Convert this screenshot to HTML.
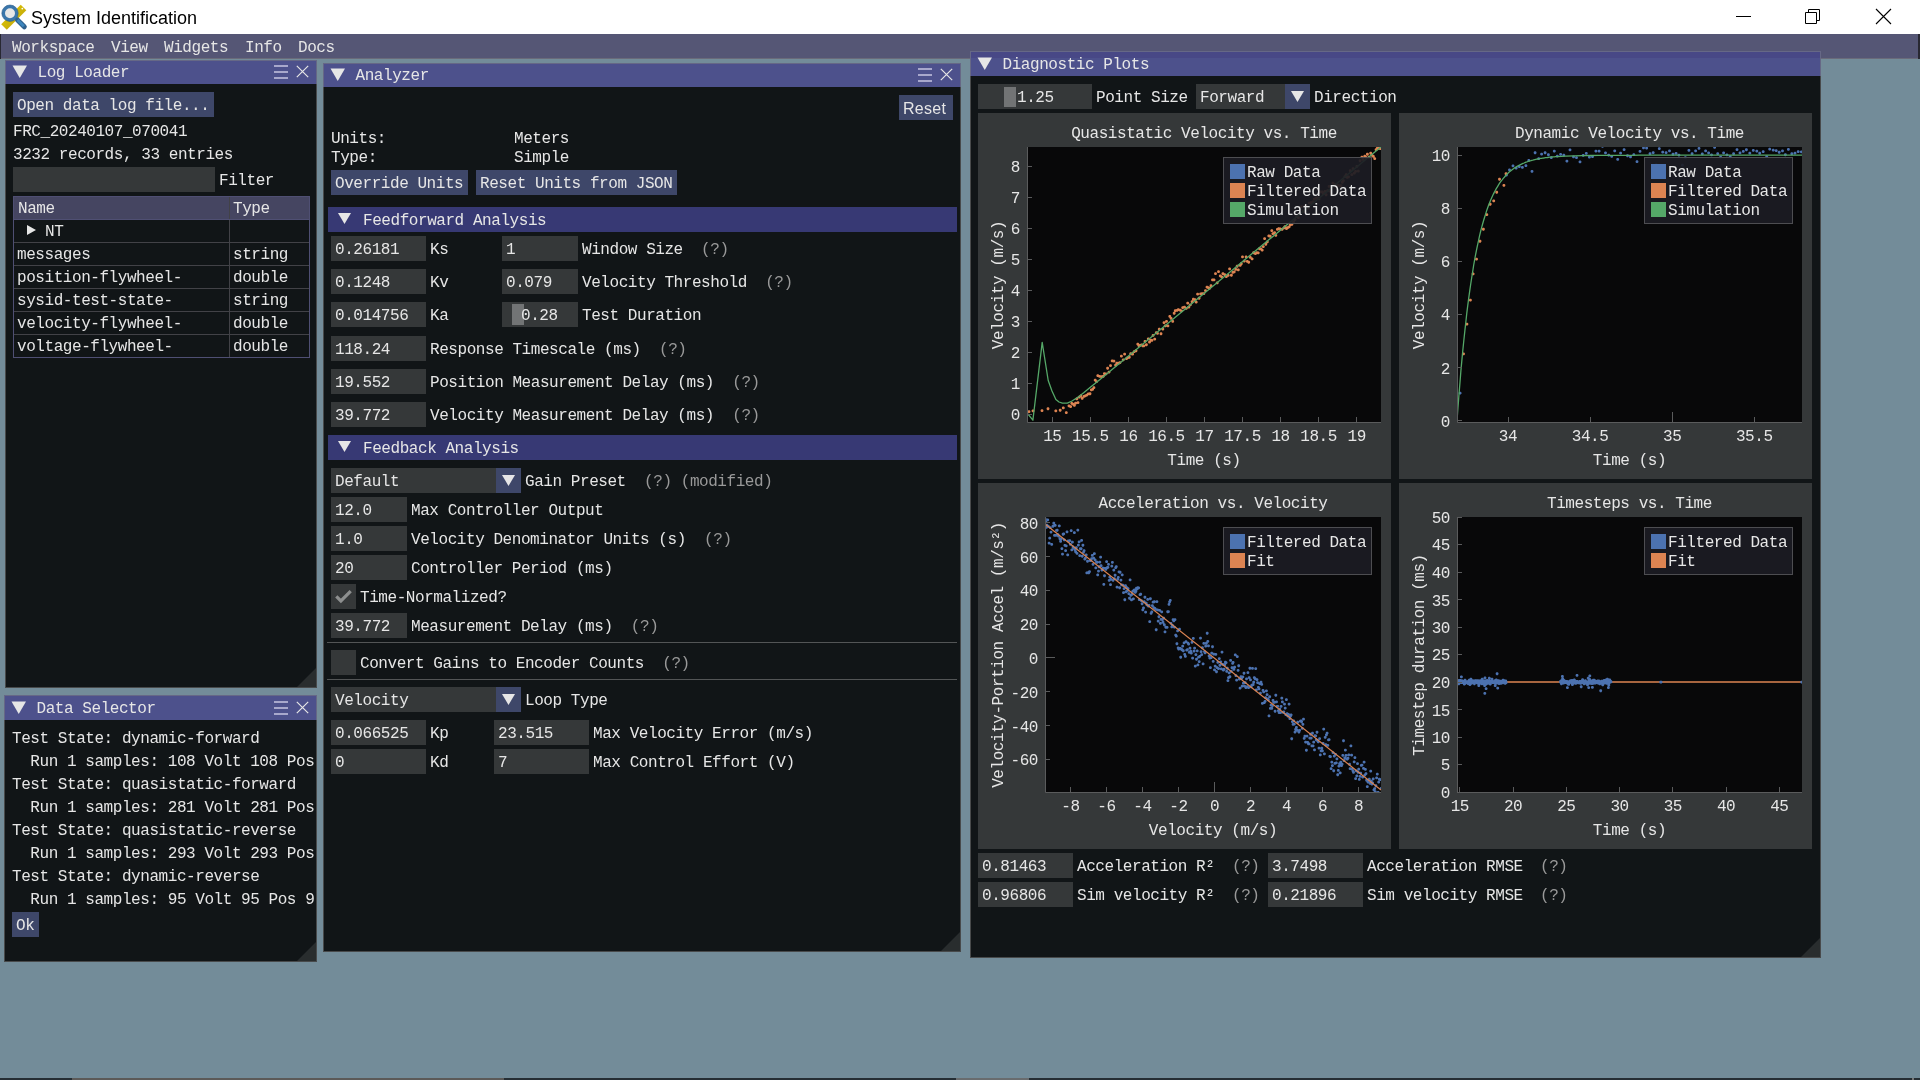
<!DOCTYPE html>
<html><head><meta charset="utf-8"><style>
html,body{margin:0;padding:0;width:1920px;height:1080px;overflow:hidden;background:rgb(115,140,153);}
.r{position:absolute;}
.t{position:absolute;font-family:"Liberation Mono",monospace;font-size:16px;line-height:16px;letter-spacing:-0.44px;white-space:pre;color:rgb(230,230,230);}
#root{position:absolute;left:0;top:0;width:1920px;height:1080px;overflow:hidden;will-change:transform;background:rgb(115,140,153);}
</style></head><body><div id="root">
<div class="r" style="left:0px;top:0px;width:1920px;height:1080px;background:rgb(115,140,153);"></div>
<div class="r" style="left:0px;top:0px;width:1920px;height:34px;background:#ffffff;"></div>
<div class="t" style="left:31px;top:10px;color:#000;font-family:'Liberation Sans',sans-serif;font-size:18px;letter-spacing:0;">System Identification</div>
<div class="r" style="left:1736px;top:16px;width:15px;height:1px;background:#000;"></div>
<svg class="r" style="left:1804px;top:8px" width="17" height="17"><path d="M1.5 4.5h11v11h-11z M4.5 4.5v-3h11v11h-3" fill="none" stroke="#000" stroke-width="1"/></svg>
<svg class="r" style="left:1875px;top:8px" width="17" height="17"><path d="M1 1L16 16M16 1L1 16" stroke="#000" stroke-width="1.1"/></svg>
<svg class="r" style="left:0px;top:0px" width="30" height="32" viewBox="0 0 30 32">
<defs><linearGradient id="yg" x1="0" y1="0" x2="1" y2="1"><stop offset="0" stop-color="#ecd000"/><stop offset="1" stop-color="#b39b10"/></linearGradient></defs>
<path d="M1.2 24.2 L20.7 4.7 L26.3 10.3 L6.8 29.8 Z" fill="url(#yg)"/>
<circle cx="22.3" cy="8.6" r="0.9" fill="#fff"/>
<line x1="17.5" y1="20" x2="24.3" y2="26.8" stroke="#2d5f8c" stroke-width="5" stroke-linecap="round"/>
<line x1="17.5" y1="20" x2="23.8" y2="26.3" stroke="#3d86bd" stroke-width="3"/>
<circle cx="10" cy="13.2" r="6.6" fill="#e6e6e6" stroke="#3a76ab" stroke-width="3.2"/>
<circle cx="10" cy="13.2" r="8.2" fill="none" stroke="#2a5d8c" stroke-width="0.6"/>
</svg>
<div class="r" style="left:0px;top:34px;width:1920px;height:24px;background:rgb(85,86,117);"></div>
<div class="r" style="left:0px;top:58px;width:1920px;height:1px;background:rgb(106,107,122);"></div>
<div class="r" style="left:0px;top:34px;width:1px;height:25px;background:rgb(40,40,50);"></div>
<div class="r" style="left:1918px;top:34px;width:2px;height:25px;background:rgb(40,40,50);"></div>
<div class="t" style="left:12px;top:40px;">Workspace</div>
<div class="t" style="left:111px;top:40px;">View</div>
<div class="t" style="left:164px;top:40px;">Widgets</div>
<div class="t" style="left:245px;top:40px;">Info</div>
<div class="t" style="left:298px;top:40px;">Docs</div>
<div class="r" style="left:0px;top:1078px;width:1920px;height:2px;background:rgb(38,46,52);"></div>
<div class="r" style="left:72px;top:1078px;width:432px;height:2px;background:rgb(92,90,88);"></div>
<div class="r" style="left:956px;top:1078px;width:73px;height:2px;background:rgb(105,108,110);"></div>
<div class="r" style="left:1912px;top:1078px;width:2px;height:2px;background:rgb(120,120,120);"></div>
<div class="r" style="left:5px;top:60px;width:312px;height:628px;background:rgb(17,21,23);"></div>
<div class="r" style="left:5px;top:60px;width:312px;height:24px;background:rgb(77,81,140);"></div>
<div class="r" style="left:5px;top:60px;width:312px;height:1px;background:rgb(102,104,134);"></div>
<div class="r" style="left:5px;top:60px;width:1px;height:24px;background:rgb(102,104,134);"></div>
<div class="r" style="left:316px;top:60px;width:1px;height:24px;background:rgb(102,104,134);"></div>
<div class="r" style="left:5px;top:84px;width:1px;height:604px;background:rgb(72,74,75);"></div>
<div class="r" style="left:316px;top:84px;width:1px;height:604px;background:rgb(72,74,75);"></div>
<div class="r" style="left:5px;top:687px;width:312px;height:1px;background:rgb(72,74,75);"></div>
<svg class="r" style="left:297px;top:668px" width="19" height="19"><polygon points="19,0 19,19 0,19" fill="rgb(41,45,46)"/></svg>
<svg class="r" style="left:12px;top:65px" width="15" height="13"><polygon points="0.5,0.5 15,0.5 7.75,13" fill="rgb(230,230,230)"/></svg>
<div class="t" style="left:37.5px;top:65px;">Log Loader</div>
<div class="r" style="left:274px;top:65px;width:14px;height:2px;background:rgb(168,168,204);"></div>
<div class="r" style="left:274px;top:71px;width:14px;height:2px;background:rgb(168,168,204);"></div>
<div class="r" style="left:274px;top:77px;width:14px;height:2px;background:rgb(168,168,204);"></div>
<svg class="r" style="left:296px;top:65px" width="13" height="13"><path d="M0.8 0.8L12.2 12.2M12.2 0.8L0.8 12.2" stroke="rgb(230,230,230)" stroke-width="1.2"/></svg>
<div class="r" style="left:13px;top:92px;width:201px;height:25px;background:rgb(62,71,105);"></div>
<div class="t" style="left:17px;top:98px;">Open data log file...</div>
<div class="t" style="left:13px;top:124px;">FRC_20240107_070041</div>
<div class="t" style="left:13px;top:147px;">3232 records, 33 entries</div>
<div class="r" style="left:13px;top:167px;width:202px;height:25px;background:rgb(53,56,57);"></div>
<div class="t" style="left:219px;top:173px;">Filter</div>
<div class="r" style="left:13px;top:196px;width:297px;height:24px;background:rgb(69,69,97);"></div>
<div class="r" style="left:13px;top:196px;width:295px;height:160px;border:1px solid rgb(79,79,115);"></div>
<div class="r" style="left:229px;top:197px;width:1px;height:160px;background:rgb(66,66,71);"></div>
<div class="r" style="left:14px;top:242px;width:295px;height:1px;background:rgb(66,66,71);"></div>
<div class="r" style="left:14px;top:265px;width:295px;height:1px;background:rgb(66,66,71);"></div>
<div class="r" style="left:14px;top:288px;width:295px;height:1px;background:rgb(66,66,71);"></div>
<div class="r" style="left:14px;top:311px;width:295px;height:1px;background:rgb(66,66,71);"></div>
<div class="r" style="left:14px;top:334px;width:295px;height:1px;background:rgb(66,66,71);"></div>
<div class="r" style="left:13px;top:219px;width:297px;height:1px;background:rgb(79,79,115);"></div>
<div class="t" style="left:18px;top:201px;">Name</div>
<div class="t" style="left:233px;top:201px;">Type</div>
<svg class="r" style="left:27px;top:225px" width="9" height="10"><polygon points="0,0 9,5.0 0,10" fill="rgb(230,230,230)"/></svg>
<div class="t" style="left:45px;top:224px;">NT</div>
<div class="t" style="left:17px;top:247px;">messages</div>
<div class="t" style="left:233px;top:247px;">string</div>
<div class="t" style="left:17px;top:270px;">position-flywheel-</div>
<div class="t" style="left:233px;top:270px;">double</div>
<div class="t" style="left:17px;top:293px;">sysid-test-state-</div>
<div class="t" style="left:233px;top:293px;">string</div>
<div class="t" style="left:17px;top:316px;">velocity-flywheel-</div>
<div class="t" style="left:233px;top:316px;">double</div>
<div class="t" style="left:17px;top:339px;">voltage-flywheel-</div>
<div class="t" style="left:233px;top:339px;">double</div>
<div class="r" style="left:4px;top:695px;width:313px;height:267px;background:rgb(17,21,23);"></div>
<div class="r" style="left:4px;top:695px;width:313px;height:25px;background:rgb(77,81,140);"></div>
<div class="r" style="left:4px;top:695px;width:313px;height:1px;background:rgb(102,104,134);"></div>
<div class="r" style="left:4px;top:695px;width:1px;height:25px;background:rgb(102,104,134);"></div>
<div class="r" style="left:316px;top:695px;width:1px;height:25px;background:rgb(102,104,134);"></div>
<div class="r" style="left:4px;top:720px;width:1px;height:242px;background:rgb(72,74,75);"></div>
<div class="r" style="left:316px;top:720px;width:1px;height:242px;background:rgb(72,74,75);"></div>
<div class="r" style="left:4px;top:961px;width:313px;height:1px;background:rgb(72,74,75);"></div>
<svg class="r" style="left:297px;top:942px" width="19" height="19"><polygon points="19,0 19,19 0,19" fill="rgb(41,45,46)"/></svg>
<svg class="r" style="left:11px;top:701px" width="15" height="13"><polygon points="0.5,0.5 15,0.5 7.75,13" fill="rgb(230,230,230)"/></svg>
<div class="t" style="left:36.5px;top:701px;">Data Selector</div>
<div class="r" style="left:274px;top:701px;width:14px;height:2px;background:rgb(168,168,204);"></div>
<div class="r" style="left:274px;top:707px;width:14px;height:2px;background:rgb(168,168,204);"></div>
<div class="r" style="left:274px;top:713px;width:14px;height:2px;background:rgb(168,168,204);"></div>
<svg class="r" style="left:296px;top:701px" width="13" height="13"><path d="M0.8 0.8L12.2 12.2M12.2 0.8L0.8 12.2" stroke="rgb(230,230,230)" stroke-width="1.2"/></svg>
<div class="r" style="left:0;top:720px;width:315px;height:190px;overflow:hidden">
<div class="t" style="left:12px;top:11px;">Test State: dynamic-forward</div>
<div class="t" style="left:12px;top:34px;">  Run 1 samples: 108 Volt 108 Pos</div>
<div class="t" style="left:12px;top:57px;">Test State: quasistatic-forward</div>
<div class="t" style="left:12px;top:80px;">  Run 1 samples: 281 Volt 281 Pos</div>
<div class="t" style="left:12px;top:103px;">Test State: quasistatic-reverse</div>
<div class="t" style="left:12px;top:126px;">  Run 1 samples: 293 Volt 293 Pos</div>
<div class="t" style="left:12px;top:149px;">Test State: dynamic-reverse</div>
<div class="t" style="left:12px;top:172px;">  Run 1 samples: 95 Volt 95 Pos 9</div>
</div>
<div class="r" style="left:12px;top:912px;width:27px;height:25px;background:rgb(62,71,105);"></div>
<div class="t" style="left:16px;top:918px;">Ok</div>
<div class="r" style="left:323px;top:63px;width:638px;height:889px;background:rgb(17,21,23);"></div>
<div class="r" style="left:323px;top:63px;width:638px;height:24px;background:rgb(77,81,140);"></div>
<div class="r" style="left:323px;top:63px;width:638px;height:1px;background:rgb(102,104,134);"></div>
<div class="r" style="left:323px;top:63px;width:1px;height:24px;background:rgb(102,104,134);"></div>
<div class="r" style="left:960px;top:63px;width:1px;height:24px;background:rgb(102,104,134);"></div>
<div class="r" style="left:323px;top:87px;width:1px;height:865px;background:rgb(72,74,75);"></div>
<div class="r" style="left:960px;top:87px;width:1px;height:865px;background:rgb(72,74,75);"></div>
<div class="r" style="left:323px;top:951px;width:638px;height:1px;background:rgb(72,74,75);"></div>
<svg class="r" style="left:941px;top:932px" width="19" height="19"><polygon points="19,0 19,19 0,19" fill="rgb(41,45,46)"/></svg>
<svg class="r" style="left:330px;top:68px" width="15" height="13"><polygon points="0.5,0.5 15,0.5 7.75,13" fill="rgb(230,230,230)"/></svg>
<div class="t" style="left:355.5px;top:68px;">Analyzer</div>
<div class="r" style="left:918px;top:68px;width:14px;height:2px;background:rgb(168,168,204);"></div>
<div class="r" style="left:918px;top:74px;width:14px;height:2px;background:rgb(168,168,204);"></div>
<div class="r" style="left:918px;top:80px;width:14px;height:2px;background:rgb(168,168,204);"></div>
<svg class="r" style="left:940px;top:68px" width="13" height="13"><path d="M0.8 0.8L12.2 12.2M12.2 0.8L0.8 12.2" stroke="rgb(230,230,230)" stroke-width="1.2"/></svg>
<div class="r" style="left:899px;top:95px;width:54px;height:25px;background:rgb(62,71,105);"></div>
<div class="t" style="left:903px;top:101px;font-family:'Liberation Sans',sans-serif;font-size:16px;letter-spacing:0.3px;">Reset</div>
<div class="t" style="left:331px;top:131px;">Units:</div>
<div class="t" style="left:514px;top:131px;">Meters</div>
<div class="t" style="left:331px;top:150px;">Type:</div>
<div class="t" style="left:514px;top:150px;">Simple</div>
<div class="r" style="left:331px;top:170px;width:137px;height:25px;background:rgb(62,71,105);"></div>
<div class="t" style="left:335px;top:176px;">Override Units</div>
<div class="r" style="left:476px;top:170px;width:201px;height:25px;background:rgb(62,71,105);"></div>
<div class="t" style="left:480px;top:176px;">Reset Units from JSON</div>
<div class="r" style="left:328px;top:207px;width:629px;height:25px;background:rgb(55,57,116);"></div>
<svg class="r" style="left:338px;top:213px" width="13" height="11"><polygon points="0,0 13,0 6.5,11" fill="rgb(230,230,230)"/></svg>
<div class="t" style="left:363px;top:213px;">Feedforward Analysis</div>
<div class="r" style="left:331px;top:236px;width:95px;height:25px;background:rgb(53,56,57);"></div>
<div class="t" style="left:335px;top:242px;">0.26181</div>
<div class="t" style="left:430px;top:242px;">Ks</div>
<div class="r" style="left:502px;top:236px;width:76px;height:25px;background:rgb(53,56,57);"></div>
<div class="t" style="left:506px;top:242px;">1</div>
<div class="t" style="left:582px;top:242px;">Window Size</div>
<div class="t" style="left:682.76px;top:242px;color:rgb(153,153,153);">  (?)</div>
<div class="r" style="left:331px;top:269px;width:95px;height:25px;background:rgb(53,56,57);"></div>
<div class="t" style="left:335px;top:275px;">0.1248</div>
<div class="t" style="left:430px;top:275px;">Kv</div>
<div class="r" style="left:502px;top:269px;width:76px;height:25px;background:rgb(53,56,57);"></div>
<div class="t" style="left:506px;top:275px;">0.079</div>
<div class="t" style="left:582px;top:275px;">Velocity Threshold</div>
<div class="t" style="left:746.88px;top:275px;color:rgb(153,153,153);">  (?)</div>
<div class="r" style="left:331px;top:302px;width:95px;height:25px;background:rgb(53,56,57);"></div>
<div class="t" style="left:335px;top:308px;">0.014756</div>
<div class="t" style="left:430px;top:308px;">Ka</div>
<div class="r" style="left:502px;top:302px;width:76px;height:25px;background:rgb(53,56,57);"></div>
<div class="r" style="left:512px;top:304px;width:12px;height:21px;background:rgb(114,116,117);"></div>
<div class="t" style="left:521px;top:308px;">0.28</div>
<div class="t" style="left:582px;top:308px;">Test Duration</div>
<div class="r" style="left:331px;top:336px;width:95px;height:25px;background:rgb(53,56,57);"></div>
<div class="t" style="left:335px;top:342px;">118.24</div>
<div class="t" style="left:430px;top:342px;">Response Timescale (ms)</div>
<div class="t" style="left:640.6800000000001px;top:342px;color:rgb(153,153,153);">  (?)</div>
<div class="r" style="left:331px;top:369px;width:95px;height:25px;background:rgb(53,56,57);"></div>
<div class="t" style="left:335px;top:375px;">19.552</div>
<div class="t" style="left:430px;top:375px;">Position Measurement Delay (ms)</div>
<div class="t" style="left:713.96px;top:375px;color:rgb(153,153,153);">  (?)</div>
<div class="r" style="left:331px;top:402px;width:95px;height:25px;background:rgb(53,56,57);"></div>
<div class="t" style="left:335px;top:408px;">39.772</div>
<div class="t" style="left:430px;top:408px;">Velocity Measurement Delay (ms)</div>
<div class="t" style="left:713.96px;top:408px;color:rgb(153,153,153);">  (?)</div>
<div class="r" style="left:328px;top:435px;width:629px;height:25px;background:rgb(55,57,116);"></div>
<svg class="r" style="left:338px;top:441px" width="13" height="11"><polygon points="0,0 13,0 6.5,11" fill="rgb(230,230,230)"/></svg>
<div class="t" style="left:363px;top:441px;">Feedback Analysis</div>
<div class="r" style="left:331px;top:468px;width:165px;height:25px;background:rgb(53,56,57);"></div>
<div class="r" style="left:496px;top:468px;width:25px;height:25px;background:rgb(62,71,105);"></div>
<svg class="r" style="left:502px;top:475px" width="13" height="11"><polygon points="0,0 13,0 6.5,11" fill="rgb(230,230,230)"/></svg>
<div class="t" style="left:335px;top:474px;">Default</div>
<div class="t" style="left:525px;top:474px;">Gain Preset</div>
<div class="t" style="left:625.76px;top:474px;color:rgb(153,153,153);">  (?) (modified)</div>
<div class="r" style="left:331px;top:497px;width:76px;height:25px;background:rgb(53,56,57);"></div>
<div class="t" style="left:335px;top:503px;">12.0</div>
<div class="t" style="left:411px;top:503px;">Max Controller Output</div>
<div class="r" style="left:331px;top:526px;width:76px;height:25px;background:rgb(53,56,57);"></div>
<div class="t" style="left:335px;top:532px;">1.0</div>
<div class="t" style="left:411px;top:532px;">Velocity Denominator Units (s)</div>
<div class="t" style="left:685.8px;top:532px;color:rgb(153,153,153);">  (?)</div>
<div class="r" style="left:331px;top:555px;width:76px;height:25px;background:rgb(53,56,57);"></div>
<div class="t" style="left:335px;top:561px;">20</div>
<div class="t" style="left:411px;top:561px;">Controller Period (ms)</div>
<div class="r" style="left:331px;top:584px;width:25px;height:25px;background:rgb(53,56,57);"></div>
<svg class="r" style="left:331px;top:584px" width="25" height="25"><path d="M5.3 12.3 L9.9 16.9 L19.7 7.1" fill="none" stroke="rgb(141,143,143)" stroke-width="3.2"/></svg>
<div class="t" style="left:360px;top:590px;">Time-Normalized?</div>
<div class="r" style="left:331px;top:613px;width:76px;height:25px;background:rgb(53,56,57);"></div>
<div class="t" style="left:335px;top:619px;">39.772</div>
<div class="t" style="left:411px;top:619px;">Measurement Delay (ms)</div>
<div class="t" style="left:612.52px;top:619px;color:rgb(153,153,153);">  (?)</div>
<div class="r" style="left:327px;top:642px;width:630px;height:1px;background:rgb(83,85,86);"></div>
<div class="r" style="left:331px;top:650px;width:25px;height:25px;background:rgb(53,56,57);"></div>
<div class="t" style="left:360px;top:656px;">Convert Gains to Encoder Counts</div>
<div class="t" style="left:643.96px;top:656px;color:rgb(153,153,153);">  (?)</div>
<div class="r" style="left:327px;top:679px;width:630px;height:1px;background:rgb(83,85,86);"></div>
<div class="r" style="left:331px;top:687px;width:165px;height:25px;background:rgb(53,56,57);"></div>
<div class="r" style="left:496px;top:687px;width:25px;height:25px;background:rgb(62,71,105);"></div>
<svg class="r" style="left:502px;top:694px" width="13" height="11"><polygon points="0,0 13,0 6.5,11" fill="rgb(230,230,230)"/></svg>
<div class="t" style="left:335px;top:693px;">Velocity</div>
<div class="t" style="left:525px;top:693px;">Loop Type</div>
<div class="r" style="left:331px;top:720px;width:95px;height:25px;background:rgb(53,56,57);"></div>
<div class="t" style="left:335px;top:726px;">0.066525</div>
<div class="t" style="left:430px;top:726px;">Kp</div>
<div class="r" style="left:494px;top:720px;width:95px;height:25px;background:rgb(53,56,57);"></div>
<div class="t" style="left:498px;top:726px;">23.515</div>
<div class="t" style="left:593px;top:726px;">Max Velocity Error (m/s)</div>
<div class="r" style="left:331px;top:749px;width:95px;height:25px;background:rgb(53,56,57);"></div>
<div class="t" style="left:335px;top:755px;">0</div>
<div class="t" style="left:430px;top:755px;">Kd</div>
<div class="r" style="left:494px;top:749px;width:95px;height:25px;background:rgb(53,56,57);"></div>
<div class="t" style="left:498px;top:755px;">7</div>
<div class="t" style="left:593px;top:755px;">Max Control Effort (V)</div>
<div class="r" style="left:970px;top:51px;width:851px;height:907px;background:rgb(17,21,23);"></div>
<div class="r" style="left:970px;top:51px;width:851px;height:25px;background:rgb(77,81,140);"></div>
<div class="r" style="left:970px;top:51px;width:851px;height:7px;background:rgb(72,72,134);"></div>
<div class="r" style="left:970px;top:51px;width:851px;height:1px;background:rgb(102,104,134);"></div>
<div class="r" style="left:970px;top:51px;width:1px;height:25px;background:rgb(102,104,134);"></div>
<div class="r" style="left:1820px;top:51px;width:1px;height:25px;background:rgb(102,104,134);"></div>
<div class="r" style="left:970px;top:76px;width:1px;height:882px;background:rgb(72,74,75);"></div>
<div class="r" style="left:1820px;top:76px;width:1px;height:882px;background:rgb(72,74,75);"></div>
<div class="r" style="left:970px;top:957px;width:851px;height:1px;background:rgb(72,74,75);"></div>
<svg class="r" style="left:1801px;top:938px" width="19" height="19"><polygon points="19,0 19,19 0,19" fill="rgb(41,45,46)"/></svg>
<svg class="r" style="left:977px;top:57px" width="15" height="13"><polygon points="0.5,0.5 15,0.5 7.75,13" fill="rgb(230,230,230)"/></svg>
<div class="t" style="left:1002.5px;top:57px;">Diagnostic Plots</div>
<div class="r" style="left:978px;top:84px;width:114px;height:25px;background:rgb(53,56,57);"></div>
<div class="r" style="left:1004px;top:87px;width:12px;height:20px;background:rgb(114,116,117);"></div>
<div class="t" style="left:1017px;top:90px;">1.25</div>
<div class="t" style="left:1096px;top:90px;">Point Size</div>
<div class="r" style="left:1196px;top:84px;width:89px;height:25px;background:rgb(53,56,57);"></div>
<div class="r" style="left:1285px;top:84px;width:25px;height:25px;background:rgb(62,71,105);"></div>
<svg class="r" style="left:1291px;top:91px" width="13" height="11"><polygon points="0,0 13,0 6.5,11" fill="rgb(230,230,230)"/></svg>
<div class="t" style="left:1200px;top:90px;">Forward</div>
<div class="t" style="left:1314px;top:90px;">Direction</div>
<div class="r" style="left:978px;top:113px;width:413px;height:366px;background:rgb(53,56,57);"></div>
<div class="r" style="left:1027px;top:147px;width:354px;height:275px;background:rgb(8,8,9);"></div>
<div class="t" style="left:904.0px;width:600px;text-align:center;top:126px;">Quasistatic Velocity vs. Time</div>
<div class="t" style="left:904.0px;width:600px;text-align:center;top:453px;">Time (s)</div>
<svg class="r" style="left:1027px;top:147px;overflow:hidden" width="354" height="276"><path d="M0.6 263.9l0.77 -0.77h1.26l0.77 0.77v1.26l-0.77 0.77h-1.26l-0.77 -0.77zM4.6 263.3l0.77 -0.77h1.26l0.77 0.77v1.26l-0.77 0.77h-1.26l-0.77 -0.77zM13.6 262.9l0.77 -0.77h1.26l0.77 0.77v1.26l-0.77 0.77h-1.26l-0.77 -0.77zM19.6 261.1l0.77 -0.77h1.26l0.77 0.77v1.26l-0.77 0.77h-1.26l-0.77 -0.77zM27.4 263.3l0.77 -0.77h1.26l0.77 0.77v1.26l-0.77 0.77h-1.26l-0.77 -0.77zM31.8 262.6l0.77 -0.77h1.26l0.77 0.77v1.26l-0.77 0.77h-1.26l-0.77 -0.77zM34.9 260.2l0.77 -0.77h1.26l0.77 0.77v1.26l-0.77 0.77h-1.26l-0.77 -0.77zM37.9 265.0l0.77 -0.77h1.26l0.77 0.77v1.26l-0.77 0.77h-1.26l-0.77 -0.77zM40.6 258.3l0.77 -0.77h1.26l0.77 0.77v1.26l-0.77 0.77h-1.26l-0.77 -0.77zM42.2 258.9l0.77 -0.77h1.26l0.77 0.77v1.26l-0.77 0.77h-1.26l-0.77 -0.77zM43.4 255.8l0.77 -0.77h1.26l0.77 0.77v1.26l-0.77 0.77h-1.26l-0.77 -0.77zM44.5 256.4l0.77 -0.77h1.26l0.77 0.77v1.26l-0.77 0.77h-1.26l-0.77 -0.77zM46.0 257.7l0.77 -0.77h1.26l0.77 0.77v1.26l-0.77 0.77h-1.26l-0.77 -0.77zM47.2 255.5l0.77 -0.77h1.26l0.77 0.77v1.26l-0.77 0.77h-1.26l-0.77 -0.77zM48.4 251.3l0.77 -0.77h1.26l0.77 0.77v1.26l-0.77 0.77h-1.26l-0.77 -0.77zM49.6 255.0l0.77 -0.77h1.26l0.77 0.77v1.26l-0.77 0.77h-1.26l-0.77 -0.77zM50.8 249.5l0.77 -0.77h1.26l0.77 0.77v1.26l-0.77 0.77h-1.26l-0.77 -0.77zM52.4 248.2l0.77 -0.77h1.26l0.77 0.77v1.26l-0.77 0.77h-1.26l-0.77 -0.77zM53.8 250.8l0.77 -0.77h1.26l0.77 0.77v1.26l-0.77 0.77h-1.26l-0.77 -0.77zM55.6 248.8l0.77 -0.77h1.26l0.77 0.77v1.26l-0.77 0.77h-1.26l-0.77 -0.77zM56.9 248.3l0.77 -0.77h1.26l0.77 0.77v1.26l-0.77 0.77h-1.26l-0.77 -0.77zM58.3 247.4l0.77 -0.77h1.26l0.77 0.77v1.26l-0.77 0.77h-1.26l-0.77 -0.77zM60.0 246.3l0.77 -0.77h1.26l0.77 0.77v1.26l-0.77 0.77h-1.26l-0.77 -0.77zM61.6 246.1l0.77 -0.77h1.26l0.77 0.77v1.26l-0.77 0.77h-1.26l-0.77 -0.77zM63.0 242.2l0.77 -0.77h1.26l0.77 0.77v1.26l-0.77 0.77h-1.26l-0.77 -0.77zM64.2 241.7l0.77 -0.77h1.26l0.77 0.77v1.26l-0.77 0.77h-1.26l-0.77 -0.77zM65.5 240.0l0.77 -0.77h1.26l0.77 0.77v1.26l-0.77 0.77h-1.26l-0.77 -0.77zM66.8 232.4l0.77 -0.77h1.26l0.77 0.77v1.26l-0.77 0.77h-1.26l-0.77 -0.77zM68.1 234.0l0.77 -0.77h1.26l0.77 0.77v1.26l-0.77 0.77h-1.26l-0.77 -0.77zM69.4 228.0l0.77 -0.77h1.26l0.77 0.77v1.26l-0.77 0.77h-1.26l-0.77 -0.77zM71.2 228.8l0.77 -0.77h1.26l0.77 0.77v1.26l-0.77 0.77h-1.26l-0.77 -0.77zM73.1 228.9l0.77 -0.77h1.26l0.77 0.77v1.26l-0.77 0.77h-1.26l-0.77 -0.77zM74.8 228.8l0.77 -0.77h1.26l0.77 0.77v1.26l-0.77 0.77h-1.26l-0.77 -0.77zM76.0 225.9l0.77 -0.77h1.26l0.77 0.77v1.26l-0.77 0.77h-1.26l-0.77 -0.77zM77.5 226.2l0.77 -0.77h1.26l0.77 0.77v1.26l-0.77 0.77h-1.26l-0.77 -0.77zM79.2 220.6l0.77 -0.77h1.26l0.77 0.77v1.26l-0.77 0.77h-1.26l-0.77 -0.77zM80.6 224.5l0.77 -0.77h1.26l0.77 0.77v1.26l-0.77 0.77h-1.26l-0.77 -0.77zM82.1 218.0l0.77 -0.77h1.26l0.77 0.77v1.26l-0.77 0.77h-1.26l-0.77 -0.77zM83.8 213.3l0.77 -0.77h1.26l0.77 0.77v1.26l-0.77 0.77h-1.26l-0.77 -0.77zM85.5 213.5l0.77 -0.77h1.26l0.77 0.77v1.26l-0.77 0.77h-1.26l-0.77 -0.77zM87.2 217.6l0.77 -0.77h1.26l0.77 0.77v1.26l-0.77 0.77h-1.26l-0.77 -0.77zM88.4 215.6l0.77 -0.77h1.26l0.77 0.77v1.26l-0.77 0.77h-1.26l-0.77 -0.77zM90.1 215.6l0.77 -0.77h1.26l0.77 0.77v1.26l-0.77 0.77h-1.26l-0.77 -0.77zM91.5 215.0l0.77 -0.77h1.26l0.77 0.77v1.26l-0.77 0.77h-1.26l-0.77 -0.77zM93.0 208.4l0.77 -0.77h1.26l0.77 0.77v1.26l-0.77 0.77h-1.26l-0.77 -0.77zM94.8 212.2l0.77 -0.77h1.26l0.77 0.77v1.26l-0.77 0.77h-1.26l-0.77 -0.77zM96.2 206.4l0.77 -0.77h1.26l0.77 0.77v1.26l-0.77 0.77h-1.26l-0.77 -0.77zM98.1 211.0l0.77 -0.77h1.26l0.77 0.77v1.26l-0.77 0.77h-1.26l-0.77 -0.77zM99.3 210.0l0.77 -0.77h1.26l0.77 0.77v1.26l-0.77 0.77h-1.26l-0.77 -0.77zM100.9 209.6l0.77 -0.77h1.26l0.77 0.77v1.26l-0.77 0.77h-1.26l-0.77 -0.77zM102.3 206.1l0.77 -0.77h1.26l0.77 0.77v1.26l-0.77 0.77h-1.26l-0.77 -0.77zM104.2 206.4l0.77 -0.77h1.26l0.77 0.77v1.26l-0.77 0.77h-1.26l-0.77 -0.77zM105.8 203.9l0.77 -0.77h1.26l0.77 0.77v1.26l-0.77 0.77h-1.26l-0.77 -0.77zM107.6 203.1l0.77 -0.77h1.26l0.77 0.77v1.26l-0.77 0.77h-1.26l-0.77 -0.77zM109.4 196.5l0.77 -0.77h1.26l0.77 0.77v1.26l-0.77 0.77h-1.26l-0.77 -0.77zM110.5 198.0l0.77 -0.77h1.26l0.77 0.77v1.26l-0.77 0.77h-1.26l-0.77 -0.77zM111.7 197.8l0.77 -0.77h1.26l0.77 0.77v1.26l-0.77 0.77h-1.26l-0.77 -0.77zM113.1 197.3l0.77 -0.77h1.26l0.77 0.77v1.26l-0.77 0.77h-1.26l-0.77 -0.77zM114.3 198.1l0.77 -0.77h1.26l0.77 0.77v1.26l-0.77 0.77h-1.26l-0.77 -0.77zM115.4 198.3l0.77 -0.77h1.26l0.77 0.77v1.26l-0.77 0.77h-1.26l-0.77 -0.77zM116.6 193.8l0.77 -0.77h1.26l0.77 0.77v1.26l-0.77 0.77h-1.26l-0.77 -0.77zM118.0 197.1l0.77 -0.77h1.26l0.77 0.77v1.26l-0.77 0.77h-1.26l-0.77 -0.77zM119.9 191.3l0.77 -0.77h1.26l0.77 0.77v1.26l-0.77 0.77h-1.26l-0.77 -0.77zM121.1 194.5l0.77 -0.77h1.26l0.77 0.77v1.26l-0.77 0.77h-1.26l-0.77 -0.77zM122.4 192.6l0.77 -0.77h1.26l0.77 0.77v1.26l-0.77 0.77h-1.26l-0.77 -0.77zM123.5 192.7l0.77 -0.77h1.26l0.77 0.77v1.26l-0.77 0.77h-1.26l-0.77 -0.77zM124.7 187.8l0.77 -0.77h1.26l0.77 0.77v1.26l-0.77 0.77h-1.26l-0.77 -0.77zM126.3 191.4l0.77 -0.77h1.26l0.77 0.77v1.26l-0.77 0.77h-1.26l-0.77 -0.77zM127.9 185.0l0.77 -0.77h1.26l0.77 0.77v1.26l-0.77 0.77h-1.26l-0.77 -0.77zM129.1 185.7l0.77 -0.77h1.26l0.77 0.77v1.26l-0.77 0.77h-1.26l-0.77 -0.77zM130.9 181.4l0.77 -0.77h1.26l0.77 0.77v1.26l-0.77 0.77h-1.26l-0.77 -0.77zM132.6 186.1l0.77 -0.77h1.26l0.77 0.77v1.26l-0.77 0.77h-1.26l-0.77 -0.77zM134.4 181.5l0.77 -0.77h1.26l0.77 0.77v1.26l-0.77 0.77h-1.26l-0.77 -0.77zM135.6 174.9l0.77 -0.77h1.26l0.77 0.77v1.26l-0.77 0.77h-1.26l-0.77 -0.77zM136.8 178.2l0.77 -0.77h1.26l0.77 0.77v1.26l-0.77 0.77h-1.26l-0.77 -0.77zM138.1 173.7l0.77 -0.77h1.26l0.77 0.77v1.26l-0.77 0.77h-1.26l-0.77 -0.77zM139.5 178.3l0.77 -0.77h1.26l0.77 0.77v1.26l-0.77 0.77h-1.26l-0.77 -0.77zM141.4 168.7l0.77 -0.77h1.26l0.77 0.77v1.26l-0.77 0.77h-1.26l-0.77 -0.77zM142.7 170.7l0.77 -0.77h1.26l0.77 0.77v1.26l-0.77 0.77h-1.26l-0.77 -0.77zM144.3 173.8l0.77 -0.77h1.26l0.77 0.77v1.26l-0.77 0.77h-1.26l-0.77 -0.77zM145.8 165.6l0.77 -0.77h1.26l0.77 0.77v1.26l-0.77 0.77h-1.26l-0.77 -0.77zM146.9 163.0l0.77 -0.77h1.26l0.77 0.77v1.26l-0.77 0.77h-1.26l-0.77 -0.77zM148.7 162.8l0.77 -0.77h1.26l0.77 0.77v1.26l-0.77 0.77h-1.26l-0.77 -0.77zM149.9 162.0l0.77 -0.77h1.26l0.77 0.77v1.26l-0.77 0.77h-1.26l-0.77 -0.77zM151.6 162.4l0.77 -0.77h1.26l0.77 0.77v1.26l-0.77 0.77h-1.26l-0.77 -0.77zM153.1 163.3l0.77 -0.77h1.26l0.77 0.77v1.26l-0.77 0.77h-1.26l-0.77 -0.77zM154.3 160.0l0.77 -0.77h1.26l0.77 0.77v1.26l-0.77 0.77h-1.26l-0.77 -0.77zM156.1 159.4l0.77 -0.77h1.26l0.77 0.77v1.26l-0.77 0.77h-1.26l-0.77 -0.77zM157.9 160.8l0.77 -0.77h1.26l0.77 0.77v1.26l-0.77 0.77h-1.26l-0.77 -0.77zM159.3 155.5l0.77 -0.77h1.26l0.77 0.77v1.26l-0.77 0.77h-1.26l-0.77 -0.77zM160.4 159.4l0.77 -0.77h1.26l0.77 0.77v1.26l-0.77 0.77h-1.26l-0.77 -0.77zM161.9 157.2l0.77 -0.77h1.26l0.77 0.77v1.26l-0.77 0.77h-1.26l-0.77 -0.77zM163.7 154.1l0.77 -0.77h1.26l0.77 0.77v1.26l-0.77 0.77h-1.26l-0.77 -0.77zM165.0 151.6l0.77 -0.77h1.26l0.77 0.77v1.26l-0.77 0.77h-1.26l-0.77 -0.77zM166.6 152.0l0.77 -0.77h1.26l0.77 0.77v1.26l-0.77 0.77h-1.26l-0.77 -0.77zM167.8 154.4l0.77 -0.77h1.26l0.77 0.77v1.26l-0.77 0.77h-1.26l-0.77 -0.77zM169.2 146.4l0.77 -0.77h1.26l0.77 0.77v1.26l-0.77 0.77h-1.26l-0.77 -0.77zM170.7 150.6l0.77 -0.77h1.26l0.77 0.77v1.26l-0.77 0.77h-1.26l-0.77 -0.77zM172.2 146.2l0.77 -0.77h1.26l0.77 0.77v1.26l-0.77 0.77h-1.26l-0.77 -0.77zM173.6 145.9l0.77 -0.77h1.26l0.77 0.77v1.26l-0.77 0.77h-1.26l-0.77 -0.77zM175.4 146.0l0.77 -0.77h1.26l0.77 0.77v1.26l-0.77 0.77h-1.26l-0.77 -0.77zM177.1 142.9l0.77 -0.77h1.26l0.77 0.77v1.26l-0.77 0.77h-1.26l-0.77 -0.77zM178.6 139.4l0.77 -0.77h1.26l0.77 0.77v1.26l-0.77 0.77h-1.26l-0.77 -0.77zM179.8 139.9l0.77 -0.77h1.26l0.77 0.77v1.26l-0.77 0.77h-1.26l-0.77 -0.77zM181.1 140.6l0.77 -0.77h1.26l0.77 0.77v1.26l-0.77 0.77h-1.26l-0.77 -0.77zM182.6 138.1l0.77 -0.77h1.26l0.77 0.77v1.26l-0.77 0.77h-1.26l-0.77 -0.77zM184.1 132.3l0.77 -0.77h1.26l0.77 0.77v1.26l-0.77 0.77h-1.26l-0.77 -0.77zM185.6 132.2l0.77 -0.77h1.26l0.77 0.77v1.26l-0.77 0.77h-1.26l-0.77 -0.77zM187.1 126.0l0.77 -0.77h1.26l0.77 0.77v1.26l-0.77 0.77h-1.26l-0.77 -0.77zM188.8 135.3l0.77 -0.77h1.26l0.77 0.77v1.26l-0.77 0.77h-1.26l-0.77 -0.77zM190.1 123.9l0.77 -0.77h1.26l0.77 0.77v1.26l-0.77 0.77h-1.26l-0.77 -0.77zM191.9 128.2l0.77 -0.77h1.26l0.77 0.77v1.26l-0.77 0.77h-1.26l-0.77 -0.77zM193.3 129.2l0.77 -0.77h1.26l0.77 0.77v1.26l-0.77 0.77h-1.26l-0.77 -0.77zM194.5 125.9l0.77 -0.77h1.26l0.77 0.77v1.26l-0.77 0.77h-1.26l-0.77 -0.77zM196.3 127.0l0.77 -0.77h1.26l0.77 0.77v1.26l-0.77 0.77h-1.26l-0.77 -0.77zM197.9 128.9l0.77 -0.77h1.26l0.77 0.77v1.26l-0.77 0.77h-1.26l-0.77 -0.77zM199.8 127.7l0.77 -0.77h1.26l0.77 0.77v1.26l-0.77 0.77h-1.26l-0.77 -0.77zM201.2 121.2l0.77 -0.77h1.26l0.77 0.77v1.26l-0.77 0.77h-1.26l-0.77 -0.77zM203.0 127.6l0.77 -0.77h1.26l0.77 0.77v1.26l-0.77 0.77h-1.26l-0.77 -0.77zM204.5 124.7l0.77 -0.77h1.26l0.77 0.77v1.26l-0.77 0.77h-1.26l-0.77 -0.77zM205.8 124.2l0.77 -0.77h1.26l0.77 0.77v1.26l-0.77 0.77h-1.26l-0.77 -0.77zM207.4 121.7l0.77 -0.77h1.26l0.77 0.77v1.26l-0.77 0.77h-1.26l-0.77 -0.77zM208.8 118.6l0.77 -0.77h1.26l0.77 0.77v1.26l-0.77 0.77h-1.26l-0.77 -0.77zM209.9 122.2l0.77 -0.77h1.26l0.77 0.77v1.26l-0.77 0.77h-1.26l-0.77 -0.77zM211.8 117.7l0.77 -0.77h1.26l0.77 0.77v1.26l-0.77 0.77h-1.26l-0.77 -0.77zM212.9 116.1l0.77 -0.77h1.26l0.77 0.77v1.26l-0.77 0.77h-1.26l-0.77 -0.77zM214.1 109.2l0.77 -0.77h1.26l0.77 0.77v1.26l-0.77 0.77h-1.26l-0.77 -0.77zM215.9 113.4l0.77 -0.77h1.26l0.77 0.77v1.26l-0.77 0.77h-1.26l-0.77 -0.77zM217.7 109.2l0.77 -0.77h1.26l0.77 0.77v1.26l-0.77 0.77h-1.26l-0.77 -0.77zM218.9 113.7l0.77 -0.77h1.26l0.77 0.77v1.26l-0.77 0.77h-1.26l-0.77 -0.77zM220.3 114.6l0.77 -0.77h1.26l0.77 0.77v1.26l-0.77 0.77h-1.26l-0.77 -0.77zM221.9 109.8l0.77 -0.77h1.26l0.77 0.77v1.26l-0.77 0.77h-1.26l-0.77 -0.77zM223.7 111.3l0.77 -0.77h1.26l0.77 0.77v1.26l-0.77 0.77h-1.26l-0.77 -0.77zM225.2 105.1l0.77 -0.77h1.26l0.77 0.77v1.26l-0.77 0.77h-1.26l-0.77 -0.77zM227.0 105.9l0.77 -0.77h1.26l0.77 0.77v1.26l-0.77 0.77h-1.26l-0.77 -0.77zM228.5 104.9l0.77 -0.77h1.26l0.77 0.77v1.26l-0.77 0.77h-1.26l-0.77 -0.77zM229.8 105.3l0.77 -0.77h1.26l0.77 0.77v1.26l-0.77 0.77h-1.26l-0.77 -0.77zM231.1 101.1l0.77 -0.77h1.26l0.77 0.77v1.26l-0.77 0.77h-1.26l-0.77 -0.77zM232.5 101.2l0.77 -0.77h1.26l0.77 0.77v1.26l-0.77 0.77h-1.26l-0.77 -0.77zM233.8 102.5l0.77 -0.77h1.26l0.77 0.77v1.26l-0.77 0.77h-1.26l-0.77 -0.77zM234.9 99.0l0.77 -0.77h1.26l0.77 0.77v1.26l-0.77 0.77h-1.26l-0.77 -0.77zM236.2 90.9l0.77 -0.77h1.26l0.77 0.77v1.26l-0.77 0.77h-1.26l-0.77 -0.77zM237.4 96.6l0.77 -0.77h1.26l0.77 0.77v1.26l-0.77 0.77h-1.26l-0.77 -0.77zM238.9 94.2l0.77 -0.77h1.26l0.77 0.77v1.26l-0.77 0.77h-1.26l-0.77 -0.77zM240.4 88.3l0.77 -0.77h1.26l0.77 0.77v1.26l-0.77 0.77h-1.26l-0.77 -0.77zM241.8 88.6l0.77 -0.77h1.26l0.77 0.77v1.26l-0.77 0.77h-1.26l-0.77 -0.77zM243.4 82.9l0.77 -0.77h1.26l0.77 0.77v1.26l-0.77 0.77h-1.26l-0.77 -0.77zM244.5 86.0l0.77 -0.77h1.26l0.77 0.77v1.26l-0.77 0.77h-1.26l-0.77 -0.77zM246.2 84.9l0.77 -0.77h1.26l0.77 0.77v1.26l-0.77 0.77h-1.26l-0.77 -0.77zM247.4 87.7l0.77 -0.77h1.26l0.77 0.77v1.26l-0.77 0.77h-1.26l-0.77 -0.77zM249.0 81.7l0.77 -0.77h1.26l0.77 0.77v1.26l-0.77 0.77h-1.26l-0.77 -0.77zM250.3 81.1l0.77 -0.77h1.26l0.77 0.77v1.26l-0.77 0.77h-1.26l-0.77 -0.77zM251.8 81.2l0.77 -0.77h1.26l0.77 0.77v1.26l-0.77 0.77h-1.26l-0.77 -0.77zM253.7 81.7l0.77 -0.77h1.26l0.77 0.77v1.26l-0.77 0.77h-1.26l-0.77 -0.77zM255.5 80.3l0.77 -0.77h1.26l0.77 0.77v1.26l-0.77 0.77h-1.26l-0.77 -0.77zM256.6 79.1l0.77 -0.77h1.26l0.77 0.77v1.26l-0.77 0.77h-1.26l-0.77 -0.77zM258.1 81.0l0.77 -0.77h1.26l0.77 0.77v1.26l-0.77 0.77h-1.26l-0.77 -0.77zM259.3 80.0l0.77 -0.77h1.26l0.77 0.77v1.26l-0.77 0.77h-1.26l-0.77 -0.77zM260.7 79.2l0.77 -0.77h1.26l0.77 0.77v1.26l-0.77 0.77h-1.26l-0.77 -0.77zM262.0 77.3l0.77 -0.77h1.26l0.77 0.77v1.26l-0.77 0.77h-1.26l-0.77 -0.77zM263.5 76.8l0.77 -0.77h1.26l0.77 0.77v1.26l-0.77 0.77h-1.26l-0.77 -0.77zM265.2 74.5l0.77 -0.77h1.26l0.77 0.77v1.26l-0.77 0.77h-1.26l-0.77 -0.77zM266.6 72.0l0.77 -0.77h1.26l0.77 0.77v1.26l-0.77 0.77h-1.26l-0.77 -0.77zM268.2 68.8l0.77 -0.77h1.26l0.77 0.77v1.26l-0.77 0.77h-1.26l-0.77 -0.77zM270.0 69.9l0.77 -0.77h1.26l0.77 0.77v1.26l-0.77 0.77h-1.26l-0.77 -0.77zM271.7 65.5l0.77 -0.77h1.26l0.77 0.77v1.26l-0.77 0.77h-1.26l-0.77 -0.77zM273.2 59.0l0.77 -0.77h1.26l0.77 0.77v1.26l-0.77 0.77h-1.26l-0.77 -0.77zM275.0 63.6l0.77 -0.77h1.26l0.77 0.77v1.26l-0.77 0.77h-1.26l-0.77 -0.77zM276.8 58.1l0.77 -0.77h1.26l0.77 0.77v1.26l-0.77 0.77h-1.26l-0.77 -0.77zM278.1 58.5l0.77 -0.77h1.26l0.77 0.77v1.26l-0.77 0.77h-1.26l-0.77 -0.77zM279.5 60.5l0.77 -0.77h1.26l0.77 0.77v1.26l-0.77 0.77h-1.26l-0.77 -0.77zM281.0 55.5l0.77 -0.77h1.26l0.77 0.77v1.26l-0.77 0.77h-1.26l-0.77 -0.77zM282.6 55.1l0.77 -0.77h1.26l0.77 0.77v1.26l-0.77 0.77h-1.26l-0.77 -0.77zM284.4 54.2l0.77 -0.77h1.26l0.77 0.77v1.26l-0.77 0.77h-1.26l-0.77 -0.77zM285.9 51.4l0.77 -0.77h1.26l0.77 0.77v1.26l-0.77 0.77h-1.26l-0.77 -0.77zM287.6 50.6l0.77 -0.77h1.26l0.77 0.77v1.26l-0.77 0.77h-1.26l-0.77 -0.77zM288.9 50.3l0.77 -0.77h1.26l0.77 0.77v1.26l-0.77 0.77h-1.26l-0.77 -0.77zM290.6 51.2l0.77 -0.77h1.26l0.77 0.77v1.26l-0.77 0.77h-1.26l-0.77 -0.77zM292.0 44.2l0.77 -0.77h1.26l0.77 0.77v1.26l-0.77 0.77h-1.26l-0.77 -0.77zM293.7 44.3l0.77 -0.77h1.26l0.77 0.77v1.26l-0.77 0.77h-1.26l-0.77 -0.77zM294.9 46.0l0.77 -0.77h1.26l0.77 0.77v1.26l-0.77 0.77h-1.26l-0.77 -0.77zM296.6 43.7l0.77 -0.77h1.26l0.77 0.77v1.26l-0.77 0.77h-1.26l-0.77 -0.77zM297.7 47.1l0.77 -0.77h1.26l0.77 0.77v1.26l-0.77 0.77h-1.26l-0.77 -0.77zM299.3 43.1l0.77 -0.77h1.26l0.77 0.77v1.26l-0.77 0.77h-1.26l-0.77 -0.77zM300.7 38.8l0.77 -0.77h1.26l0.77 0.77v1.26l-0.77 0.77h-1.26l-0.77 -0.77zM302.1 43.7l0.77 -0.77h1.26l0.77 0.77v1.26l-0.77 0.77h-1.26l-0.77 -0.77zM303.4 46.4l0.77 -0.77h1.26l0.77 0.77v1.26l-0.77 0.77h-1.26l-0.77 -0.77zM304.5 35.4l0.77 -0.77h1.26l0.77 0.77v1.26l-0.77 0.77h-1.26l-0.77 -0.77zM306.4 36.7l0.77 -0.77h1.26l0.77 0.77v1.26l-0.77 0.77h-1.26l-0.77 -0.77zM307.7 39.0l0.77 -0.77h1.26l0.77 0.77v1.26l-0.77 0.77h-1.26l-0.77 -0.77zM309.2 37.5l0.77 -0.77h1.26l0.77 0.77v1.26l-0.77 0.77h-1.26l-0.77 -0.77zM311.1 38.1l0.77 -0.77h1.26l0.77 0.77v1.26l-0.77 0.77h-1.26l-0.77 -0.77zM312.6 38.0l0.77 -0.77h1.26l0.77 0.77v1.26l-0.77 0.77h-1.26l-0.77 -0.77zM313.9 34.6l0.77 -0.77h1.26l0.77 0.77v1.26l-0.77 0.77h-1.26l-0.77 -0.77zM315.0 33.1l0.77 -0.77h1.26l0.77 0.77v1.26l-0.77 0.77h-1.26l-0.77 -0.77zM316.5 28.9l0.77 -0.77h1.26l0.77 0.77v1.26l-0.77 0.77h-1.26l-0.77 -0.77zM317.8 27.0l0.77 -0.77h1.26l0.77 0.77v1.26l-0.77 0.77h-1.26l-0.77 -0.77zM318.9 29.8l0.77 -0.77h1.26l0.77 0.77v1.26l-0.77 0.77h-1.26l-0.77 -0.77zM320.1 29.2l0.77 -0.77h1.26l0.77 0.77v1.26l-0.77 0.77h-1.26l-0.77 -0.77zM321.9 23.1l0.77 -0.77h1.26l0.77 0.77v1.26l-0.77 0.77h-1.26l-0.77 -0.77zM323.4 26.9l0.77 -0.77h1.26l0.77 0.77v1.26l-0.77 0.77h-1.26l-0.77 -0.77zM324.7 20.9l0.77 -0.77h1.26l0.77 0.77v1.26l-0.77 0.77h-1.26l-0.77 -0.77zM325.9 25.5l0.77 -0.77h1.26l0.77 0.77v1.26l-0.77 0.77h-1.26l-0.77 -0.77zM327.2 23.8l0.77 -0.77h1.26l0.77 0.77v1.26l-0.77 0.77h-1.26l-0.77 -0.77zM328.5 18.8l0.77 -0.77h1.26l0.77 0.77v1.26l-0.77 0.77h-1.26l-0.77 -0.77zM329.9 23.5l0.77 -0.77h1.26l0.77 0.77v1.26l-0.77 0.77h-1.26l-0.77 -0.77zM331.7 13.1l0.77 -0.77h1.26l0.77 0.77v1.26l-0.77 0.77h-1.26l-0.77 -0.77zM333.5 9.6l0.77 -0.77h1.26l0.77 0.77v1.26l-0.77 0.77h-1.26l-0.77 -0.77zM334.7 11.7l0.77 -0.77h1.26l0.77 0.77v1.26l-0.77 0.77h-1.26l-0.77 -0.77zM336.4 8.5l0.77 -0.77h1.26l0.77 0.77v1.26l-0.77 0.77h-1.26l-0.77 -0.77zM337.5 9.7l0.77 -0.77h1.26l0.77 0.77v1.26l-0.77 0.77h-1.26l-0.77 -0.77zM339.0 6.6l0.77 -0.77h1.26l0.77 0.77v1.26l-0.77 0.77h-1.26l-0.77 -0.77zM340.7 9.5l0.77 -0.77h1.26l0.77 0.77v1.26l-0.77 0.77h-1.26l-0.77 -0.77zM342.3 5.6l0.77 -0.77h1.26l0.77 0.77v1.26l-0.77 0.77h-1.26l-0.77 -0.77zM343.7 7.7l0.77 -0.77h1.26l0.77 0.77v1.26l-0.77 0.77h-1.26l-0.77 -0.77zM345.0 8.8l0.77 -0.77h1.26l0.77 0.77v1.26l-0.77 0.77h-1.26l-0.77 -0.77zM346.3 10.9l0.77 -0.77h1.26l0.77 0.77v1.26l-0.77 0.77h-1.26l-0.77 -0.77zM347.7 2.0l0.77 -0.77h1.26l0.77 0.77v1.26l-0.77 0.77h-1.26l-0.77 -0.77zM348.9 0.6l0.77 -0.77h1.26l0.77 0.77v1.26l-0.77 0.77h-1.26l-0.77 -0.77zM350.2 0.6l0.77 -0.77h1.26l0.77 0.77v1.26l-0.77 0.77h-1.26l-0.77 -0.77zM352.0 0.9l0.77 -0.77h1.26l0.77 0.77v1.26l-0.77 0.77h-1.26l-0.77 -0.77z" fill="#DD8452"/><path d="M0.0 266.0 L5.9 273.2 L15.2 195.4 L21.2 233.5 L25.0 244.0 L28.9 252.5 L32.0 255.0 L35.4 256.2 L40.3 256.2 L45.0 254.0 L51.6 249.7 L57.0 245.5 L63.0 240.6 L72.7 232.7 L203.0 124.9 L354.5 -0.5" fill="none" stroke="#55A868" stroke-width="1.3" stroke-linejoin="round"/><path d="M0.5 0V275.5H354" fill="none" stroke="rgb(90,91,92)" stroke-width="1"/><path d="M25.5 275v-5 M63.5 275v-5 M101.5 275v-5 M139.5 275v-5 M177.5 275v-5 M215.5 275v-5 M253.5 275v-5 M291.5 275v-5 M329.5 275v-5 M0 267.5h5 M0 236.5h5 M0 205.5h5 M0 174.5h5 M0 143.5h5 M0 112.5h5 M0 81.5h5 M0 50.5h5 M0 19.5h5" stroke="rgb(90,91,92)" stroke-width="1"/></svg>
<div class="t" style="left:752.3346228239845px;width:600px;text-align:center;top:429px;">15</div>
<div class="t" style="left:790.3745970341715px;width:600px;text-align:center;top:429px;">15.5</div>
<div class="t" style="left:828.4145712443585px;width:600px;text-align:center;top:429px;">16</div>
<div class="t" style="left:866.4545454545455px;width:600px;text-align:center;top:429px;">16.5</div>
<div class="t" style="left:904.4945196647325px;width:600px;text-align:center;top:429px;">17</div>
<div class="t" style="left:942.5344938749195px;width:600px;text-align:center;top:429px;">17.5</div>
<div class="t" style="left:980.5744680851064px;width:600px;text-align:center;top:429px;">18</div>
<div class="t" style="left:1018.6144422952934px;width:600px;text-align:center;top:429px;">18.5</div>
<div class="t" style="left:1056.6544165054802px;width:600px;text-align:center;top:429px;">19</div>
<div class="t" style="left:720px;width:300px;text-align:right;top:408px;">0</div>
<div class="t" style="left:720px;width:300px;text-align:right;top:377px;">1</div>
<div class="t" style="left:720px;width:300px;text-align:right;top:346px;">2</div>
<div class="t" style="left:720px;width:300px;text-align:right;top:315px;">3</div>
<div class="t" style="left:720px;width:300px;text-align:right;top:284px;">4</div>
<div class="t" style="left:720px;width:300px;text-align:right;top:253px;">5</div>
<div class="t" style="left:720px;width:300px;text-align:right;top:222px;">6</div>
<div class="t" style="left:720px;width:300px;text-align:right;top:191px;">7</div>
<div class="t" style="left:720px;width:300px;text-align:right;top:160px;">8</div>
<div class="t" style="left:699px;top:276.5px;width:600px;text-align:center;transform:rotate(-90deg);">Velocity (m/s)</div>
<div class="r" style="left:1223px;top:157px;width:147px;height:65px;background:rgba(28,28,36,0.92);border:1px solid rgb(77,77,81);"></div>
<div class="r" style="left:1230px;top:164px;width:15px;height:15px;background:#4C72B0;"></div>
<div class="t" style="left:1247px;top:165px;">Raw Data</div>
<div class="r" style="left:1230px;top:183px;width:15px;height:15px;background:#DD8452;"></div>
<div class="t" style="left:1247px;top:184px;">Filtered Data</div>
<div class="r" style="left:1230px;top:202px;width:15px;height:15px;background:#55A868;"></div>
<div class="t" style="left:1247px;top:203px;">Simulation</div>
<div class="r" style="left:1399px;top:113px;width:413px;height:366px;background:rgb(53,56,57);"></div>
<div class="r" style="left:1457px;top:147px;width:345px;height:275px;background:rgb(8,8,9);"></div>
<div class="t" style="left:1329.5px;width:600px;text-align:center;top:126px;">Dynamic Velocity vs. Time</div>
<div class="t" style="left:1329.5px;width:600px;text-align:center;top:453px;">Time (s)</div>
<svg class="r" style="left:1457px;top:147px;overflow:hidden" width="345" height="276"><path d="M1.7 245.4l0.77 -0.77h1.26l0.77 0.77v1.26l-0.77 0.77h-1.26l-0.77 -0.77zM48.0 27.5l0.77 -0.77h1.26l0.77 0.77v1.26l-0.77 0.77h-1.26l-0.77 -0.77zM51.1 22.3l0.77 -0.77h1.26l0.77 0.77v1.26l-0.77 0.77h-1.26l-0.77 -0.77zM54.6 18.2l0.77 -0.77h1.26l0.77 0.77v1.26l-0.77 0.77h-1.26l-0.77 -0.77zM57.8 20.5l0.77 -0.77h1.26l0.77 0.77v1.26l-0.77 0.77h-1.26l-0.77 -0.77zM60.9 19.0l0.77 -0.77h1.26l0.77 0.77v1.26l-0.77 0.77h-1.26l-0.77 -0.77zM64.0 19.8l0.77 -0.77h1.26l0.77 0.77v1.26l-0.77 0.77h-1.26l-0.77 -0.77zM67.5 18.0l0.77 -0.77h1.26l0.77 0.77v1.26l-0.77 0.77h-1.26l-0.77 -0.77zM70.4 12.7l0.77 -0.77h1.26l0.77 0.77v1.26l-0.77 0.77h-1.26l-0.77 -0.77zM73.6 23.7l0.77 -0.77h1.26l0.77 0.77v1.26l-0.77 0.77h-1.26l-0.77 -0.77zM76.7 5.1l0.77 -0.77h1.26l0.77 0.77v1.26l-0.77 0.77h-1.26l-0.77 -0.77zM80.3 11.0l0.77 -0.77h1.26l0.77 0.77v1.26l-0.77 0.77h-1.26l-0.77 -0.77zM83.2 6.4l0.77 -0.77h1.26l0.77 0.77v1.26l-0.77 0.77h-1.26l-0.77 -0.77zM86.7 5.1l0.77 -0.77h1.26l0.77 0.77v1.26l-0.77 0.77h-1.26l-0.77 -0.77zM90.0 7.1l0.77 -0.77h1.26l0.77 0.77v1.26l-0.77 0.77h-1.26l-0.77 -0.77zM92.9 10.0l0.77 -0.77h1.26l0.77 0.77v1.26l-0.77 0.77h-1.26l-0.77 -0.77zM95.9 3.4l0.77 -0.77h1.26l0.77 0.77v1.26l-0.77 0.77h-1.26l-0.77 -0.77zM98.9 8.4l0.77 -0.77h1.26l0.77 0.77v1.26l-0.77 0.77h-1.26l-0.77 -0.77zM102.2 6.7l0.77 -0.77h1.26l0.77 0.77v1.26l-0.77 0.77h-1.26l-0.77 -0.77zM105.4 7.4l0.77 -0.77h1.26l0.77 0.77v1.26l-0.77 0.77h-1.26l-0.77 -0.77zM108.5 13.4l0.77 -0.77h1.26l0.77 0.77v1.26l-0.77 0.77h-1.26l-0.77 -0.77zM111.6 2.3l0.77 -0.77h1.26l0.77 0.77v1.26l-0.77 0.77h-1.26l-0.77 -0.77zM115.1 9.2l0.77 -0.77h1.26l0.77 0.77v1.26l-0.77 0.77h-1.26l-0.77 -0.77zM118.1 10.0l0.77 -0.77h1.26l0.77 0.77v1.26l-0.77 0.77h-1.26l-0.77 -0.77zM121.6 14.2l0.77 -0.77h1.26l0.77 0.77v1.26l-0.77 0.77h-1.26l-0.77 -0.77zM124.8 7.7l0.77 -0.77h1.26l0.77 0.77v1.26l-0.77 0.77h-1.26l-0.77 -0.77zM127.9 5.7l0.77 -0.77h1.26l0.77 0.77v1.26l-0.77 0.77h-1.26l-0.77 -0.77zM131.0 9.5l0.77 -0.77h1.26l0.77 0.77v1.26l-0.77 0.77h-1.26l-0.77 -0.77zM134.1 8.9l0.77 -0.77h1.26l0.77 0.77v1.26l-0.77 0.77h-1.26l-0.77 -0.77zM137.5 3.5l0.77 -0.77h1.26l0.77 0.77v1.26l-0.77 0.77h-1.26l-0.77 -0.77zM140.7 3.4l0.77 -0.77h1.26l0.77 0.77v1.26l-0.77 0.77h-1.26l-0.77 -0.77zM144.1 -1.4l0.77 -0.77h1.26l0.77 0.77v1.26l-0.77 0.77h-1.26l-0.77 -0.77zM147.1 5.2l0.77 -0.77h1.26l0.77 0.77v1.26l-0.77 0.77h-1.26l-0.77 -0.77zM150.3 7.5l0.77 -0.77h1.26l0.77 0.77v1.26l-0.77 0.77h-1.26l-0.77 -0.77zM153.3 8.7l0.77 -0.77h1.26l0.77 0.77v1.26l-0.77 0.77h-1.26l-0.77 -0.77zM156.3 3.3l0.77 -0.77h1.26l0.77 0.77v1.26l-0.77 0.77h-1.26l-0.77 -0.77zM159.3 11.8l0.77 -0.77h1.26l0.77 0.77v1.26l-0.77 0.77h-1.26l-0.77 -0.77zM162.2 5.5l0.77 -0.77h1.26l0.77 0.77v1.26l-0.77 0.77h-1.26l-0.77 -0.77zM165.7 2.0l0.77 -0.77h1.26l0.77 0.77v1.26l-0.77 0.77h-1.26l-0.77 -0.77zM169.1 8.1l0.77 -0.77h1.26l0.77 0.77v1.26l-0.77 0.77h-1.26l-0.77 -0.77zM172.1 9.2l0.77 -0.77h1.26l0.77 0.77v1.26l-0.77 0.77h-1.26l-0.77 -0.77zM175.4 7.0l0.77 -0.77h1.26l0.77 0.77v1.26l-0.77 0.77h-1.26l-0.77 -0.77zM178.6 14.0l0.77 -0.77h1.26l0.77 0.77v1.26l-0.77 0.77h-1.26l-0.77 -0.77zM181.6 3.8l0.77 -0.77h1.26l0.77 0.77v1.26l-0.77 0.77h-1.26l-0.77 -0.77zM185.1 0.3l0.77 -0.77h1.26l0.77 0.77v1.26l-0.77 0.77h-1.26l-0.77 -0.77zM188.2 0.4l0.77 -0.77h1.26l0.77 0.77v1.26l-0.77 0.77h-1.26l-0.77 -0.77zM191.6 6.0l0.77 -0.77h1.26l0.77 0.77v1.26l-0.77 0.77h-1.26l-0.77 -0.77zM194.8 4.9l0.77 -0.77h1.26l0.77 0.77v1.26l-0.77 0.77h-1.26l-0.77 -0.77zM197.8 16.9l0.77 -0.77h1.26l0.77 0.77v1.26l-0.77 0.77h-1.26l-0.77 -0.77zM200.9 1.0l0.77 -0.77h1.26l0.77 0.77v1.26l-0.77 0.77h-1.26l-0.77 -0.77zM204.3 4.5l0.77 -0.77h1.26l0.77 0.77v1.26l-0.77 0.77h-1.26l-0.77 -0.77zM207.7 5.0l0.77 -0.77h1.26l0.77 0.77v1.26l-0.77 0.77h-1.26l-0.77 -0.77zM211.1 3.3l0.77 -0.77h1.26l0.77 0.77v1.26l-0.77 0.77h-1.26l-0.77 -0.77zM214.6 6.6l0.77 -0.77h1.26l0.77 0.77v1.26l-0.77 0.77h-1.26l-0.77 -0.77zM217.7 5.7l0.77 -0.77h1.26l0.77 0.77v1.26l-0.77 0.77h-1.26l-0.77 -0.77zM220.5 7.5l0.77 -0.77h1.26l0.77 0.77v1.26l-0.77 0.77h-1.26l-0.77 -0.77zM224.0 17.4l0.77 -0.77h1.26l0.77 0.77v1.26l-0.77 0.77h-1.26l-0.77 -0.77zM227.0 10.0l0.77 -0.77h1.26l0.77 0.77v1.26l-0.77 0.77h-1.26l-0.77 -0.77zM230.5 2.7l0.77 -0.77h1.26l0.77 0.77v1.26l-0.77 0.77h-1.26l-0.77 -0.77zM233.7 6.0l0.77 -0.77h1.26l0.77 0.77v1.26l-0.77 0.77h-1.26l-0.77 -0.77zM237.2 3.3l0.77 -0.77h1.26l0.77 0.77v1.26l-0.77 0.77h-1.26l-0.77 -0.77zM240.6 0.8l0.77 -0.77h1.26l0.77 0.77v1.26l-0.77 0.77h-1.26l-0.77 -0.77zM243.9 6.3l0.77 -0.77h1.26l0.77 0.77v1.26l-0.77 0.77h-1.26l-0.77 -0.77zM247.2 3.2l0.77 -0.77h1.26l0.77 0.77v1.26l-0.77 0.77h-1.26l-0.77 -0.77zM250.2 5.2l0.77 -0.77h1.26l0.77 0.77v1.26l-0.77 0.77h-1.26l-0.77 -0.77zM253.1 7.2l0.77 -0.77h1.26l0.77 0.77v1.26l-0.77 0.77h-1.26l-0.77 -0.77zM256.2 -0.3l0.77 -0.77h1.26l0.77 0.77v1.26l-0.77 0.77h-1.26l-0.77 -0.77zM259.3 5.9l0.77 -0.77h1.26l0.77 0.77v1.26l-0.77 0.77h-1.26l-0.77 -0.77zM262.2 9.4l0.77 -0.77h1.26l0.77 0.77v1.26l-0.77 0.77h-1.26l-0.77 -0.77zM265.2 5.2l0.77 -0.77h1.26l0.77 0.77v1.26l-0.77 0.77h-1.26l-0.77 -0.77zM268.5 7.2l0.77 -0.77h1.26l0.77 0.77v1.26l-0.77 0.77h-1.26l-0.77 -0.77zM271.8 9.1l0.77 -0.77h1.26l0.77 0.77v1.26l-0.77 0.77h-1.26l-0.77 -0.77zM275.2 6.1l0.77 -0.77h1.26l0.77 0.77v1.26l-0.77 0.77h-1.26l-0.77 -0.77zM278.6 1.9l0.77 -0.77h1.26l0.77 0.77v1.26l-0.77 0.77h-1.26l-0.77 -0.77zM281.6 5.2l0.77 -0.77h1.26l0.77 0.77v1.26l-0.77 0.77h-1.26l-0.77 -0.77zM284.9 3.7l0.77 -0.77h1.26l0.77 0.77v1.26l-0.77 0.77h-1.26l-0.77 -0.77zM288.0 2.1l0.77 -0.77h1.26l0.77 0.77v1.26l-0.77 0.77h-1.26l-0.77 -0.77zM291.4 5.4l0.77 -0.77h1.26l0.77 0.77v1.26l-0.77 0.77h-1.26l-0.77 -0.77zM294.9 2.8l0.77 -0.77h1.26l0.77 0.77v1.26l-0.77 0.77h-1.26l-0.77 -0.77zM298.4 3.4l0.77 -0.77h1.26l0.77 0.77v1.26l-0.77 0.77h-1.26l-0.77 -0.77zM301.3 5.6l0.77 -0.77h1.26l0.77 0.77v1.26l-0.77 0.77h-1.26l-0.77 -0.77zM304.8 3.9l0.77 -0.77h1.26l0.77 0.77v1.26l-0.77 0.77h-1.26l-0.77 -0.77zM308.3 8.9l0.77 -0.77h1.26l0.77 0.77v1.26l-0.77 0.77h-1.26l-0.77 -0.77zM311.3 1.4l0.77 -0.77h1.26l0.77 0.77v1.26l-0.77 0.77h-1.26l-0.77 -0.77zM314.8 2.4l0.77 -0.77h1.26l0.77 0.77v1.26l-0.77 0.77h-1.26l-0.77 -0.77zM317.8 3.0l0.77 -0.77h1.26l0.77 0.77v1.26l-0.77 0.77h-1.26l-0.77 -0.77zM320.8 4.6l0.77 -0.77h1.26l0.77 0.77v1.26l-0.77 0.77h-1.26l-0.77 -0.77zM324.1 3.3l0.77 -0.77h1.26l0.77 0.77v1.26l-0.77 0.77h-1.26l-0.77 -0.77zM327.0 7.1l0.77 -0.77h1.26l0.77 0.77v1.26l-0.77 0.77h-1.26l-0.77 -0.77zM330.0 1.7l0.77 -0.77h1.26l0.77 0.77v1.26l-0.77 0.77h-1.26l-0.77 -0.77zM333.4 6.1l0.77 -0.77h1.26l0.77 0.77v1.26l-0.77 0.77h-1.26l-0.77 -0.77zM336.6 5.5l0.77 -0.77h1.26l0.77 0.77v1.26l-0.77 0.77h-1.26l-0.77 -0.77zM339.8 3.9l0.77 -0.77h1.26l0.77 0.77v1.26l-0.77 0.77h-1.26l-0.77 -0.77zM343.0 4.3l0.77 -0.77h1.26l0.77 0.77v1.26l-0.77 0.77h-1.26l-0.77 -0.77z" fill="#4C72B0"/><path d="M5.1 206.3l0.77 -0.77h1.26l0.77 0.77v1.26l-0.77 0.77h-1.26l-0.77 -0.77zM8.5 176.5l0.77 -0.77h1.26l0.77 0.77v1.26l-0.77 0.77h-1.26l-0.77 -0.77zM12.0 152.5l0.77 -0.77h1.26l0.77 0.77v1.26l-0.77 0.77h-1.26l-0.77 -0.77zM14.7 126.2l0.77 -0.77h1.26l0.77 0.77v1.26l-0.77 0.77h-1.26l-0.77 -0.77zM18.1 111.4l0.77 -0.77h1.26l0.77 0.77v1.26l-0.77 0.77h-1.26l-0.77 -0.77zM21.6 93.6l0.77 -0.77h1.26l0.77 0.77v1.26l-0.77 0.77h-1.26l-0.77 -0.77zM25.0 81.6l0.77 -0.77h1.26l0.77 0.77v1.26l-0.77 0.77h-1.26l-0.77 -0.77zM28.4 66.9l0.77 -0.77h1.26l0.77 0.77v1.26l-0.77 0.77h-1.26l-0.77 -0.77zM31.8 56.6l0.77 -0.77h1.26l0.77 0.77v1.26l-0.77 0.77h-1.26l-0.77 -0.77zM35.3 53.2l0.77 -0.77h1.26l0.77 0.77v1.26l-0.77 0.77h-1.26l-0.77 -0.77zM38.3 44.6l0.77 -0.77h1.26l0.77 0.77v1.26l-0.77 0.77h-1.26l-0.77 -0.77zM41.1 31.6l0.77 -0.77h1.26l0.77 0.77v1.26l-0.77 0.77h-1.26l-0.77 -0.77zM45.5 37.8l0.77 -0.77h1.26l0.77 0.77v1.26l-0.77 0.77h-1.26l-0.77 -0.77zM47.6 26.1l0.77 -0.77h1.26l0.77 0.77v1.26l-0.77 0.77h-1.26l-0.77 -0.77z" fill="#DD8452"/><path d="M0.0 273.6 L1.0 260.2 L2.0 247.4 L3.0 235.3 L3.9 223.8 L4.9 212.9 L5.9 202.5 L6.9 192.7 L7.9 183.4 L8.9 174.5 L9.8 166.1 L10.8 158.1 L11.8 150.5 L12.8 143.3 L13.8 136.5 L14.8 130.0 L15.8 123.8 L16.7 118.0 L17.7 112.4 L18.7 107.1 L19.7 102.1 L20.7 97.4 L21.7 92.9 L22.6 88.6 L23.6 84.5 L24.6 80.6 L25.6 77.0 L26.6 73.5 L27.6 70.2 L28.6 67.1 L29.5 64.1 L30.5 61.2 L31.5 58.6 L32.5 56.0 L33.5 53.6 L34.5 51.3 L35.5 49.1 L36.4 47.1 L37.4 45.1 L38.4 43.2 L39.4 41.4 L40.4 39.8 L41.4 38.2 L42.3 36.7 L43.3 35.2 L44.3 33.8 L45.3 32.6 L46.3 31.3 L47.3 30.2 L48.3 29.0 L49.2 28.0 L50.2 27.0 L51.2 26.0 L52.2 25.1 L53.2 24.3 L54.2 23.5 L55.1 22.7 L56.1 22.0 L57.1 21.3 L58.1 20.6 L59.1 20.0 L60.1 19.4 L61.1 18.8 L62.0 18.3 L63.0 17.8 L64.0 17.3 L65.0 16.8 L66.0 16.4 L67.0 16.0 L67.9 15.6 L68.9 15.2 L69.9 14.9 L70.9 14.5 L71.9 14.2 L72.9 13.9 L73.9 13.6 L74.8 13.3 L75.8 13.1 L76.8 12.8 L77.8 12.6 L78.8 12.4 L79.8 12.2 L80.8 12.0 L81.7 11.8 L82.7 11.6 L83.7 11.4 L84.7 11.3 L85.7 11.1 L86.7 11.0 L87.6 10.8 L88.6 10.7 L89.6 10.6 L90.6 10.5 L91.6 10.3 L92.6 10.2 L93.6 10.1 L94.5 10.0 L95.5 9.9 L96.5 9.9 L97.5 9.8 L98.5 9.7 L99.5 9.6 L100.4 9.6 L108.7 9.1 L116.9 8.8 L125.1 8.6 L133.3 8.5 L141.5 8.4 L149.7 8.3 L157.9 8.3 L166.1 8.3 L174.3 8.3 L182.5 8.2 L190.7 8.2 L198.9 8.2 L207.1 8.2 L215.3 8.2 L223.5 8.2 L231.8 8.2 L240.0 8.2 L248.2 8.2 L256.4 8.2 L264.6 8.2 L272.8 8.2 L281.0 8.2 L289.2 8.2 L297.4 8.2 L305.6 8.2 L313.8 8.2 L322.0 8.2 L330.2 8.2 L338.4 8.2 L346.6 8.2" fill="none" stroke="#55A868" stroke-width="1.3"/><path d="M0.5 0V275.5H345" fill="none" stroke="rgb(90,91,92)" stroke-width="1"/><path d="M51.5 275v-5 M133.5 275v-5 M215.5 275v-10 M297.5 275v-5 M0 273.5h5 M0 220.5h5 M0 167.5h5 M0 114.5h5 M0 61.5h5 M0 8.5h5" stroke="rgb(90,91,92)" stroke-width="1"/></svg>
<div class="t" style="left:1208.0442435775453px;width:600px;text-align:center;top:429px;">34</div>
<div class="t" style="left:1290.1089438629879px;width:600px;text-align:center;top:429px;">34.5</div>
<div class="t" style="left:1372.1736441484304px;width:600px;text-align:center;top:429px;">35</div>
<div class="t" style="left:1454.238344433873px;width:600px;text-align:center;top:429px;">35.5</div>
<div class="t" style="left:1150px;width:300px;text-align:right;top:415px;">0</div>
<div class="t" style="left:1150px;width:300px;text-align:right;top:362px;">2</div>
<div class="t" style="left:1150px;width:300px;text-align:right;top:308px;">4</div>
<div class="t" style="left:1150px;width:300px;text-align:right;top:255px;">6</div>
<div class="t" style="left:1150px;width:300px;text-align:right;top:202px;">8</div>
<div class="t" style="left:1150px;width:300px;text-align:right;top:149px;">10</div>
<div class="t" style="left:1120px;top:276.5px;width:600px;text-align:center;transform:rotate(-90deg);">Velocity (m/s)</div>
<div class="r" style="left:1644px;top:157px;width:147px;height:65px;background:rgba(28,28,36,0.92);border:1px solid rgb(77,77,81);"></div>
<div class="r" style="left:1651px;top:164px;width:15px;height:15px;background:#4C72B0;"></div>
<div class="t" style="left:1668px;top:165px;">Raw Data</div>
<div class="r" style="left:1651px;top:183px;width:15px;height:15px;background:#DD8452;"></div>
<div class="t" style="left:1668px;top:184px;">Filtered Data</div>
<div class="r" style="left:1651px;top:202px;width:15px;height:15px;background:#55A868;"></div>
<div class="t" style="left:1668px;top:203px;">Simulation</div>
<div class="r" style="left:978px;top:483px;width:413px;height:366px;background:rgb(53,56,57);"></div>
<div class="r" style="left:1045px;top:517px;width:336px;height:275px;background:rgb(8,8,9);"></div>
<div class="t" style="left:913.0px;width:600px;text-align:center;top:496px;">Acceleration vs. Velocity</div>
<div class="t" style="left:913.0px;width:600px;text-align:center;top:823px;">Velocity (m/s)</div>
<svg class="r" style="left:1045px;top:517px;overflow:hidden" width="336" height="276"><path d="M-2.0 5.1l0.77 -0.77h1.26l0.77 0.77v1.26l-0.77 0.77h-1.26l-0.77 -0.77zM-1.3 0.9l0.77 -0.77h1.26l0.77 0.77v1.26l-0.77 0.77h-1.26l-0.77 -0.77zM-0.6 4.2l0.77 -0.77h1.26l0.77 0.77v1.26l-0.77 0.77h-1.26l-0.77 -0.77zM0.0 9.7l0.77 -0.77h1.26l0.77 0.77v1.26l-0.77 0.77h-1.26l-0.77 -0.77zM0.6 7.6l0.77 -0.77h1.26l0.77 0.77v1.26l-0.77 0.77h-1.26l-0.77 -0.77zM1.3 2.2l0.77 -0.77h1.26l0.77 0.77v1.26l-0.77 0.77h-1.26l-0.77 -0.77zM2.0 8.8l0.77 -0.77h1.26l0.77 0.77v1.26l-0.77 0.77h-1.26l-0.77 -0.77zM2.7 25.4l0.77 -0.77h1.26l0.77 0.77v1.26l-0.77 0.77h-1.26l-0.77 -0.77zM3.3 20.4l0.77 -0.77h1.26l0.77 0.77v1.26l-0.77 0.77h-1.26l-0.77 -0.77zM3.9 9.9l0.77 -0.77h1.26l0.77 0.77v1.26l-0.77 0.77h-1.26l-0.77 -0.77zM4.6 14.4l0.77 -0.77h1.26l0.77 0.77v1.26l-0.77 0.77h-1.26l-0.77 -0.77zM5.3 26.8l0.77 -0.77h1.26l0.77 0.77v1.26l-0.77 0.77h-1.26l-0.77 -0.77zM5.9 -4.8l0.77 -0.77h1.26l0.77 0.77v1.26l-0.77 0.77h-1.26l-0.77 -0.77zM6.6 8.6l0.77 -0.77h1.26l0.77 0.77v1.26l-0.77 0.77h-1.26l-0.77 -0.77zM7.4 5.5l0.77 -0.77h1.26l0.77 0.77v1.26l-0.77 0.77h-1.26l-0.77 -0.77zM8.1 17.8l0.77 -0.77h1.26l0.77 0.77v1.26l-0.77 0.77h-1.26l-0.77 -0.77zM8.8 7.7l0.77 -0.77h1.26l0.77 0.77v1.26l-0.77 0.77h-1.26l-0.77 -0.77zM9.5 17.7l0.77 -0.77h1.26l0.77 0.77v1.26l-0.77 0.77h-1.26l-0.77 -0.77zM10.1 12.7l0.77 -0.77h1.26l0.77 0.77v1.26l-0.77 0.77h-1.26l-0.77 -0.77zM10.8 12.6l0.77 -0.77h1.26l0.77 0.77v1.26l-0.77 0.77h-1.26l-0.77 -0.77zM11.5 17.1l0.77 -0.77h1.26l0.77 0.77v1.26l-0.77 0.77h-1.26l-0.77 -0.77zM12.1 18.4l0.77 -0.77h1.26l0.77 0.77v1.26l-0.77 0.77h-1.26l-0.77 -0.77zM12.9 8.3l0.77 -0.77h1.26l0.77 0.77v1.26l-0.77 0.77h-1.26l-0.77 -0.77zM13.5 21.1l0.77 -0.77h1.26l0.77 0.77v1.26l-0.77 0.77h-1.26l-0.77 -0.77zM14.2 23.8l0.77 -0.77h1.26l0.77 0.77v1.26l-0.77 0.77h-1.26l-0.77 -0.77zM14.9 21.2l0.77 -0.77h1.26l0.77 0.77v1.26l-0.77 0.77h-1.26l-0.77 -0.77zM15.5 31.0l0.77 -0.77h1.26l0.77 0.77v1.26l-0.77 0.77h-1.26l-0.77 -0.77zM16.1 36.4l0.77 -0.77h1.26l0.77 0.77v1.26l-0.77 0.77h-1.26l-0.77 -0.77zM16.7 16.6l0.77 -0.77h1.26l0.77 0.77v1.26l-0.77 0.77h-1.26l-0.77 -0.77zM17.3 16.3l0.77 -0.77h1.26l0.77 0.77v1.26l-0.77 0.77h-1.26l-0.77 -0.77zM17.9 22.2l0.77 -0.77h1.26l0.77 0.77v1.26l-0.77 0.77h-1.26l-0.77 -0.77zM18.5 27.8l0.77 -0.77h1.26l0.77 0.77v1.26l-0.77 0.77h-1.26l-0.77 -0.77zM19.2 32.9l0.77 -0.77h1.26l0.77 0.77v1.26l-0.77 0.77h-1.26l-0.77 -0.77zM19.8 28.2l0.77 -0.77h1.26l0.77 0.77v1.26l-0.77 0.77h-1.26l-0.77 -0.77zM20.6 14.3l0.77 -0.77h1.26l0.77 0.77v1.26l-0.77 0.77h-1.26l-0.77 -0.77zM21.3 37.3l0.77 -0.77h1.26l0.77 0.77v1.26l-0.77 0.77h-1.26l-0.77 -0.77zM21.9 23.2l0.77 -0.77h1.26l0.77 0.77v1.26l-0.77 0.77h-1.26l-0.77 -0.77zM22.7 23.8l0.77 -0.77h1.26l0.77 0.77v1.26l-0.77 0.77h-1.26l-0.77 -0.77zM23.4 22.9l0.77 -0.77h1.26l0.77 0.77v1.26l-0.77 0.77h-1.26l-0.77 -0.77zM24.0 26.8l0.77 -0.77h1.26l0.77 0.77v1.26l-0.77 0.77h-1.26l-0.77 -0.77zM24.8 12.9l0.77 -0.77h1.26l0.77 0.77v1.26l-0.77 0.77h-1.26l-0.77 -0.77zM25.4 32.3l0.77 -0.77h1.26l0.77 0.77v1.26l-0.77 0.77h-1.26l-0.77 -0.77zM26.0 24.4l0.77 -0.77h1.26l0.77 0.77v1.26l-0.77 0.77h-1.26l-0.77 -0.77zM26.6 29.3l0.77 -0.77h1.26l0.77 0.77v1.26l-0.77 0.77h-1.26l-0.77 -0.77zM27.2 30.4l0.77 -0.77h1.26l0.77 0.77v1.26l-0.77 0.77h-1.26l-0.77 -0.77zM28.0 14.9l0.77 -0.77h1.26l0.77 0.77v1.26l-0.77 0.77h-1.26l-0.77 -0.77zM28.6 32.0l0.77 -0.77h1.26l0.77 0.77v1.26l-0.77 0.77h-1.26l-0.77 -0.77zM29.2 34.1l0.77 -0.77h1.26l0.77 0.77v1.26l-0.77 0.77h-1.26l-0.77 -0.77zM29.9 30.1l0.77 -0.77h1.26l0.77 0.77v1.26l-0.77 0.77h-1.26l-0.77 -0.77zM30.6 35.8l0.77 -0.77h1.26l0.77 0.77v1.26l-0.77 0.77h-1.26l-0.77 -0.77zM31.4 12.5l0.77 -0.77h1.26l0.77 0.77v1.26l-0.77 0.77h-1.26l-0.77 -0.77zM32.0 27.5l0.77 -0.77h1.26l0.77 0.77v1.26l-0.77 0.77h-1.26l-0.77 -0.77zM32.7 24.3l0.77 -0.77h1.26l0.77 0.77v1.26l-0.77 0.77h-1.26l-0.77 -0.77zM33.3 38.0l0.77 -0.77h1.26l0.77 0.77v1.26l-0.77 0.77h-1.26l-0.77 -0.77zM34.0 31.1l0.77 -0.77h1.26l0.77 0.77v1.26l-0.77 0.77h-1.26l-0.77 -0.77zM34.7 31.1l0.77 -0.77h1.26l0.77 0.77v1.26l-0.77 0.77h-1.26l-0.77 -0.77zM35.2 22.7l0.77 -0.77h1.26l0.77 0.77v1.26l-0.77 0.77h-1.26l-0.77 -0.77zM35.9 38.6l0.77 -0.77h1.26l0.77 0.77v1.26l-0.77 0.77h-1.26l-0.77 -0.77zM36.5 27.6l0.77 -0.77h1.26l0.77 0.77v1.26l-0.77 0.77h-1.26l-0.77 -0.77zM37.1 34.7l0.77 -0.77h1.26l0.77 0.77v1.26l-0.77 0.77h-1.26l-0.77 -0.77zM37.7 33.1l0.77 -0.77h1.26l0.77 0.77v1.26l-0.77 0.77h-1.26l-0.77 -0.77zM38.4 41.4l0.77 -0.77h1.26l0.77 0.77v1.26l-0.77 0.77h-1.26l-0.77 -0.77zM39.0 40.4l0.77 -0.77h1.26l0.77 0.77v1.26l-0.77 0.77h-1.26l-0.77 -0.77zM39.8 37.3l0.77 -0.77h1.26l0.77 0.77v1.26l-0.77 0.77h-1.26l-0.77 -0.77zM40.4 55.2l0.77 -0.77h1.26l0.77 0.77v1.26l-0.77 0.77h-1.26l-0.77 -0.77zM41.1 43.6l0.77 -0.77h1.26l0.77 0.77v1.26l-0.77 0.77h-1.26l-0.77 -0.77zM41.7 55.0l0.77 -0.77h1.26l0.77 0.77v1.26l-0.77 0.77h-1.26l-0.77 -0.77zM42.3 55.2l0.77 -0.77h1.26l0.77 0.77v1.26l-0.77 0.77h-1.26l-0.77 -0.77zM43.1 54.0l0.77 -0.77h1.26l0.77 0.77v1.26l-0.77 0.77h-1.26l-0.77 -0.77zM43.8 42.9l0.77 -0.77h1.26l0.77 0.77v1.26l-0.77 0.77h-1.26l-0.77 -0.77zM44.5 42.8l0.77 -0.77h1.26l0.77 0.77v1.26l-0.77 0.77h-1.26l-0.77 -0.77zM45.2 41.0l0.77 -0.77h1.26l0.77 0.77v1.26l-0.77 0.77h-1.26l-0.77 -0.77zM45.9 37.8l0.77 -0.77h1.26l0.77 0.77v1.26l-0.77 0.77h-1.26l-0.77 -0.77zM46.6 46.7l0.77 -0.77h1.26l0.77 0.77v1.26l-0.77 0.77h-1.26l-0.77 -0.77zM47.3 40.4l0.77 -0.77h1.26l0.77 0.77v1.26l-0.77 0.77h-1.26l-0.77 -0.77zM48.0 36.0l0.77 -0.77h1.26l0.77 0.77v1.26l-0.77 0.77h-1.26l-0.77 -0.77zM48.7 42.3l0.77 -0.77h1.26l0.77 0.77v1.26l-0.77 0.77h-1.26l-0.77 -0.77zM49.4 50.2l0.77 -0.77h1.26l0.77 0.77v1.26l-0.77 0.77h-1.26l-0.77 -0.77zM50.1 44.6l0.77 -0.77h1.26l0.77 0.77v1.26l-0.77 0.77h-1.26l-0.77 -0.77zM50.7 44.6l0.77 -0.77h1.26l0.77 0.77v1.26l-0.77 0.77h-1.26l-0.77 -0.77zM51.3 57.3l0.77 -0.77h1.26l0.77 0.77v1.26l-0.77 0.77h-1.26l-0.77 -0.77zM52.1 53.4l0.77 -0.77h1.26l0.77 0.77v1.26l-0.77 0.77h-1.26l-0.77 -0.77zM52.7 49.1l0.77 -0.77h1.26l0.77 0.77v1.26l-0.77 0.77h-1.26l-0.77 -0.77zM53.4 44.5l0.77 -0.77h1.26l0.77 0.77v1.26l-0.77 0.77h-1.26l-0.77 -0.77zM54.2 39.4l0.77 -0.77h1.26l0.77 0.77v1.26l-0.77 0.77h-1.26l-0.77 -0.77zM54.7 48.1l0.77 -0.77h1.26l0.77 0.77v1.26l-0.77 0.77h-1.26l-0.77 -0.77zM55.5 52.4l0.77 -0.77h1.26l0.77 0.77v1.26l-0.77 0.77h-1.26l-0.77 -0.77zM56.1 51.7l0.77 -0.77h1.26l0.77 0.77v1.26l-0.77 0.77h-1.26l-0.77 -0.77zM56.7 50.5l0.77 -0.77h1.26l0.77 0.77v1.26l-0.77 0.77h-1.26l-0.77 -0.77zM57.4 66.8l0.77 -0.77h1.26l0.77 0.77v1.26l-0.77 0.77h-1.26l-0.77 -0.77zM58.1 58.1l0.77 -0.77h1.26l0.77 0.77v1.26l-0.77 0.77h-1.26l-0.77 -0.77zM58.8 50.8l0.77 -0.77h1.26l0.77 0.77v1.26l-0.77 0.77h-1.26l-0.77 -0.77zM59.5 51.7l0.77 -0.77h1.26l0.77 0.77v1.26l-0.77 0.77h-1.26l-0.77 -0.77zM60.2 43.9l0.77 -0.77h1.26l0.77 0.77v1.26l-0.77 0.77h-1.26l-0.77 -0.77zM60.8 50.0l0.77 -0.77h1.26l0.77 0.77v1.26l-0.77 0.77h-1.26l-0.77 -0.77zM61.5 49.7l0.77 -0.77h1.26l0.77 0.77v1.26l-0.77 0.77h-1.26l-0.77 -0.77zM62.1 46.8l0.77 -0.77h1.26l0.77 0.77v1.26l-0.77 0.77h-1.26l-0.77 -0.77zM62.8 62.8l0.77 -0.77h1.26l0.77 0.77v1.26l-0.77 0.77h-1.26l-0.77 -0.77zM63.4 59.4l0.77 -0.77h1.26l0.77 0.77v1.26l-0.77 0.77h-1.26l-0.77 -0.77zM64.1 66.9l0.77 -0.77h1.26l0.77 0.77v1.26l-0.77 0.77h-1.26l-0.77 -0.77zM64.7 61.8l0.77 -0.77h1.26l0.77 0.77v1.26l-0.77 0.77h-1.26l-0.77 -0.77zM65.4 48.5l0.77 -0.77h1.26l0.77 0.77v1.26l-0.77 0.77h-1.26l-0.77 -0.77zM66.0 44.7l0.77 -0.77h1.26l0.77 0.77v1.26l-0.77 0.77h-1.26l-0.77 -0.77zM66.7 62.6l0.77 -0.77h1.26l0.77 0.77v1.26l-0.77 0.77h-1.26l-0.77 -0.77zM67.4 52.4l0.77 -0.77h1.26l0.77 0.77v1.26l-0.77 0.77h-1.26l-0.77 -0.77zM68.0 61.0l0.77 -0.77h1.26l0.77 0.77v1.26l-0.77 0.77h-1.26l-0.77 -0.77zM68.7 57.6l0.77 -0.77h1.26l0.77 0.77v1.26l-0.77 0.77h-1.26l-0.77 -0.77zM69.3 50.0l0.77 -0.77h1.26l0.77 0.77v1.26l-0.77 0.77h-1.26l-0.77 -0.77zM69.9 48.9l0.77 -0.77h1.26l0.77 0.77v1.26l-0.77 0.77h-1.26l-0.77 -0.77zM70.6 69.5l0.77 -0.77h1.26l0.77 0.77v1.26l-0.77 0.77h-1.26l-0.77 -0.77zM71.2 61.7l0.77 -0.77h1.26l0.77 0.77v1.26l-0.77 0.77h-1.26l-0.77 -0.77zM71.9 59.8l0.77 -0.77h1.26l0.77 0.77v1.26l-0.77 0.77h-1.26l-0.77 -0.77zM72.6 54.2l0.77 -0.77h1.26l0.77 0.77v1.26l-0.77 0.77h-1.26l-0.77 -0.77zM73.2 70.1l0.77 -0.77h1.26l0.77 0.77v1.26l-0.77 0.77h-1.26l-0.77 -0.77zM73.7 54.6l0.77 -0.77h1.26l0.77 0.77v1.26l-0.77 0.77h-1.26l-0.77 -0.77zM74.5 62.4l0.77 -0.77h1.26l0.77 0.77v1.26l-0.77 0.77h-1.26l-0.77 -0.77zM75.2 67.2l0.77 -0.77h1.26l0.77 0.77v1.26l-0.77 0.77h-1.26l-0.77 -0.77zM75.8 57.2l0.77 -0.77h1.26l0.77 0.77v1.26l-0.77 0.77h-1.26l-0.77 -0.77zM76.4 67.5l0.77 -0.77h1.26l0.77 0.77v1.26l-0.77 0.77h-1.26l-0.77 -0.77zM77.1 74.9l0.77 -0.77h1.26l0.77 0.77v1.26l-0.77 0.77h-1.26l-0.77 -0.77zM77.7 71.0l0.77 -0.77h1.26l0.77 0.77v1.26l-0.77 0.77h-1.26l-0.77 -0.77zM78.4 82.1l0.77 -0.77h1.26l0.77 0.77v1.26l-0.77 0.77h-1.26l-0.77 -0.77zM79.1 68.0l0.77 -0.77h1.26l0.77 0.77v1.26l-0.77 0.77h-1.26l-0.77 -0.77zM79.7 74.1l0.77 -0.77h1.26l0.77 0.77v1.26l-0.77 0.77h-1.26l-0.77 -0.77zM80.4 70.0l0.77 -0.77h1.26l0.77 0.77v1.26l-0.77 0.77h-1.26l-0.77 -0.77zM81.1 73.0l0.77 -0.77h1.26l0.77 0.77v1.26l-0.77 0.77h-1.26l-0.77 -0.77zM81.7 71.1l0.77 -0.77h1.26l0.77 0.77v1.26l-0.77 0.77h-1.26l-0.77 -0.77zM82.4 76.0l0.77 -0.77h1.26l0.77 0.77v1.26l-0.77 0.77h-1.26l-0.77 -0.77zM83.1 80.6l0.77 -0.77h1.26l0.77 0.77v1.26l-0.77 0.77h-1.26l-0.77 -0.77zM83.7 62.3l0.77 -0.77h1.26l0.77 0.77v1.26l-0.77 0.77h-1.26l-0.77 -0.77zM84.4 77.6l0.77 -0.77h1.26l0.77 0.77v1.26l-0.77 0.77h-1.26l-0.77 -0.77zM85.1 82.2l0.77 -0.77h1.26l0.77 0.77v1.26l-0.77 0.77h-1.26l-0.77 -0.77zM85.7 76.8l0.77 -0.77h1.26l0.77 0.77v1.26l-0.77 0.77h-1.26l-0.77 -0.77zM86.3 73.8l0.77 -0.77h1.26l0.77 0.77v1.26l-0.77 0.77h-1.26l-0.77 -0.77zM87.0 81.3l0.77 -0.77h1.26l0.77 0.77v1.26l-0.77 0.77h-1.26l-0.77 -0.77zM87.6 72.4l0.77 -0.77h1.26l0.77 0.77v1.26l-0.77 0.77h-1.26l-0.77 -0.77zM88.3 72.2l0.77 -0.77h1.26l0.77 0.77v1.26l-0.77 0.77h-1.26l-0.77 -0.77zM88.9 74.8l0.77 -0.77h1.26l0.77 0.77v1.26l-0.77 0.77h-1.26l-0.77 -0.77zM89.5 73.7l0.77 -0.77h1.26l0.77 0.77v1.26l-0.77 0.77h-1.26l-0.77 -0.77zM90.1 70.4l0.77 -0.77h1.26l0.77 0.77v1.26l-0.77 0.77h-1.26l-0.77 -0.77zM90.8 71.2l0.77 -0.77h1.26l0.77 0.77v1.26l-0.77 0.77h-1.26l-0.77 -0.77zM91.5 70.1l0.77 -0.77h1.26l0.77 0.77v1.26l-0.77 0.77h-1.26l-0.77 -0.77zM92.2 70.2l0.77 -0.77h1.26l0.77 0.77v1.26l-0.77 0.77h-1.26l-0.77 -0.77zM92.9 82.0l0.77 -0.77h1.26l0.77 0.77v1.26l-0.77 0.77h-1.26l-0.77 -0.77zM93.6 76.9l0.77 -0.77h1.26l0.77 0.77v1.26l-0.77 0.77h-1.26l-0.77 -0.77zM94.3 76.6l0.77 -0.77h1.26l0.77 0.77v1.26l-0.77 0.77h-1.26l-0.77 -0.77zM95.0 83.0l0.77 -0.77h1.26l0.77 0.77v1.26l-0.77 0.77h-1.26l-0.77 -0.77zM95.7 86.1l0.77 -0.77h1.26l0.77 0.77v1.26l-0.77 0.77h-1.26l-0.77 -0.77zM96.4 92.3l0.77 -0.77h1.26l0.77 0.77v1.26l-0.77 0.77h-1.26l-0.77 -0.77zM97.1 90.3l0.77 -0.77h1.26l0.77 0.77v1.26l-0.77 0.77h-1.26l-0.77 -0.77zM97.8 84.0l0.77 -0.77h1.26l0.77 0.77v1.26l-0.77 0.77h-1.26l-0.77 -0.77zM98.5 79.6l0.77 -0.77h1.26l0.77 0.77v1.26l-0.77 0.77h-1.26l-0.77 -0.77zM99.2 94.4l0.77 -0.77h1.26l0.77 0.77v1.26l-0.77 0.77h-1.26l-0.77 -0.77zM99.8 85.4l0.77 -0.77h1.26l0.77 0.77v1.26l-0.77 0.77h-1.26l-0.77 -0.77zM100.5 87.2l0.77 -0.77h1.26l0.77 0.77v1.26l-0.77 0.77h-1.26l-0.77 -0.77zM101.3 81.8l0.77 -0.77h1.26l0.77 0.77v1.26l-0.77 0.77h-1.26l-0.77 -0.77zM102.0 88.4l0.77 -0.77h1.26l0.77 0.77v1.26l-0.77 0.77h-1.26l-0.77 -0.77zM102.7 87.7l0.77 -0.77h1.26l0.77 0.77v1.26l-0.77 0.77h-1.26l-0.77 -0.77zM103.3 104.0l0.77 -0.77h1.26l0.77 0.77v1.26l-0.77 0.77h-1.26l-0.77 -0.77zM104.0 81.1l0.77 -0.77h1.26l0.77 0.77v1.26l-0.77 0.77h-1.26l-0.77 -0.77zM104.7 95.7l0.77 -0.77h1.26l0.77 0.77v1.26l-0.77 0.77h-1.26l-0.77 -0.77zM105.4 94.2l0.77 -0.77h1.26l0.77 0.77v1.26l-0.77 0.77h-1.26l-0.77 -0.77zM106.0 87.9l0.77 -0.77h1.26l0.77 0.77v1.26l-0.77 0.77h-1.26l-0.77 -0.77zM106.7 84.5l0.77 -0.77h1.26l0.77 0.77v1.26l-0.77 0.77h-1.26l-0.77 -0.77zM107.3 90.0l0.77 -0.77h1.26l0.77 0.77v1.26l-0.77 0.77h-1.26l-0.77 -0.77zM107.9 84.1l0.77 -0.77h1.26l0.77 0.77v1.26l-0.77 0.77h-1.26l-0.77 -0.77zM108.5 90.7l0.77 -0.77h1.26l0.77 0.77v1.26l-0.77 0.77h-1.26l-0.77 -0.77zM109.2 91.7l0.77 -0.77h1.26l0.77 0.77v1.26l-0.77 0.77h-1.26l-0.77 -0.77zM109.8 112.1l0.77 -0.77h1.26l0.77 0.77v1.26l-0.77 0.77h-1.26l-0.77 -0.77zM110.5 84.0l0.77 -0.77h1.26l0.77 0.77v1.26l-0.77 0.77h-1.26l-0.77 -0.77zM111.1 92.3l0.77 -0.77h1.26l0.77 0.77v1.26l-0.77 0.77h-1.26l-0.77 -0.77zM111.8 103.4l0.77 -0.77h1.26l0.77 0.77v1.26l-0.77 0.77h-1.26l-0.77 -0.77zM112.5 99.1l0.77 -0.77h1.26l0.77 0.77v1.26l-0.77 0.77h-1.26l-0.77 -0.77zM113.2 92.8l0.77 -0.77h1.26l0.77 0.77v1.26l-0.77 0.77h-1.26l-0.77 -0.77zM114.0 105.8l0.77 -0.77h1.26l0.77 0.77v1.26l-0.77 0.77h-1.26l-0.77 -0.77zM114.6 101.8l0.77 -0.77h1.26l0.77 0.77v1.26l-0.77 0.77h-1.26l-0.77 -0.77zM115.3 94.2l0.77 -0.77h1.26l0.77 0.77v1.26l-0.77 0.77h-1.26l-0.77 -0.77zM115.9 102.0l0.77 -0.77h1.26l0.77 0.77v1.26l-0.77 0.77h-1.26l-0.77 -0.77zM116.6 104.6l0.77 -0.77h1.26l0.77 0.77v1.26l-0.77 0.77h-1.26l-0.77 -0.77zM117.3 100.4l0.77 -0.77h1.26l0.77 0.77v1.26l-0.77 0.77h-1.26l-0.77 -0.77zM117.9 107.1l0.77 -0.77h1.26l0.77 0.77v1.26l-0.77 0.77h-1.26l-0.77 -0.77zM118.6 114.2l0.77 -0.77h1.26l0.77 0.77v1.26l-0.77 0.77h-1.26l-0.77 -0.77zM119.4 109.6l0.77 -0.77h1.26l0.77 0.77v1.26l-0.77 0.77h-1.26l-0.77 -0.77zM120.1 109.8l0.77 -0.77h1.26l0.77 0.77v1.26l-0.77 0.77h-1.26l-0.77 -0.77zM120.7 109.8l0.77 -0.77h1.26l0.77 0.77v1.26l-0.77 0.77h-1.26l-0.77 -0.77zM121.3 94.1l0.77 -0.77h1.26l0.77 0.77v1.26l-0.77 0.77h-1.26l-0.77 -0.77zM122.0 94.0l0.77 -0.77h1.26l0.77 0.77v1.26l-0.77 0.77h-1.26l-0.77 -0.77zM122.6 86.7l0.77 -0.77h1.26l0.77 0.77v1.26l-0.77 0.77h-1.26l-0.77 -0.77zM123.2 84.3l0.77 -0.77h1.26l0.77 0.77v1.26l-0.77 0.77h-1.26l-0.77 -0.77zM123.9 82.8l0.77 -0.77h1.26l0.77 0.77v1.26l-0.77 0.77h-1.26l-0.77 -0.77zM124.6 105.8l0.77 -0.77h1.26l0.77 0.77v1.26l-0.77 0.77h-1.26l-0.77 -0.77zM125.4 109.2l0.77 -0.77h1.26l0.77 0.77v1.26l-0.77 0.77h-1.26l-0.77 -0.77zM126.0 107.7l0.77 -0.77h1.26l0.77 0.77v1.26l-0.77 0.77h-1.26l-0.77 -0.77zM126.7 102.1l0.77 -0.77h1.26l0.77 0.77v1.26l-0.77 0.77h-1.26l-0.77 -0.77zM127.4 103.3l0.77 -0.77h1.26l0.77 0.77v1.26l-0.77 0.77h-1.26l-0.77 -0.77zM128.0 109.5l0.77 -0.77h1.26l0.77 0.77v1.26l-0.77 0.77h-1.26l-0.77 -0.77zM128.6 101.9l0.77 -0.77h1.26l0.77 0.77v1.26l-0.77 0.77h-1.26l-0.77 -0.77zM129.3 117.4l0.77 -0.77h1.26l0.77 0.77v1.26l-0.77 0.77h-1.26l-0.77 -0.77zM129.9 118.5l0.77 -0.77h1.26l0.77 0.77v1.26l-0.77 0.77h-1.26l-0.77 -0.77zM130.5 126.1l0.77 -0.77h1.26l0.77 0.77v1.26l-0.77 0.77h-1.26l-0.77 -0.77zM131.2 113.3l0.77 -0.77h1.26l0.77 0.77v1.26l-0.77 0.77h-1.26l-0.77 -0.77zM131.8 130.2l0.77 -0.77h1.26l0.77 0.77v1.26l-0.77 0.77h-1.26l-0.77 -0.77zM132.3 131.5l0.77 -0.77h1.26l0.77 0.77v1.26l-0.77 0.77h-1.26l-0.77 -0.77zM133.1 111.5l0.77 -0.77h1.26l0.77 0.77v1.26l-0.77 0.77h-1.26l-0.77 -0.77zM133.8 130.8l0.77 -0.77h1.26l0.77 0.77v1.26l-0.77 0.77h-1.26l-0.77 -0.77zM134.3 139.6l0.77 -0.77h1.26l0.77 0.77v1.26l-0.77 0.77h-1.26l-0.77 -0.77zM135.0 131.6l0.77 -0.77h1.26l0.77 0.77v1.26l-0.77 0.77h-1.26l-0.77 -0.77zM135.6 132.1l0.77 -0.77h1.26l0.77 0.77v1.26l-0.77 0.77h-1.26l-0.77 -0.77zM136.3 128.5l0.77 -0.77h1.26l0.77 0.77v1.26l-0.77 0.77h-1.26l-0.77 -0.77zM136.9 133.1l0.77 -0.77h1.26l0.77 0.77v1.26l-0.77 0.77h-1.26l-0.77 -0.77zM137.7 125.3l0.77 -0.77h1.26l0.77 0.77v1.26l-0.77 0.77h-1.26l-0.77 -0.77zM138.3 136.8l0.77 -0.77h1.26l0.77 0.77v1.26l-0.77 0.77h-1.26l-0.77 -0.77zM139.0 138.8l0.77 -0.77h1.26l0.77 0.77v1.26l-0.77 0.77h-1.26l-0.77 -0.77zM139.6 124.0l0.77 -0.77h1.26l0.77 0.77v1.26l-0.77 0.77h-1.26l-0.77 -0.77zM140.3 132.4l0.77 -0.77h1.26l0.77 0.77v1.26l-0.77 0.77h-1.26l-0.77 -0.77zM141.0 132.1l0.77 -0.77h1.26l0.77 0.77v1.26l-0.77 0.77h-1.26l-0.77 -0.77zM141.6 125.4l0.77 -0.77h1.26l0.77 0.77v1.26l-0.77 0.77h-1.26l-0.77 -0.77zM142.2 126.4l0.77 -0.77h1.26l0.77 0.77v1.26l-0.77 0.77h-1.26l-0.77 -0.77zM142.9 134.8l0.77 -0.77h1.26l0.77 0.77v1.26l-0.77 0.77h-1.26l-0.77 -0.77zM143.6 130.5l0.77 -0.77h1.26l0.77 0.77v1.26l-0.77 0.77h-1.26l-0.77 -0.77zM144.3 133.6l0.77 -0.77h1.26l0.77 0.77v1.26l-0.77 0.77h-1.26l-0.77 -0.77zM144.9 135.4l0.77 -0.77h1.26l0.77 0.77v1.26l-0.77 0.77h-1.26l-0.77 -0.77zM145.6 124.7l0.77 -0.77h1.26l0.77 0.77v1.26l-0.77 0.77h-1.26l-0.77 -0.77zM146.2 140.4l0.77 -0.77h1.26l0.77 0.77v1.26l-0.77 0.77h-1.26l-0.77 -0.77zM146.9 120.7l0.77 -0.77h1.26l0.77 0.77v1.26l-0.77 0.77h-1.26l-0.77 -0.77zM147.6 133.4l0.77 -0.77h1.26l0.77 0.77v1.26l-0.77 0.77h-1.26l-0.77 -0.77zM148.2 130.4l0.77 -0.77h1.26l0.77 0.77v1.26l-0.77 0.77h-1.26l-0.77 -0.77zM148.9 148.5l0.77 -0.77h1.26l0.77 0.77v1.26l-0.77 0.77h-1.26l-0.77 -0.77zM149.5 136.9l0.77 -0.77h1.26l0.77 0.77v1.26l-0.77 0.77h-1.26l-0.77 -0.77zM150.1 141.6l0.77 -0.77h1.26l0.77 0.77v1.26l-0.77 0.77h-1.26l-0.77 -0.77zM150.8 133.2l0.77 -0.77h1.26l0.77 0.77v1.26l-0.77 0.77h-1.26l-0.77 -0.77zM151.5 147.2l0.77 -0.77h1.26l0.77 0.77v1.26l-0.77 0.77h-1.26l-0.77 -0.77zM152.2 139.5l0.77 -0.77h1.26l0.77 0.77v1.26l-0.77 0.77h-1.26l-0.77 -0.77zM152.8 143.9l0.77 -0.77h1.26l0.77 0.77v1.26l-0.77 0.77h-1.26l-0.77 -0.77zM153.4 138.7l0.77 -0.77h1.26l0.77 0.77v1.26l-0.77 0.77h-1.26l-0.77 -0.77zM154.1 120.5l0.77 -0.77h1.26l0.77 0.77v1.26l-0.77 0.77h-1.26l-0.77 -0.77zM154.7 133.9l0.77 -0.77h1.26l0.77 0.77v1.26l-0.77 0.77h-1.26l-0.77 -0.77zM155.3 136.9l0.77 -0.77h1.26l0.77 0.77v1.26l-0.77 0.77h-1.26l-0.77 -0.77zM156.0 130.1l0.77 -0.77h1.26l0.77 0.77v1.26l-0.77 0.77h-1.26l-0.77 -0.77zM156.7 146.3l0.77 -0.77h1.26l0.77 0.77v1.26l-0.77 0.77h-1.26l-0.77 -0.77zM157.4 125.7l0.77 -0.77h1.26l0.77 0.77v1.26l-0.77 0.77h-1.26l-0.77 -0.77zM158.1 133.9l0.77 -0.77h1.26l0.77 0.77v1.26l-0.77 0.77h-1.26l-0.77 -0.77zM158.7 135.3l0.77 -0.77h1.26l0.77 0.77v1.26l-0.77 0.77h-1.26l-0.77 -0.77zM159.3 128.4l0.77 -0.77h1.26l0.77 0.77v1.26l-0.77 0.77h-1.26l-0.77 -0.77zM160.0 125.6l0.77 -0.77h1.26l0.77 0.77v1.26l-0.77 0.77h-1.26l-0.77 -0.77zM160.8 115.6l0.77 -0.77h1.26l0.77 0.77v1.26l-0.77 0.77h-1.26l-0.77 -0.77zM161.4 123.7l0.77 -0.77h1.26l0.77 0.77v1.26l-0.77 0.77h-1.26l-0.77 -0.77zM162.1 128.2l0.77 -0.77h1.26l0.77 0.77v1.26l-0.77 0.77h-1.26l-0.77 -0.77zM162.7 138.2l0.77 -0.77h1.26l0.77 0.77v1.26l-0.77 0.77h-1.26l-0.77 -0.77zM163.4 140.4l0.77 -0.77h1.26l0.77 0.77v1.26l-0.77 0.77h-1.26l-0.77 -0.77zM164.0 150.0l0.77 -0.77h1.26l0.77 0.77v1.26l-0.77 0.77h-1.26l-0.77 -0.77zM164.8 139.9l0.77 -0.77h1.26l0.77 0.77v1.26l-0.77 0.77h-1.26l-0.77 -0.77zM165.3 135.5l0.77 -0.77h1.26l0.77 0.77v1.26l-0.77 0.77h-1.26l-0.77 -0.77zM166.1 129.1l0.77 -0.77h1.26l0.77 0.77v1.26l-0.77 0.77h-1.26l-0.77 -0.77zM166.8 143.7l0.77 -0.77h1.26l0.77 0.77v1.26l-0.77 0.77h-1.26l-0.77 -0.77zM167.4 136.4l0.77 -0.77h1.26l0.77 0.77v1.26l-0.77 0.77h-1.26l-0.77 -0.77zM168.1 152.3l0.77 -0.77h1.26l0.77 0.77v1.26l-0.77 0.77h-1.26l-0.77 -0.77zM168.8 148.4l0.77 -0.77h1.26l0.77 0.77v1.26l-0.77 0.77h-1.26l-0.77 -0.77zM169.4 136.8l0.77 -0.77h1.26l0.77 0.77v1.26l-0.77 0.77h-1.26l-0.77 -0.77zM170.1 154.1l0.77 -0.77h1.26l0.77 0.77v1.26l-0.77 0.77h-1.26l-0.77 -0.77zM170.7 149.9l0.77 -0.77h1.26l0.77 0.77v1.26l-0.77 0.77h-1.26l-0.77 -0.77zM171.4 144.8l0.77 -0.77h1.26l0.77 0.77v1.26l-0.77 0.77h-1.26l-0.77 -0.77zM172.1 151.0l0.77 -0.77h1.26l0.77 0.77v1.26l-0.77 0.77h-1.26l-0.77 -0.77zM172.9 141.0l0.77 -0.77h1.26l0.77 0.77v1.26l-0.77 0.77h-1.26l-0.77 -0.77zM173.5 147.6l0.77 -0.77h1.26l0.77 0.77v1.26l-0.77 0.77h-1.26l-0.77 -0.77zM174.3 144.3l0.77 -0.77h1.26l0.77 0.77v1.26l-0.77 0.77h-1.26l-0.77 -0.77zM174.9 151.3l0.77 -0.77h1.26l0.77 0.77v1.26l-0.77 0.77h-1.26l-0.77 -0.77zM175.6 134.5l0.77 -0.77h1.26l0.77 0.77v1.26l-0.77 0.77h-1.26l-0.77 -0.77zM176.3 146.7l0.77 -0.77h1.26l0.77 0.77v1.26l-0.77 0.77h-1.26l-0.77 -0.77zM177.0 152.4l0.77 -0.77h1.26l0.77 0.77v1.26l-0.77 0.77h-1.26l-0.77 -0.77zM177.7 151.6l0.77 -0.77h1.26l0.77 0.77v1.26l-0.77 0.77h-1.26l-0.77 -0.77zM178.4 147.1l0.77 -0.77h1.26l0.77 0.77v1.26l-0.77 0.77h-1.26l-0.77 -0.77zM179.0 144.4l0.77 -0.77h1.26l0.77 0.77v1.26l-0.77 0.77h-1.26l-0.77 -0.77zM179.7 144.9l0.77 -0.77h1.26l0.77 0.77v1.26l-0.77 0.77h-1.26l-0.77 -0.77zM180.3 153.7l0.77 -0.77h1.26l0.77 0.77v1.26l-0.77 0.77h-1.26l-0.77 -0.77zM180.9 150.6l0.77 -0.77h1.26l0.77 0.77v1.26l-0.77 0.77h-1.26l-0.77 -0.77zM181.5 163.0l0.77 -0.77h1.26l0.77 0.77v1.26l-0.77 0.77h-1.26l-0.77 -0.77zM182.1 160.0l0.77 -0.77h1.26l0.77 0.77v1.26l-0.77 0.77h-1.26l-0.77 -0.77zM182.8 155.3l0.77 -0.77h1.26l0.77 0.77v1.26l-0.77 0.77h-1.26l-0.77 -0.77zM183.5 159.1l0.77 -0.77h1.26l0.77 0.77v1.26l-0.77 0.77h-1.26l-0.77 -0.77zM184.2 142.8l0.77 -0.77h1.26l0.77 0.77v1.26l-0.77 0.77h-1.26l-0.77 -0.77zM184.9 153.7l0.77 -0.77h1.26l0.77 0.77v1.26l-0.77 0.77h-1.26l-0.77 -0.77zM185.6 150.1l0.77 -0.77h1.26l0.77 0.77v1.26l-0.77 0.77h-1.26l-0.77 -0.77zM186.2 145.7l0.77 -0.77h1.26l0.77 0.77v1.26l-0.77 0.77h-1.26l-0.77 -0.77zM186.7 144.8l0.77 -0.77h1.26l0.77 0.77v1.26l-0.77 0.77h-1.26l-0.77 -0.77zM187.5 151.8l0.77 -0.77h1.26l0.77 0.77v1.26l-0.77 0.77h-1.26l-0.77 -0.77zM188.2 149.4l0.77 -0.77h1.26l0.77 0.77v1.26l-0.77 0.77h-1.26l-0.77 -0.77zM188.9 137.3l0.77 -0.77h1.26l0.77 0.77v1.26l-0.77 0.77h-1.26l-0.77 -0.77zM189.5 157.9l0.77 -0.77h1.26l0.77 0.77v1.26l-0.77 0.77h-1.26l-0.77 -0.77zM190.2 162.4l0.77 -0.77h1.26l0.77 0.77v1.26l-0.77 0.77h-1.26l-0.77 -0.77zM190.9 138.9l0.77 -0.77h1.26l0.77 0.77v1.26l-0.77 0.77h-1.26l-0.77 -0.77zM191.7 152.8l0.77 -0.77h1.26l0.77 0.77v1.26l-0.77 0.77h-1.26l-0.77 -0.77zM192.3 148.1l0.77 -0.77h1.26l0.77 0.77v1.26l-0.77 0.77h-1.26l-0.77 -0.77zM193.0 161.4l0.77 -0.77h1.26l0.77 0.77v1.26l-0.77 0.77h-1.26l-0.77 -0.77zM193.7 170.5l0.77 -0.77h1.26l0.77 0.77v1.26l-0.77 0.77h-1.26l-0.77 -0.77zM194.5 159.1l0.77 -0.77h1.26l0.77 0.77v1.26l-0.77 0.77h-1.26l-0.77 -0.77zM195.2 160.7l0.77 -0.77h1.26l0.77 0.77v1.26l-0.77 0.77h-1.26l-0.77 -0.77zM195.8 168.4l0.77 -0.77h1.26l0.77 0.77v1.26l-0.77 0.77h-1.26l-0.77 -0.77zM196.4 159.3l0.77 -0.77h1.26l0.77 0.77v1.26l-0.77 0.77h-1.26l-0.77 -0.77zM197.0 165.4l0.77 -0.77h1.26l0.77 0.77v1.26l-0.77 0.77h-1.26l-0.77 -0.77zM197.6 155.6l0.77 -0.77h1.26l0.77 0.77v1.26l-0.77 0.77h-1.26l-0.77 -0.77zM198.2 168.5l0.77 -0.77h1.26l0.77 0.77v1.26l-0.77 0.77h-1.26l-0.77 -0.77zM198.8 165.0l0.77 -0.77h1.26l0.77 0.77v1.26l-0.77 0.77h-1.26l-0.77 -0.77zM199.5 170.0l0.77 -0.77h1.26l0.77 0.77v1.26l-0.77 0.77h-1.26l-0.77 -0.77zM200.1 161.3l0.77 -0.77h1.26l0.77 0.77v1.26l-0.77 0.77h-1.26l-0.77 -0.77zM200.9 169.0l0.77 -0.77h1.26l0.77 0.77v1.26l-0.77 0.77h-1.26l-0.77 -0.77zM201.5 155.0l0.77 -0.77h1.26l0.77 0.77v1.26l-0.77 0.77h-1.26l-0.77 -0.77zM202.2 169.9l0.77 -0.77h1.26l0.77 0.77v1.26l-0.77 0.77h-1.26l-0.77 -0.77zM202.8 159.9l0.77 -0.77h1.26l0.77 0.77v1.26l-0.77 0.77h-1.26l-0.77 -0.77zM203.5 150.6l0.77 -0.77h1.26l0.77 0.77v1.26l-0.77 0.77h-1.26l-0.77 -0.77zM204.1 162.2l0.77 -0.77h1.26l0.77 0.77v1.26l-0.77 0.77h-1.26l-0.77 -0.77zM204.8 169.1l0.77 -0.77h1.26l0.77 0.77v1.26l-0.77 0.77h-1.26l-0.77 -0.77zM205.4 167.5l0.77 -0.77h1.26l0.77 0.77v1.26l-0.77 0.77h-1.26l-0.77 -0.77zM206.1 150.7l0.77 -0.77h1.26l0.77 0.77v1.26l-0.77 0.77h-1.26l-0.77 -0.77zM206.7 167.0l0.77 -0.77h1.26l0.77 0.77v1.26l-0.77 0.77h-1.26l-0.77 -0.77zM207.3 164.6l0.77 -0.77h1.26l0.77 0.77v1.26l-0.77 0.77h-1.26l-0.77 -0.77zM207.9 160.0l0.77 -0.77h1.26l0.77 0.77v1.26l-0.77 0.77h-1.26l-0.77 -0.77zM208.7 161.1l0.77 -0.77h1.26l0.77 0.77v1.26l-0.77 0.77h-1.26l-0.77 -0.77zM209.3 151.0l0.77 -0.77h1.26l0.77 0.77v1.26l-0.77 0.77h-1.26l-0.77 -0.77zM209.9 172.2l0.77 -0.77h1.26l0.77 0.77v1.26l-0.77 0.77h-1.26l-0.77 -0.77zM210.6 162.0l0.77 -0.77h1.26l0.77 0.77v1.26l-0.77 0.77h-1.26l-0.77 -0.77zM211.2 164.9l0.77 -0.77h1.26l0.77 0.77v1.26l-0.77 0.77h-1.26l-0.77 -0.77zM212.0 169.7l0.77 -0.77h1.26l0.77 0.77v1.26l-0.77 0.77h-1.26l-0.77 -0.77zM212.6 171.2l0.77 -0.77h1.26l0.77 0.77v1.26l-0.77 0.77h-1.26l-0.77 -0.77zM213.3 166.0l0.77 -0.77h1.26l0.77 0.77v1.26l-0.77 0.77h-1.26l-0.77 -0.77zM214.0 175.5l0.77 -0.77h1.26l0.77 0.77v1.26l-0.77 0.77h-1.26l-0.77 -0.77zM214.6 164.5l0.77 -0.77h1.26l0.77 0.77v1.26l-0.77 0.77h-1.26l-0.77 -0.77zM215.3 166.8l0.77 -0.77h1.26l0.77 0.77v1.26l-0.77 0.77h-1.26l-0.77 -0.77zM216.0 185.8l0.77 -0.77h1.26l0.77 0.77v1.26l-0.77 0.77h-1.26l-0.77 -0.77zM216.6 172.7l0.77 -0.77h1.26l0.77 0.77v1.26l-0.77 0.77h-1.26l-0.77 -0.77zM217.3 174.3l0.77 -0.77h1.26l0.77 0.77v1.26l-0.77 0.77h-1.26l-0.77 -0.77zM217.9 185.0l0.77 -0.77h1.26l0.77 0.77v1.26l-0.77 0.77h-1.26l-0.77 -0.77zM218.7 183.7l0.77 -0.77h1.26l0.77 0.77v1.26l-0.77 0.77h-1.26l-0.77 -0.77zM219.2 180.0l0.77 -0.77h1.26l0.77 0.77v1.26l-0.77 0.77h-1.26l-0.77 -0.77zM220.0 173.3l0.77 -0.77h1.26l0.77 0.77v1.26l-0.77 0.77h-1.26l-0.77 -0.77zM220.7 176.9l0.77 -0.77h1.26l0.77 0.77v1.26l-0.77 0.77h-1.26l-0.77 -0.77zM221.3 181.3l0.77 -0.77h1.26l0.77 0.77v1.26l-0.77 0.77h-1.26l-0.77 -0.77zM222.0 182.3l0.77 -0.77h1.26l0.77 0.77v1.26l-0.77 0.77h-1.26l-0.77 -0.77zM222.6 198.2l0.77 -0.77h1.26l0.77 0.77v1.26l-0.77 0.77h-1.26l-0.77 -0.77zM223.3 179.1l0.77 -0.77h1.26l0.77 0.77v1.26l-0.77 0.77h-1.26l-0.77 -0.77zM224.0 190.7l0.77 -0.77h1.26l0.77 0.77v1.26l-0.77 0.77h-1.26l-0.77 -0.77zM224.7 187.4l0.77 -0.77h1.26l0.77 0.77v1.26l-0.77 0.77h-1.26l-0.77 -0.77zM225.4 190.8l0.77 -0.77h1.26l0.77 0.77v1.26l-0.77 0.77h-1.26l-0.77 -0.77zM226.0 188.1l0.77 -0.77h1.26l0.77 0.77v1.26l-0.77 0.77h-1.26l-0.77 -0.77zM226.6 182.8l0.77 -0.77h1.26l0.77 0.77v1.26l-0.77 0.77h-1.26l-0.77 -0.77zM227.3 184.7l0.77 -0.77h1.26l0.77 0.77v1.26l-0.77 0.77h-1.26l-0.77 -0.77zM228.0 184.8l0.77 -0.77h1.26l0.77 0.77v1.26l-0.77 0.77h-1.26l-0.77 -0.77zM228.7 193.6l0.77 -0.77h1.26l0.77 0.77v1.26l-0.77 0.77h-1.26l-0.77 -0.77zM229.4 177.6l0.77 -0.77h1.26l0.77 0.77v1.26l-0.77 0.77h-1.26l-0.77 -0.77zM230.1 184.3l0.77 -0.77h1.26l0.77 0.77v1.26l-0.77 0.77h-1.26l-0.77 -0.77zM230.8 188.8l0.77 -0.77h1.26l0.77 0.77v1.26l-0.77 0.77h-1.26l-0.77 -0.77zM231.4 188.7l0.77 -0.77h1.26l0.77 0.77v1.26l-0.77 0.77h-1.26l-0.77 -0.77zM232.0 193.1l0.77 -0.77h1.26l0.77 0.77v1.26l-0.77 0.77h-1.26l-0.77 -0.77zM232.7 194.9l0.77 -0.77h1.26l0.77 0.77v1.26l-0.77 0.77h-1.26l-0.77 -0.77zM233.4 191.5l0.77 -0.77h1.26l0.77 0.77v1.26l-0.77 0.77h-1.26l-0.77 -0.77zM234.1 194.9l0.77 -0.77h1.26l0.77 0.77v1.26l-0.77 0.77h-1.26l-0.77 -0.77zM234.7 188.8l0.77 -0.77h1.26l0.77 0.77v1.26l-0.77 0.77h-1.26l-0.77 -0.77zM235.4 180.4l0.77 -0.77h1.26l0.77 0.77v1.26l-0.77 0.77h-1.26l-0.77 -0.77zM236.0 184.2l0.77 -0.77h1.26l0.77 0.77v1.26l-0.77 0.77h-1.26l-0.77 -0.77zM236.8 194.6l0.77 -0.77h1.26l0.77 0.77v1.26l-0.77 0.77h-1.26l-0.77 -0.77zM237.4 194.2l0.77 -0.77h1.26l0.77 0.77v1.26l-0.77 0.77h-1.26l-0.77 -0.77zM238.1 186.5l0.77 -0.77h1.26l0.77 0.77v1.26l-0.77 0.77h-1.26l-0.77 -0.77zM238.8 190.5l0.77 -0.77h1.26l0.77 0.77v1.26l-0.77 0.77h-1.26l-0.77 -0.77zM239.4 197.0l0.77 -0.77h1.26l0.77 0.77v1.26l-0.77 0.77h-1.26l-0.77 -0.77zM240.0 181.9l0.77 -0.77h1.26l0.77 0.77v1.26l-0.77 0.77h-1.26l-0.77 -0.77zM240.7 196.0l0.77 -0.77h1.26l0.77 0.77v1.26l-0.77 0.77h-1.26l-0.77 -0.77zM241.4 198.5l0.77 -0.77h1.26l0.77 0.77v1.26l-0.77 0.77h-1.26l-0.77 -0.77zM242.0 196.7l0.77 -0.77h1.26l0.77 0.77v1.26l-0.77 0.77h-1.26l-0.77 -0.77zM242.7 186.5l0.77 -0.77h1.26l0.77 0.77v1.26l-0.77 0.77h-1.26l-0.77 -0.77zM243.4 201.0l0.77 -0.77h1.26l0.77 0.77v1.26l-0.77 0.77h-1.26l-0.77 -0.77zM244.1 198.4l0.77 -0.77h1.26l0.77 0.77v1.26l-0.77 0.77h-1.26l-0.77 -0.77zM244.7 197.3l0.77 -0.77h1.26l0.77 0.77v1.26l-0.77 0.77h-1.26l-0.77 -0.77zM245.3 221.1l0.77 -0.77h1.26l0.77 0.77v1.26l-0.77 0.77h-1.26l-0.77 -0.77zM246.0 203.9l0.77 -0.77h1.26l0.77 0.77v1.26l-0.77 0.77h-1.26l-0.77 -0.77zM246.7 206.8l0.77 -0.77h1.26l0.77 0.77v1.26l-0.77 0.77h-1.26l-0.77 -0.77zM247.3 203.3l0.77 -0.77h1.26l0.77 0.77v1.26l-0.77 0.77h-1.26l-0.77 -0.77zM247.9 206.4l0.77 -0.77h1.26l0.77 0.77v1.26l-0.77 0.77h-1.26l-0.77 -0.77zM248.6 214.5l0.77 -0.77h1.26l0.77 0.77v1.26l-0.77 0.77h-1.26l-0.77 -0.77zM249.2 211.7l0.77 -0.77h1.26l0.77 0.77v1.26l-0.77 0.77h-1.26l-0.77 -0.77zM250.0 209.7l0.77 -0.77h1.26l0.77 0.77v1.26l-0.77 0.77h-1.26l-0.77 -0.77zM250.6 212.6l0.77 -0.77h1.26l0.77 0.77v1.26l-0.77 0.77h-1.26l-0.77 -0.77zM251.3 204.6l0.77 -0.77h1.26l0.77 0.77v1.26l-0.77 0.77h-1.26l-0.77 -0.77zM251.9 212.9l0.77 -0.77h1.26l0.77 0.77v1.26l-0.77 0.77h-1.26l-0.77 -0.77zM252.5 214.4l0.77 -0.77h1.26l0.77 0.77v1.26l-0.77 0.77h-1.26l-0.77 -0.77zM253.2 212.8l0.77 -0.77h1.26l0.77 0.77v1.26l-0.77 0.77h-1.26l-0.77 -0.77zM254.0 203.4l0.77 -0.77h1.26l0.77 0.77v1.26l-0.77 0.77h-1.26l-0.77 -0.77zM254.6 203.2l0.77 -0.77h1.26l0.77 0.77v1.26l-0.77 0.77h-1.26l-0.77 -0.77zM255.2 204.1l0.77 -0.77h1.26l0.77 0.77v1.26l-0.77 0.77h-1.26l-0.77 -0.77zM255.9 210.8l0.77 -0.77h1.26l0.77 0.77v1.26l-0.77 0.77h-1.26l-0.77 -0.77zM256.5 206.7l0.77 -0.77h1.26l0.77 0.77v1.26l-0.77 0.77h-1.26l-0.77 -0.77zM257.1 201.5l0.77 -0.77h1.26l0.77 0.77v1.26l-0.77 0.77h-1.26l-0.77 -0.77zM257.8 220.7l0.77 -0.77h1.26l0.77 0.77v1.26l-0.77 0.77h-1.26l-0.77 -0.77zM258.5 218.5l0.77 -0.77h1.26l0.77 0.77v1.26l-0.77 0.77h-1.26l-0.77 -0.77zM259.2 224.4l0.77 -0.77h1.26l0.77 0.77v1.26l-0.77 0.77h-1.26l-0.77 -0.77zM260.0 232.6l0.77 -0.77h1.26l0.77 0.77v1.26l-0.77 0.77h-1.26l-0.77 -0.77zM260.6 218.4l0.77 -0.77h1.26l0.77 0.77v1.26l-0.77 0.77h-1.26l-0.77 -0.77zM261.3 224.8l0.77 -0.77h1.26l0.77 0.77v1.26l-0.77 0.77h-1.26l-0.77 -0.77zM262.0 226.1l0.77 -0.77h1.26l0.77 0.77v1.26l-0.77 0.77h-1.26l-0.77 -0.77zM262.7 226.2l0.77 -0.77h1.26l0.77 0.77v1.26l-0.77 0.77h-1.26l-0.77 -0.77zM263.4 220.4l0.77 -0.77h1.26l0.77 0.77v1.26l-0.77 0.77h-1.26l-0.77 -0.77zM264.1 216.6l0.77 -0.77h1.26l0.77 0.77v1.26l-0.77 0.77h-1.26l-0.77 -0.77zM264.8 220.5l0.77 -0.77h1.26l0.77 0.77v1.26l-0.77 0.77h-1.26l-0.77 -0.77zM265.5 228.2l0.77 -0.77h1.26l0.77 0.77v1.26l-0.77 0.77h-1.26l-0.77 -0.77zM266.1 215.6l0.77 -0.77h1.26l0.77 0.77v1.26l-0.77 0.77h-1.26l-0.77 -0.77zM266.7 228.2l0.77 -0.77h1.26l0.77 0.77v1.26l-0.77 0.77h-1.26l-0.77 -0.77zM267.3 224.4l0.77 -0.77h1.26l0.77 0.77v1.26l-0.77 0.77h-1.26l-0.77 -0.77zM268.1 232.2l0.77 -0.77h1.26l0.77 0.77v1.26l-0.77 0.77h-1.26l-0.77 -0.77zM268.7 217.9l0.77 -0.77h1.26l0.77 0.77v1.26l-0.77 0.77h-1.26l-0.77 -0.77zM269.3 218.2l0.77 -0.77h1.26l0.77 0.77v1.26l-0.77 0.77h-1.26l-0.77 -0.77zM269.9 222.3l0.77 -0.77h1.26l0.77 0.77v1.26l-0.77 0.77h-1.26l-0.77 -0.77zM270.6 214.6l0.77 -0.77h1.26l0.77 0.77v1.26l-0.77 0.77h-1.26l-0.77 -0.77zM271.3 223.3l0.77 -0.77h1.26l0.77 0.77v1.26l-0.77 0.77h-1.26l-0.77 -0.77zM271.9 224.2l0.77 -0.77h1.26l0.77 0.77v1.26l-0.77 0.77h-1.26l-0.77 -0.77zM272.6 230.4l0.77 -0.77h1.26l0.77 0.77v1.26l-0.77 0.77h-1.26l-0.77 -0.77zM273.2 221.0l0.77 -0.77h1.26l0.77 0.77v1.26l-0.77 0.77h-1.26l-0.77 -0.77zM273.9 237.3l0.77 -0.77h1.26l0.77 0.77v1.26l-0.77 0.77h-1.26l-0.77 -0.77zM274.7 233.3l0.77 -0.77h1.26l0.77 0.77v1.26l-0.77 0.77h-1.26l-0.77 -0.77zM275.4 230.6l0.77 -0.77h1.26l0.77 0.77v1.26l-0.77 0.77h-1.26l-0.77 -0.77zM276.0 233.2l0.77 -0.77h1.26l0.77 0.77v1.26l-0.77 0.77h-1.26l-0.77 -0.77zM276.7 225.8l0.77 -0.77h1.26l0.77 0.77v1.26l-0.77 0.77h-1.26l-0.77 -0.77zM277.3 211.4l0.77 -0.77h1.26l0.77 0.77v1.26l-0.77 0.77h-1.26l-0.77 -0.77zM278.0 236.3l0.77 -0.77h1.26l0.77 0.77v1.26l-0.77 0.77h-1.26l-0.77 -0.77zM278.8 219.8l0.77 -0.77h1.26l0.77 0.77v1.26l-0.77 0.77h-1.26l-0.77 -0.77zM279.4 227.1l0.77 -0.77h1.26l0.77 0.77v1.26l-0.77 0.77h-1.26l-0.77 -0.77zM280.0 217.2l0.77 -0.77h1.26l0.77 0.77v1.26l-0.77 0.77h-1.26l-0.77 -0.77zM280.7 215.5l0.77 -0.77h1.26l0.77 0.77v1.26l-0.77 0.77h-1.26l-0.77 -0.77zM281.4 227.7l0.77 -0.77h1.26l0.77 0.77v1.26l-0.77 0.77h-1.26l-0.77 -0.77zM282.1 222.3l0.77 -0.77h1.26l0.77 0.77v1.26l-0.77 0.77h-1.26l-0.77 -0.77zM282.7 222.0l0.77 -0.77h1.26l0.77 0.77v1.26l-0.77 0.77h-1.26l-0.77 -0.77zM283.4 238.8l0.77 -0.77h1.26l0.77 0.77v1.26l-0.77 0.77h-1.26l-0.77 -0.77zM284.0 238.9l0.77 -0.77h1.26l0.77 0.77v1.26l-0.77 0.77h-1.26l-0.77 -0.77zM284.7 251.0l0.77 -0.77h1.26l0.77 0.77v1.26l-0.77 0.77h-1.26l-0.77 -0.77zM285.4 244.5l0.77 -0.77h1.26l0.77 0.77v1.26l-0.77 0.77h-1.26l-0.77 -0.77zM286.0 247.9l0.77 -0.77h1.26l0.77 0.77v1.26l-0.77 0.77h-1.26l-0.77 -0.77zM286.6 234.9l0.77 -0.77h1.26l0.77 0.77v1.26l-0.77 0.77h-1.26l-0.77 -0.77zM287.3 253.1l0.77 -0.77h1.26l0.77 0.77v1.26l-0.77 0.77h-1.26l-0.77 -0.77zM287.9 238.4l0.77 -0.77h1.26l0.77 0.77v1.26l-0.77 0.77h-1.26l-0.77 -0.77zM288.5 245.8l0.77 -0.77h1.26l0.77 0.77v1.26l-0.77 0.77h-1.26l-0.77 -0.77zM289.1 236.8l0.77 -0.77h1.26l0.77 0.77v1.26l-0.77 0.77h-1.26l-0.77 -0.77zM289.9 245.2l0.77 -0.77h1.26l0.77 0.77v1.26l-0.77 0.77h-1.26l-0.77 -0.77zM290.5 241.2l0.77 -0.77h1.26l0.77 0.77v1.26l-0.77 0.77h-1.26l-0.77 -0.77zM291.3 257.1l0.77 -0.77h1.26l0.77 0.77v1.26l-0.77 0.77h-1.26l-0.77 -0.77zM291.9 252.7l0.77 -0.77h1.26l0.77 0.77v1.26l-0.77 0.77h-1.26l-0.77 -0.77zM292.5 248.5l0.77 -0.77h1.26l0.77 0.77v1.26l-0.77 0.77h-1.26l-0.77 -0.77zM293.2 245.9l0.77 -0.77h1.26l0.77 0.77v1.26l-0.77 0.77h-1.26l-0.77 -0.77zM293.8 255.2l0.77 -0.77h1.26l0.77 0.77v1.26l-0.77 0.77h-1.26l-0.77 -0.77zM294.4 244.4l0.77 -0.77h1.26l0.77 0.77v1.26l-0.77 0.77h-1.26l-0.77 -0.77zM295.1 248.0l0.77 -0.77h1.26l0.77 0.77v1.26l-0.77 0.77h-1.26l-0.77 -0.77zM295.7 246.6l0.77 -0.77h1.26l0.77 0.77v1.26l-0.77 0.77h-1.26l-0.77 -0.77zM296.4 237.7l0.77 -0.77h1.26l0.77 0.77v1.26l-0.77 0.77h-1.26l-0.77 -0.77zM297.1 223.1l0.77 -0.77h1.26l0.77 0.77v1.26l-0.77 0.77h-1.26l-0.77 -0.77zM297.7 242.9l0.77 -0.77h1.26l0.77 0.77v1.26l-0.77 0.77h-1.26l-0.77 -0.77zM298.4 240.2l0.77 -0.77h1.26l0.77 0.77v1.26l-0.77 0.77h-1.26l-0.77 -0.77zM299.0 232.5l0.77 -0.77h1.26l0.77 0.77v1.26l-0.77 0.77h-1.26l-0.77 -0.77zM299.6 237.7l0.77 -0.77h1.26l0.77 0.77v1.26l-0.77 0.77h-1.26l-0.77 -0.77zM300.2 241.1l0.77 -0.77h1.26l0.77 0.77v1.26l-0.77 0.77h-1.26l-0.77 -0.77zM300.9 241.4l0.77 -0.77h1.26l0.77 0.77v1.26l-0.77 0.77h-1.26l-0.77 -0.77zM301.6 240.6l0.77 -0.77h1.26l0.77 0.77v1.26l-0.77 0.77h-1.26l-0.77 -0.77zM302.4 237.2l0.77 -0.77h1.26l0.77 0.77v1.26l-0.77 0.77h-1.26l-0.77 -0.77zM303.1 246.6l0.77 -0.77h1.26l0.77 0.77v1.26l-0.77 0.77h-1.26l-0.77 -0.77zM303.7 250.9l0.77 -0.77h1.26l0.77 0.77v1.26l-0.77 0.77h-1.26l-0.77 -0.77zM304.5 228.2l0.77 -0.77h1.26l0.77 0.77v1.26l-0.77 0.77h-1.26l-0.77 -0.77zM305.2 237.5l0.77 -0.77h1.26l0.77 0.77v1.26l-0.77 0.77h-1.26l-0.77 -0.77zM305.7 251.3l0.77 -0.77h1.26l0.77 0.77v1.26l-0.77 0.77h-1.26l-0.77 -0.77zM306.5 253.1l0.77 -0.77h1.26l0.77 0.77v1.26l-0.77 0.77h-1.26l-0.77 -0.77zM307.1 254.7l0.77 -0.77h1.26l0.77 0.77v1.26l-0.77 0.77h-1.26l-0.77 -0.77zM307.8 244.3l0.77 -0.77h1.26l0.77 0.77v1.26l-0.77 0.77h-1.26l-0.77 -0.77zM308.5 239.9l0.77 -0.77h1.26l0.77 0.77v1.26l-0.77 0.77h-1.26l-0.77 -0.77zM309.2 260.9l0.77 -0.77h1.26l0.77 0.77v1.26l-0.77 0.77h-1.26l-0.77 -0.77zM309.8 253.2l0.77 -0.77h1.26l0.77 0.77v1.26l-0.77 0.77h-1.26l-0.77 -0.77zM310.4 258.3l0.77 -0.77h1.26l0.77 0.77v1.26l-0.77 0.77h-1.26l-0.77 -0.77zM311.1 245.9l0.77 -0.77h1.26l0.77 0.77v1.26l-0.77 0.77h-1.26l-0.77 -0.77zM311.7 254.6l0.77 -0.77h1.26l0.77 0.77v1.26l-0.77 0.77h-1.26l-0.77 -0.77zM312.3 251.4l0.77 -0.77h1.26l0.77 0.77v1.26l-0.77 0.77h-1.26l-0.77 -0.77zM312.9 261.8l0.77 -0.77h1.26l0.77 0.77v1.26l-0.77 0.77h-1.26l-0.77 -0.77zM313.6 258.8l0.77 -0.77h1.26l0.77 0.77v1.26l-0.77 0.77h-1.26l-0.77 -0.77zM314.3 255.4l0.77 -0.77h1.26l0.77 0.77v1.26l-0.77 0.77h-1.26l-0.77 -0.77zM314.9 247.7l0.77 -0.77h1.26l0.77 0.77v1.26l-0.77 0.77h-1.26l-0.77 -0.77zM315.6 247.4l0.77 -0.77h1.26l0.77 0.77v1.26l-0.77 0.77h-1.26l-0.77 -0.77zM316.3 259.5l0.77 -0.77h1.26l0.77 0.77v1.26l-0.77 0.77h-1.26l-0.77 -0.77zM317.1 250.8l0.77 -0.77h1.26l0.77 0.77v1.26l-0.77 0.77h-1.26l-0.77 -0.77zM317.7 244.4l0.77 -0.77h1.26l0.77 0.77v1.26l-0.77 0.77h-1.26l-0.77 -0.77zM318.4 257.4l0.77 -0.77h1.26l0.77 0.77v1.26l-0.77 0.77h-1.26l-0.77 -0.77zM319.0 251.8l0.77 -0.77h1.26l0.77 0.77v1.26l-0.77 0.77h-1.26l-0.77 -0.77zM319.6 256.0l0.77 -0.77h1.26l0.77 0.77v1.26l-0.77 0.77h-1.26l-0.77 -0.77zM320.2 262.6l0.77 -0.77h1.26l0.77 0.77v1.26l-0.77 0.77h-1.26l-0.77 -0.77zM320.9 268.9l0.77 -0.77h1.26l0.77 0.77v1.26l-0.77 0.77h-1.26l-0.77 -0.77zM321.6 264.5l0.77 -0.77h1.26l0.77 0.77v1.26l-0.77 0.77h-1.26l-0.77 -0.77zM322.2 262.5l0.77 -0.77h1.26l0.77 0.77v1.26l-0.77 0.77h-1.26l-0.77 -0.77zM322.9 261.4l0.77 -0.77h1.26l0.77 0.77v1.26l-0.77 0.77h-1.26l-0.77 -0.77zM323.7 265.8l0.77 -0.77h1.26l0.77 0.77v1.26l-0.77 0.77h-1.26l-0.77 -0.77zM324.3 253.5l0.77 -0.77h1.26l0.77 0.77v1.26l-0.77 0.77h-1.26l-0.77 -0.77zM324.9 263.5l0.77 -0.77h1.26l0.77 0.77v1.26l-0.77 0.77h-1.26l-0.77 -0.77zM325.5 266.5l0.77 -0.77h1.26l0.77 0.77v1.26l-0.77 0.77h-1.26l-0.77 -0.77zM326.2 265.2l0.77 -0.77h1.26l0.77 0.77v1.26l-0.77 0.77h-1.26l-0.77 -0.77zM326.8 261.2l0.77 -0.77h1.26l0.77 0.77v1.26l-0.77 0.77h-1.26l-0.77 -0.77zM327.5 272.3l0.77 -0.77h1.26l0.77 0.77v1.26l-0.77 0.77h-1.26l-0.77 -0.77zM328.3 270.9l0.77 -0.77h1.26l0.77 0.77v1.26l-0.77 0.77h-1.26l-0.77 -0.77zM328.8 274.0l0.77 -0.77h1.26l0.77 0.77v1.26l-0.77 0.77h-1.26l-0.77 -0.77zM329.5 268.1l0.77 -0.77h1.26l0.77 0.77v1.26l-0.77 0.77h-1.26l-0.77 -0.77zM330.2 260.3l0.77 -0.77h1.26l0.77 0.77v1.26l-0.77 0.77h-1.26l-0.77 -0.77zM330.9 256.5l0.77 -0.77h1.26l0.77 0.77v1.26l-0.77 0.77h-1.26l-0.77 -0.77zM331.7 274.7l0.77 -0.77h1.26l0.77 0.77v1.26l-0.77 0.77h-1.26l-0.77 -0.77zM332.3 264.4l0.77 -0.77h1.26l0.77 0.77v1.26l-0.77 0.77h-1.26l-0.77 -0.77zM333.0 261.6l0.77 -0.77h1.26l0.77 0.77v1.26l-0.77 0.77h-1.26l-0.77 -0.77zM333.6 278.7l0.77 -0.77h1.26l0.77 0.77v1.26l-0.77 0.77h-1.26l-0.77 -0.77zM334.2 262.0l0.77 -0.77h1.26l0.77 0.77v1.26l-0.77 0.77h-1.26l-0.77 -0.77zM334.8 270.7l0.77 -0.77h1.26l0.77 0.77v1.26l-0.77 0.77h-1.26l-0.77 -0.77zM335.5 270.6l0.77 -0.77h1.26l0.77 0.77v1.26l-0.77 0.77h-1.26l-0.77 -0.77z" fill="#4C72B0"/><path d="M0.0 6.9 L336.0 273.0" stroke="#DD8452" stroke-width="1.2"/><path d="M0.5 0V275.5H336" fill="none" stroke="rgb(90,91,92)" stroke-width="1"/><path d="M25.5 275v-5 M61.5 275v-5 M97.5 275v-5 M133.5 275v-5 M169.5 275v-10 M205.5 275v-5 M241.5 275v-5 M277.5 275v-5 M313.5 275v-5 M0 242.5h5 M0 208.5h5 M0 174.5h5 M0 140.5h10 M0 107.5h5 M0 73.5h5 M0 39.5h5 M0 5.5h5" stroke="rgb(90,91,92)" stroke-width="1"/></svg>
<div class="t" style="left:770.513745244092px;width:600px;text-align:center;top:799px;">-8</div>
<div class="t" style="left:806.5246771341299px;width:600px;text-align:center;top:799px;">-6</div>
<div class="t" style="left:842.535609024168px;width:600px;text-align:center;top:799px;">-4</div>
<div class="t" style="left:878.5465409142062px;width:600px;text-align:center;top:799px;">-2</div>
<div class="t" style="left:914.5574728042441px;width:600px;text-align:center;top:799px;">0</div>
<div class="t" style="left:950.5684046942822px;width:600px;text-align:center;top:799px;">2</div>
<div class="t" style="left:986.5793365843201px;width:600px;text-align:center;top:799px;">4</div>
<div class="t" style="left:1022.5902684743583px;width:600px;text-align:center;top:799px;">6</div>
<div class="t" style="left:1058.6012003643964px;width:600px;text-align:center;top:799px;">8</div>
<div class="t" style="left:738px;width:300px;text-align:right;top:753px;">-60</div>
<div class="t" style="left:738px;width:300px;text-align:right;top:720px;">-40</div>
<div class="t" style="left:738px;width:300px;text-align:right;top:686px;">-20</div>
<div class="t" style="left:738px;width:300px;text-align:right;top:652px;">0</div>
<div class="t" style="left:738px;width:300px;text-align:right;top:618px;">20</div>
<div class="t" style="left:738px;width:300px;text-align:right;top:584px;">40</div>
<div class="t" style="left:738px;width:300px;text-align:right;top:551px;">60</div>
<div class="t" style="left:738px;width:300px;text-align:right;top:517px;">80</div>
<div class="t" style="left:699px;top:646.5px;width:600px;text-align:center;transform:rotate(-90deg);">Velocity-Portion Accel (m/s&#178;)</div>
<div class="r" style="left:1223px;top:527px;width:147px;height:46px;background:rgba(28,28,36,0.92);border:1px solid rgb(77,77,81);"></div>
<div class="r" style="left:1230px;top:534px;width:15px;height:15px;background:#4C72B0;"></div>
<div class="t" style="left:1247px;top:535px;">Filtered Data</div>
<div class="r" style="left:1230px;top:553px;width:15px;height:15px;background:#DD8452;"></div>
<div class="t" style="left:1247px;top:554px;">Fit</div>
<div class="r" style="left:1399px;top:483px;width:413px;height:366px;background:rgb(53,56,57);"></div>
<div class="r" style="left:1457px;top:517px;width:345px;height:275px;background:rgb(8,8,9);"></div>
<div class="t" style="left:1329.5px;width:600px;text-align:center;top:496px;">Timesteps vs. Time</div>
<div class="t" style="left:1329.5px;width:600px;text-align:center;top:823px;">Time (s)</div>
<svg class="r" style="left:1457px;top:517px;overflow:hidden" width="345" height="276"><path d="M0 165.0 H345.7" stroke="#DD8452" stroke-width="1.3"/><path d="M-0.7 165.2l0.77 -0.77h1.26l0.77 0.77v1.26l-0.77 0.77h-1.26l-0.77 -0.77zM-0.4 162.9l0.77 -0.77h1.26l0.77 0.77v1.26l-0.77 0.77h-1.26l-0.77 -0.77zM-0.2 163.7l0.77 -0.77h1.26l0.77 0.77v1.26l-0.77 0.77h-1.26l-0.77 -0.77zM-0.0 163.2l0.77 -0.77h1.26l0.77 0.77v1.26l-0.77 0.77h-1.26l-0.77 -0.77zM0.2 164.2l0.77 -0.77h1.26l0.77 0.77v1.26l-0.77 0.77h-1.26l-0.77 -0.77zM0.4 166.1l0.77 -0.77h1.26l0.77 0.77v1.26l-0.77 0.77h-1.26l-0.77 -0.77zM0.6 162.8l0.77 -0.77h1.26l0.77 0.77v1.26l-0.77 0.77h-1.26l-0.77 -0.77zM0.8 164.5l0.77 -0.77h1.26l0.77 0.77v1.26l-0.77 0.77h-1.26l-0.77 -0.77zM1.0 163.8l0.77 -0.77h1.26l0.77 0.77v1.26l-0.77 0.77h-1.26l-0.77 -0.77zM1.3 163.7l0.77 -0.77h1.26l0.77 0.77v1.26l-0.77 0.77h-1.26l-0.77 -0.77zM1.5 163.8l0.77 -0.77h1.26l0.77 0.77v1.26l-0.77 0.77h-1.26l-0.77 -0.77zM1.7 162.9l0.77 -0.77h1.26l0.77 0.77v1.26l-0.77 0.77h-1.26l-0.77 -0.77zM1.9 162.8l0.77 -0.77h1.26l0.77 0.77v1.26l-0.77 0.77h-1.26l-0.77 -0.77zM2.1 164.4l0.77 -0.77h1.26l0.77 0.77v1.26l-0.77 0.77h-1.26l-0.77 -0.77zM2.3 163.2l0.77 -0.77h1.26l0.77 0.77v1.26l-0.77 0.77h-1.26l-0.77 -0.77zM2.5 164.5l0.77 -0.77h1.26l0.77 0.77v1.26l-0.77 0.77h-1.26l-0.77 -0.77zM2.8 164.9l0.77 -0.77h1.26l0.77 0.77v1.26l-0.77 0.77h-1.26l-0.77 -0.77zM3.0 159.3l0.77 -0.77h1.26l0.77 0.77v1.26l-0.77 0.77h-1.26l-0.77 -0.77zM3.2 165.0l0.77 -0.77h1.26l0.77 0.77v1.26l-0.77 0.77h-1.26l-0.77 -0.77zM3.4 163.1l0.77 -0.77h1.26l0.77 0.77v1.26l-0.77 0.77h-1.26l-0.77 -0.77zM3.6 164.9l0.77 -0.77h1.26l0.77 0.77v1.26l-0.77 0.77h-1.26l-0.77 -0.77zM3.8 164.2l0.77 -0.77h1.26l0.77 0.77v1.26l-0.77 0.77h-1.26l-0.77 -0.77zM4.0 164.2l0.77 -0.77h1.26l0.77 0.77v1.26l-0.77 0.77h-1.26l-0.77 -0.77zM4.2 164.5l0.77 -0.77h1.26l0.77 0.77v1.26l-0.77 0.77h-1.26l-0.77 -0.77zM4.5 163.8l0.77 -0.77h1.26l0.77 0.77v1.26l-0.77 0.77h-1.26l-0.77 -0.77zM4.7 163.9l0.77 -0.77h1.26l0.77 0.77v1.26l-0.77 0.77h-1.26l-0.77 -0.77zM4.9 164.6l0.77 -0.77h1.26l0.77 0.77v1.26l-0.77 0.77h-1.26l-0.77 -0.77zM5.1 164.4l0.77 -0.77h1.26l0.77 0.77v1.26l-0.77 0.77h-1.26l-0.77 -0.77zM5.3 165.2l0.77 -0.77h1.26l0.77 0.77v1.26l-0.77 0.77h-1.26l-0.77 -0.77zM5.5 164.8l0.77 -0.77h1.26l0.77 0.77v1.26l-0.77 0.77h-1.26l-0.77 -0.77zM5.7 163.6l0.77 -0.77h1.26l0.77 0.77v1.26l-0.77 0.77h-1.26l-0.77 -0.77zM5.9 166.5l0.77 -0.77h1.26l0.77 0.77v1.26l-0.77 0.77h-1.26l-0.77 -0.77zM6.2 165.6l0.77 -0.77h1.26l0.77 0.77v1.26l-0.77 0.77h-1.26l-0.77 -0.77zM6.4 164.9l0.77 -0.77h1.26l0.77 0.77v1.26l-0.77 0.77h-1.26l-0.77 -0.77zM6.6 162.5l0.77 -0.77h1.26l0.77 0.77v1.26l-0.77 0.77h-1.26l-0.77 -0.77zM6.8 165.6l0.77 -0.77h1.26l0.77 0.77v1.26l-0.77 0.77h-1.26l-0.77 -0.77zM7.0 163.9l0.77 -0.77h1.26l0.77 0.77v1.26l-0.77 0.77h-1.26l-0.77 -0.77zM7.2 163.7l0.77 -0.77h1.26l0.77 0.77v1.26l-0.77 0.77h-1.26l-0.77 -0.77zM7.4 164.6l0.77 -0.77h1.26l0.77 0.77v1.26l-0.77 0.77h-1.26l-0.77 -0.77zM7.7 164.9l0.77 -0.77h1.26l0.77 0.77v1.26l-0.77 0.77h-1.26l-0.77 -0.77zM7.9 164.1l0.77 -0.77h1.26l0.77 0.77v1.26l-0.77 0.77h-1.26l-0.77 -0.77zM8.1 164.2l0.77 -0.77h1.26l0.77 0.77v1.26l-0.77 0.77h-1.26l-0.77 -0.77zM8.3 164.4l0.77 -0.77h1.26l0.77 0.77v1.26l-0.77 0.77h-1.26l-0.77 -0.77zM8.5 164.4l0.77 -0.77h1.26l0.77 0.77v1.26l-0.77 0.77h-1.26l-0.77 -0.77zM8.7 164.1l0.77 -0.77h1.26l0.77 0.77v1.26l-0.77 0.77h-1.26l-0.77 -0.77zM8.9 165.3l0.77 -0.77h1.26l0.77 0.77v1.26l-0.77 0.77h-1.26l-0.77 -0.77zM9.1 165.3l0.77 -0.77h1.26l0.77 0.77v1.26l-0.77 0.77h-1.26l-0.77 -0.77zM9.4 164.5l0.77 -0.77h1.26l0.77 0.77v1.26l-0.77 0.77h-1.26l-0.77 -0.77zM9.6 165.2l0.77 -0.77h1.26l0.77 0.77v1.26l-0.77 0.77h-1.26l-0.77 -0.77zM9.8 165.9l0.77 -0.77h1.26l0.77 0.77v1.26l-0.77 0.77h-1.26l-0.77 -0.77zM10.0 164.7l0.77 -0.77h1.26l0.77 0.77v1.26l-0.77 0.77h-1.26l-0.77 -0.77zM10.2 163.4l0.77 -0.77h1.26l0.77 0.77v1.26l-0.77 0.77h-1.26l-0.77 -0.77zM10.4 164.2l0.77 -0.77h1.26l0.77 0.77v1.26l-0.77 0.77h-1.26l-0.77 -0.77zM10.6 164.0l0.77 -0.77h1.26l0.77 0.77v1.26l-0.77 0.77h-1.26l-0.77 -0.77zM10.8 162.4l0.77 -0.77h1.26l0.77 0.77v1.26l-0.77 0.77h-1.26l-0.77 -0.77zM11.1 164.7l0.77 -0.77h1.26l0.77 0.77v1.26l-0.77 0.77h-1.26l-0.77 -0.77zM11.3 163.1l0.77 -0.77h1.26l0.77 0.77v1.26l-0.77 0.77h-1.26l-0.77 -0.77zM11.5 167.0l0.77 -0.77h1.26l0.77 0.77v1.26l-0.77 0.77h-1.26l-0.77 -0.77zM11.7 165.5l0.77 -0.77h1.26l0.77 0.77v1.26l-0.77 0.77h-1.26l-0.77 -0.77zM11.9 166.5l0.77 -0.77h1.26l0.77 0.77v1.26l-0.77 0.77h-1.26l-0.77 -0.77zM12.1 165.4l0.77 -0.77h1.26l0.77 0.77v1.26l-0.77 0.77h-1.26l-0.77 -0.77zM12.3 164.6l0.77 -0.77h1.26l0.77 0.77v1.26l-0.77 0.77h-1.26l-0.77 -0.77zM12.5 161.4l0.77 -0.77h1.26l0.77 0.77v1.26l-0.77 0.77h-1.26l-0.77 -0.77zM12.8 163.1l0.77 -0.77h1.26l0.77 0.77v1.26l-0.77 0.77h-1.26l-0.77 -0.77zM13.0 163.2l0.77 -0.77h1.26l0.77 0.77v1.26l-0.77 0.77h-1.26l-0.77 -0.77zM13.2 163.7l0.77 -0.77h1.26l0.77 0.77v1.26l-0.77 0.77h-1.26l-0.77 -0.77zM13.4 165.4l0.77 -0.77h1.26l0.77 0.77v1.26l-0.77 0.77h-1.26l-0.77 -0.77zM13.6 163.8l0.77 -0.77h1.26l0.77 0.77v1.26l-0.77 0.77h-1.26l-0.77 -0.77zM13.8 163.9l0.77 -0.77h1.26l0.77 0.77v1.26l-0.77 0.77h-1.26l-0.77 -0.77zM14.0 164.0l0.77 -0.77h1.26l0.77 0.77v1.26l-0.77 0.77h-1.26l-0.77 -0.77zM14.3 163.0l0.77 -0.77h1.26l0.77 0.77v1.26l-0.77 0.77h-1.26l-0.77 -0.77zM14.5 163.2l0.77 -0.77h1.26l0.77 0.77v1.26l-0.77 0.77h-1.26l-0.77 -0.77zM14.7 165.1l0.77 -0.77h1.26l0.77 0.77v1.26l-0.77 0.77h-1.26l-0.77 -0.77zM14.9 164.5l0.77 -0.77h1.26l0.77 0.77v1.26l-0.77 0.77h-1.26l-0.77 -0.77zM15.1 164.2l0.77 -0.77h1.26l0.77 0.77v1.26l-0.77 0.77h-1.26l-0.77 -0.77zM15.3 163.2l0.77 -0.77h1.26l0.77 0.77v1.26l-0.77 0.77h-1.26l-0.77 -0.77zM15.5 164.7l0.77 -0.77h1.26l0.77 0.77v1.26l-0.77 0.77h-1.26l-0.77 -0.77zM15.7 164.6l0.77 -0.77h1.26l0.77 0.77v1.26l-0.77 0.77h-1.26l-0.77 -0.77zM16.0 166.1l0.77 -0.77h1.26l0.77 0.77v1.26l-0.77 0.77h-1.26l-0.77 -0.77zM16.2 163.7l0.77 -0.77h1.26l0.77 0.77v1.26l-0.77 0.77h-1.26l-0.77 -0.77zM16.4 164.4l0.77 -0.77h1.26l0.77 0.77v1.26l-0.77 0.77h-1.26l-0.77 -0.77zM16.6 164.8l0.77 -0.77h1.26l0.77 0.77v1.26l-0.77 0.77h-1.26l-0.77 -0.77zM16.8 163.0l0.77 -0.77h1.26l0.77 0.77v1.26l-0.77 0.77h-1.26l-0.77 -0.77zM17.0 163.3l0.77 -0.77h1.26l0.77 0.77v1.26l-0.77 0.77h-1.26l-0.77 -0.77zM17.2 163.2l0.77 -0.77h1.26l0.77 0.77v1.26l-0.77 0.77h-1.26l-0.77 -0.77zM17.4 164.7l0.77 -0.77h1.26l0.77 0.77v1.26l-0.77 0.77h-1.26l-0.77 -0.77zM17.7 164.3l0.77 -0.77h1.26l0.77 0.77v1.26l-0.77 0.77h-1.26l-0.77 -0.77zM17.9 164.7l0.77 -0.77h1.26l0.77 0.77v1.26l-0.77 0.77h-1.26l-0.77 -0.77zM18.1 163.1l0.77 -0.77h1.26l0.77 0.77v1.26l-0.77 0.77h-1.26l-0.77 -0.77zM18.3 164.3l0.77 -0.77h1.26l0.77 0.77v1.26l-0.77 0.77h-1.26l-0.77 -0.77zM18.5 164.6l0.77 -0.77h1.26l0.77 0.77v1.26l-0.77 0.77h-1.26l-0.77 -0.77zM18.7 165.3l0.77 -0.77h1.26l0.77 0.77v1.26l-0.77 0.77h-1.26l-0.77 -0.77zM18.9 163.5l0.77 -0.77h1.26l0.77 0.77v1.26l-0.77 0.77h-1.26l-0.77 -0.77zM19.2 165.2l0.77 -0.77h1.26l0.77 0.77v1.26l-0.77 0.77h-1.26l-0.77 -0.77zM19.4 163.6l0.77 -0.77h1.26l0.77 0.77v1.26l-0.77 0.77h-1.26l-0.77 -0.77zM19.6 163.0l0.77 -0.77h1.26l0.77 0.77v1.26l-0.77 0.77h-1.26l-0.77 -0.77zM19.8 165.1l0.77 -0.77h1.26l0.77 0.77v1.26l-0.77 0.77h-1.26l-0.77 -0.77zM20.0 166.0l0.77 -0.77h1.26l0.77 0.77v1.26l-0.77 0.77h-1.26l-0.77 -0.77zM20.2 164.6l0.77 -0.77h1.26l0.77 0.77v1.26l-0.77 0.77h-1.26l-0.77 -0.77zM20.4 168.0l0.77 -0.77h1.26l0.77 0.77v1.26l-0.77 0.77h-1.26l-0.77 -0.77zM20.6 164.6l0.77 -0.77h1.26l0.77 0.77v1.26l-0.77 0.77h-1.26l-0.77 -0.77zM20.9 164.2l0.77 -0.77h1.26l0.77 0.77v1.26l-0.77 0.77h-1.26l-0.77 -0.77zM21.1 164.8l0.77 -0.77h1.26l0.77 0.77v1.26l-0.77 0.77h-1.26l-0.77 -0.77zM21.3 164.4l0.77 -0.77h1.26l0.77 0.77v1.26l-0.77 0.77h-1.26l-0.77 -0.77zM21.5 163.8l0.77 -0.77h1.26l0.77 0.77v1.26l-0.77 0.77h-1.26l-0.77 -0.77zM21.7 165.7l0.77 -0.77h1.26l0.77 0.77v1.26l-0.77 0.77h-1.26l-0.77 -0.77zM21.9 163.1l0.77 -0.77h1.26l0.77 0.77v1.26l-0.77 0.77h-1.26l-0.77 -0.77zM22.1 163.3l0.77 -0.77h1.26l0.77 0.77v1.26l-0.77 0.77h-1.26l-0.77 -0.77zM22.3 164.7l0.77 -0.77h1.26l0.77 0.77v1.26l-0.77 0.77h-1.26l-0.77 -0.77zM22.6 163.0l0.77 -0.77h1.26l0.77 0.77v1.26l-0.77 0.77h-1.26l-0.77 -0.77zM22.8 163.5l0.77 -0.77h1.26l0.77 0.77v1.26l-0.77 0.77h-1.26l-0.77 -0.77zM23.0 165.2l0.77 -0.77h1.26l0.77 0.77v1.26l-0.77 0.77h-1.26l-0.77 -0.77zM23.2 164.2l0.77 -0.77h1.26l0.77 0.77v1.26l-0.77 0.77h-1.26l-0.77 -0.77zM23.4 164.4l0.77 -0.77h1.26l0.77 0.77v1.26l-0.77 0.77h-1.26l-0.77 -0.77zM23.6 166.3l0.77 -0.77h1.26l0.77 0.77v1.26l-0.77 0.77h-1.26l-0.77 -0.77zM23.8 161.5l0.77 -0.77h1.26l0.77 0.77v1.26l-0.77 0.77h-1.26l-0.77 -0.77zM24.0 162.8l0.77 -0.77h1.26l0.77 0.77v1.26l-0.77 0.77h-1.26l-0.77 -0.77zM24.3 165.2l0.77 -0.77h1.26l0.77 0.77v1.26l-0.77 0.77h-1.26l-0.77 -0.77zM24.5 163.7l0.77 -0.77h1.26l0.77 0.77v1.26l-0.77 0.77h-1.26l-0.77 -0.77zM24.7 165.9l0.77 -0.77h1.26l0.77 0.77v1.26l-0.77 0.77h-1.26l-0.77 -0.77zM24.9 163.2l0.77 -0.77h1.26l0.77 0.77v1.26l-0.77 0.77h-1.26l-0.77 -0.77zM25.1 164.7l0.77 -0.77h1.26l0.77 0.77v1.26l-0.77 0.77h-1.26l-0.77 -0.77zM25.3 163.8l0.77 -0.77h1.26l0.77 0.77v1.26l-0.77 0.77h-1.26l-0.77 -0.77zM25.5 163.8l0.77 -0.77h1.26l0.77 0.77v1.26l-0.77 0.77h-1.26l-0.77 -0.77zM25.8 164.2l0.77 -0.77h1.26l0.77 0.77v1.26l-0.77 0.77h-1.26l-0.77 -0.77zM26.0 165.2l0.77 -0.77h1.26l0.77 0.77v1.26l-0.77 0.77h-1.26l-0.77 -0.77zM26.2 167.9l0.77 -0.77h1.26l0.77 0.77v1.26l-0.77 0.77h-1.26l-0.77 -0.77zM26.4 175.7l0.77 -0.77h1.26l0.77 0.77v1.26l-0.77 0.77h-1.26l-0.77 -0.77zM26.6 160.2l0.77 -0.77h1.26l0.77 0.77v1.26l-0.77 0.77h-1.26l-0.77 -0.77zM26.8 163.3l0.77 -0.77h1.26l0.77 0.77v1.26l-0.77 0.77h-1.26l-0.77 -0.77zM27.0 164.5l0.77 -0.77h1.26l0.77 0.77v1.26l-0.77 0.77h-1.26l-0.77 -0.77zM27.2 163.3l0.77 -0.77h1.26l0.77 0.77v1.26l-0.77 0.77h-1.26l-0.77 -0.77zM27.5 166.7l0.77 -0.77h1.26l0.77 0.77v1.26l-0.77 0.77h-1.26l-0.77 -0.77zM27.7 170.9l0.77 -0.77h1.26l0.77 0.77v1.26l-0.77 0.77h-1.26l-0.77 -0.77zM27.9 165.0l0.77 -0.77h1.26l0.77 0.77v1.26l-0.77 0.77h-1.26l-0.77 -0.77zM28.1 164.2l0.77 -0.77h1.26l0.77 0.77v1.26l-0.77 0.77h-1.26l-0.77 -0.77zM28.3 165.7l0.77 -0.77h1.26l0.77 0.77v1.26l-0.77 0.77h-1.26l-0.77 -0.77zM28.5 164.7l0.77 -0.77h1.26l0.77 0.77v1.26l-0.77 0.77h-1.26l-0.77 -0.77zM28.7 162.7l0.77 -0.77h1.26l0.77 0.77v1.26l-0.77 0.77h-1.26l-0.77 -0.77zM28.9 164.7l0.77 -0.77h1.26l0.77 0.77v1.26l-0.77 0.77h-1.26l-0.77 -0.77zM29.2 165.1l0.77 -0.77h1.26l0.77 0.77v1.26l-0.77 0.77h-1.26l-0.77 -0.77zM29.4 165.7l0.77 -0.77h1.26l0.77 0.77v1.26l-0.77 0.77h-1.26l-0.77 -0.77zM29.6 164.4l0.77 -0.77h1.26l0.77 0.77v1.26l-0.77 0.77h-1.26l-0.77 -0.77zM29.8 164.6l0.77 -0.77h1.26l0.77 0.77v1.26l-0.77 0.77h-1.26l-0.77 -0.77zM30.0 164.2l0.77 -0.77h1.26l0.77 0.77v1.26l-0.77 0.77h-1.26l-0.77 -0.77zM30.2 163.3l0.77 -0.77h1.26l0.77 0.77v1.26l-0.77 0.77h-1.26l-0.77 -0.77zM30.4 164.4l0.77 -0.77h1.26l0.77 0.77v1.26l-0.77 0.77h-1.26l-0.77 -0.77zM30.7 164.3l0.77 -0.77h1.26l0.77 0.77v1.26l-0.77 0.77h-1.26l-0.77 -0.77zM30.9 160.6l0.77 -0.77h1.26l0.77 0.77v1.26l-0.77 0.77h-1.26l-0.77 -0.77zM31.1 165.1l0.77 -0.77h1.26l0.77 0.77v1.26l-0.77 0.77h-1.26l-0.77 -0.77zM31.3 165.1l0.77 -0.77h1.26l0.77 0.77v1.26l-0.77 0.77h-1.26l-0.77 -0.77zM31.5 165.8l0.77 -0.77h1.26l0.77 0.77v1.26l-0.77 0.77h-1.26l-0.77 -0.77zM31.7 163.6l0.77 -0.77h1.26l0.77 0.77v1.26l-0.77 0.77h-1.26l-0.77 -0.77zM31.9 166.5l0.77 -0.77h1.26l0.77 0.77v1.26l-0.77 0.77h-1.26l-0.77 -0.77zM32.1 165.1l0.77 -0.77h1.26l0.77 0.77v1.26l-0.77 0.77h-1.26l-0.77 -0.77zM32.4 164.7l0.77 -0.77h1.26l0.77 0.77v1.26l-0.77 0.77h-1.26l-0.77 -0.77zM32.6 164.6l0.77 -0.77h1.26l0.77 0.77v1.26l-0.77 0.77h-1.26l-0.77 -0.77zM32.8 163.5l0.77 -0.77h1.26l0.77 0.77v1.26l-0.77 0.77h-1.26l-0.77 -0.77zM33.0 164.4l0.77 -0.77h1.26l0.77 0.77v1.26l-0.77 0.77h-1.26l-0.77 -0.77zM33.2 164.1l0.77 -0.77h1.26l0.77 0.77v1.26l-0.77 0.77h-1.26l-0.77 -0.77zM33.4 164.6l0.77 -0.77h1.26l0.77 0.77v1.26l-0.77 0.77h-1.26l-0.77 -0.77zM33.6 161.6l0.77 -0.77h1.26l0.77 0.77v1.26l-0.77 0.77h-1.26l-0.77 -0.77zM33.8 164.0l0.77 -0.77h1.26l0.77 0.77v1.26l-0.77 0.77h-1.26l-0.77 -0.77zM34.1 163.7l0.77 -0.77h1.26l0.77 0.77v1.26l-0.77 0.77h-1.26l-0.77 -0.77zM34.3 164.9l0.77 -0.77h1.26l0.77 0.77v1.26l-0.77 0.77h-1.26l-0.77 -0.77zM34.5 164.0l0.77 -0.77h1.26l0.77 0.77v1.26l-0.77 0.77h-1.26l-0.77 -0.77zM34.7 164.7l0.77 -0.77h1.26l0.77 0.77v1.26l-0.77 0.77h-1.26l-0.77 -0.77zM34.9 164.9l0.77 -0.77h1.26l0.77 0.77v1.26l-0.77 0.77h-1.26l-0.77 -0.77zM35.1 164.7l0.77 -0.77h1.26l0.77 0.77v1.26l-0.77 0.77h-1.26l-0.77 -0.77zM35.3 164.6l0.77 -0.77h1.26l0.77 0.77v1.26l-0.77 0.77h-1.26l-0.77 -0.77zM35.5 164.6l0.77 -0.77h1.26l0.77 0.77v1.26l-0.77 0.77h-1.26l-0.77 -0.77zM35.8 163.9l0.77 -0.77h1.26l0.77 0.77v1.26l-0.77 0.77h-1.26l-0.77 -0.77zM36.0 163.4l0.77 -0.77h1.26l0.77 0.77v1.26l-0.77 0.77h-1.26l-0.77 -0.77zM36.2 165.3l0.77 -0.77h1.26l0.77 0.77v1.26l-0.77 0.77h-1.26l-0.77 -0.77zM36.4 165.1l0.77 -0.77h1.26l0.77 0.77v1.26l-0.77 0.77h-1.26l-0.77 -0.77zM36.6 163.0l0.77 -0.77h1.26l0.77 0.77v1.26l-0.77 0.77h-1.26l-0.77 -0.77zM36.8 167.9l0.77 -0.77h1.26l0.77 0.77v1.26l-0.77 0.77h-1.26l-0.77 -0.77zM37.0 164.6l0.77 -0.77h1.26l0.77 0.77v1.26l-0.77 0.77h-1.26l-0.77 -0.77zM37.3 164.2l0.77 -0.77h1.26l0.77 0.77v1.26l-0.77 0.77h-1.26l-0.77 -0.77zM37.5 165.6l0.77 -0.77h1.26l0.77 0.77v1.26l-0.77 0.77h-1.26l-0.77 -0.77zM37.7 164.3l0.77 -0.77h1.26l0.77 0.77v1.26l-0.77 0.77h-1.26l-0.77 -0.77zM37.9 162.2l0.77 -0.77h1.26l0.77 0.77v1.26l-0.77 0.77h-1.26l-0.77 -0.77zM38.1 164.2l0.77 -0.77h1.26l0.77 0.77v1.26l-0.77 0.77h-1.26l-0.77 -0.77zM38.3 163.2l0.77 -0.77h1.26l0.77 0.77v1.26l-0.77 0.77h-1.26l-0.77 -0.77zM38.5 163.9l0.77 -0.77h1.26l0.77 0.77v1.26l-0.77 0.77h-1.26l-0.77 -0.77zM38.7 163.9l0.77 -0.77h1.26l0.77 0.77v1.26l-0.77 0.77h-1.26l-0.77 -0.77zM39.0 164.1l0.77 -0.77h1.26l0.77 0.77v1.26l-0.77 0.77h-1.26l-0.77 -0.77zM39.2 162.9l0.77 -0.77h1.26l0.77 0.77v1.26l-0.77 0.77h-1.26l-0.77 -0.77zM39.4 163.5l0.77 -0.77h1.26l0.77 0.77v1.26l-0.77 0.77h-1.26l-0.77 -0.77zM39.6 165.4l0.77 -0.77h1.26l0.77 0.77v1.26l-0.77 0.77h-1.26l-0.77 -0.77zM39.8 165.0l0.77 -0.77h1.26l0.77 0.77v1.26l-0.77 0.77h-1.26l-0.77 -0.77zM40.0 165.1l0.77 -0.77h1.26l0.77 0.77v1.26l-0.77 0.77h-1.26l-0.77 -0.77zM40.2 163.0l0.77 -0.77h1.26l0.77 0.77v1.26l-0.77 0.77h-1.26l-0.77 -0.77zM40.4 164.2l0.77 -0.77h1.26l0.77 0.77v1.26l-0.77 0.77h-1.26l-0.77 -0.77zM40.7 166.0l0.77 -0.77h1.26l0.77 0.77v1.26l-0.77 0.77h-1.26l-0.77 -0.77zM40.9 163.4l0.77 -0.77h1.26l0.77 0.77v1.26l-0.77 0.77h-1.26l-0.77 -0.77zM41.1 164.5l0.77 -0.77h1.26l0.77 0.77v1.26l-0.77 0.77h-1.26l-0.77 -0.77zM41.3 164.6l0.77 -0.77h1.26l0.77 0.77v1.26l-0.77 0.77h-1.26l-0.77 -0.77zM41.5 165.7l0.77 -0.77h1.26l0.77 0.77v1.26l-0.77 0.77h-1.26l-0.77 -0.77zM41.7 164.2l0.77 -0.77h1.26l0.77 0.77v1.26l-0.77 0.77h-1.26l-0.77 -0.77zM41.9 163.7l0.77 -0.77h1.26l0.77 0.77v1.26l-0.77 0.77h-1.26l-0.77 -0.77zM42.2 164.4l0.77 -0.77h1.26l0.77 0.77v1.26l-0.77 0.77h-1.26l-0.77 -0.77zM42.4 163.5l0.77 -0.77h1.26l0.77 0.77v1.26l-0.77 0.77h-1.26l-0.77 -0.77zM42.6 165.6l0.77 -0.77h1.26l0.77 0.77v1.26l-0.77 0.77h-1.26l-0.77 -0.77zM42.8 164.4l0.77 -0.77h1.26l0.77 0.77v1.26l-0.77 0.77h-1.26l-0.77 -0.77zM43.0 164.7l0.77 -0.77h1.26l0.77 0.77v1.26l-0.77 0.77h-1.26l-0.77 -0.77zM43.2 164.0l0.77 -0.77h1.26l0.77 0.77v1.26l-0.77 0.77h-1.26l-0.77 -0.77zM43.4 165.0l0.77 -0.77h1.26l0.77 0.77v1.26l-0.77 0.77h-1.26l-0.77 -0.77zM43.6 164.2l0.77 -0.77h1.26l0.77 0.77v1.26l-0.77 0.77h-1.26l-0.77 -0.77zM43.9 165.1l0.77 -0.77h1.26l0.77 0.77v1.26l-0.77 0.77h-1.26l-0.77 -0.77zM44.1 164.9l0.77 -0.77h1.26l0.77 0.77v1.26l-0.77 0.77h-1.26l-0.77 -0.77zM44.3 165.0l0.77 -0.77h1.26l0.77 0.77v1.26l-0.77 0.77h-1.26l-0.77 -0.77zM44.5 165.3l0.77 -0.77h1.26l0.77 0.77v1.26l-0.77 0.77h-1.26l-0.77 -0.77zM44.7 162.6l0.77 -0.77h1.26l0.77 0.77v1.26l-0.77 0.77h-1.26l-0.77 -0.77zM44.9 163.1l0.77 -0.77h1.26l0.77 0.77v1.26l-0.77 0.77h-1.26l-0.77 -0.77zM45.1 163.8l0.77 -0.77h1.26l0.77 0.77v1.26l-0.77 0.77h-1.26l-0.77 -0.77zM45.3 163.2l0.77 -0.77h1.26l0.77 0.77v1.26l-0.77 0.77h-1.26l-0.77 -0.77zM45.6 163.9l0.77 -0.77h1.26l0.77 0.77v1.26l-0.77 0.77h-1.26l-0.77 -0.77zM45.8 163.1l0.77 -0.77h1.26l0.77 0.77v1.26l-0.77 0.77h-1.26l-0.77 -0.77zM46.0 164.8l0.77 -0.77h1.26l0.77 0.77v1.26l-0.77 0.77h-1.26l-0.77 -0.77zM46.2 164.4l0.77 -0.77h1.26l0.77 0.77v1.26l-0.77 0.77h-1.26l-0.77 -0.77zM46.4 163.4l0.77 -0.77h1.26l0.77 0.77v1.26l-0.77 0.77h-1.26l-0.77 -0.77zM46.6 164.3l0.77 -0.77h1.26l0.77 0.77v1.26l-0.77 0.77h-1.26l-0.77 -0.77zM46.8 165.7l0.77 -0.77h1.26l0.77 0.77v1.26l-0.77 0.77h-1.26l-0.77 -0.77zM47.0 164.1l0.77 -0.77h1.26l0.77 0.77v1.26l-0.77 0.77h-1.26l-0.77 -0.77zM47.3 163.2l0.77 -0.77h1.26l0.77 0.77v1.26l-0.77 0.77h-1.26l-0.77 -0.77zM47.5 163.9l0.77 -0.77h1.26l0.77 0.77v1.26l-0.77 0.77h-1.26l-0.77 -0.77zM47.7 164.9l0.77 -0.77h1.26l0.77 0.77v1.26l-0.77 0.77h-1.26l-0.77 -0.77zM102.1 164.5l0.77 -0.77h1.26l0.77 0.77v1.26l-0.77 0.77h-1.26l-0.77 -0.77zM102.3 163.5l0.77 -0.77h1.26l0.77 0.77v1.26l-0.77 0.77h-1.26l-0.77 -0.77zM102.5 163.6l0.77 -0.77h1.26l0.77 0.77v1.26l-0.77 0.77h-1.26l-0.77 -0.77zM102.7 163.2l0.77 -0.77h1.26l0.77 0.77v1.26l-0.77 0.77h-1.26l-0.77 -0.77zM103.0 166.1l0.77 -0.77h1.26l0.77 0.77v1.26l-0.77 0.77h-1.26l-0.77 -0.77zM103.2 165.3l0.77 -0.77h1.26l0.77 0.77v1.26l-0.77 0.77h-1.26l-0.77 -0.77zM103.4 165.4l0.77 -0.77h1.26l0.77 0.77v1.26l-0.77 0.77h-1.26l-0.77 -0.77zM103.6 163.1l0.77 -0.77h1.26l0.77 0.77v1.26l-0.77 0.77h-1.26l-0.77 -0.77zM103.8 162.4l0.77 -0.77h1.26l0.77 0.77v1.26l-0.77 0.77h-1.26l-0.77 -0.77zM104.0 158.7l0.77 -0.77h1.26l0.77 0.77v1.26l-0.77 0.77h-1.26l-0.77 -0.77zM104.2 160.9l0.77 -0.77h1.26l0.77 0.77v1.26l-0.77 0.77h-1.26l-0.77 -0.77zM104.4 164.7l0.77 -0.77h1.26l0.77 0.77v1.26l-0.77 0.77h-1.26l-0.77 -0.77zM104.7 163.9l0.77 -0.77h1.26l0.77 0.77v1.26l-0.77 0.77h-1.26l-0.77 -0.77zM104.9 164.0l0.77 -0.77h1.26l0.77 0.77v1.26l-0.77 0.77h-1.26l-0.77 -0.77zM105.1 165.5l0.77 -0.77h1.26l0.77 0.77v1.26l-0.77 0.77h-1.26l-0.77 -0.77zM105.3 162.6l0.77 -0.77h1.26l0.77 0.77v1.26l-0.77 0.77h-1.26l-0.77 -0.77zM105.5 164.1l0.77 -0.77h1.26l0.77 0.77v1.26l-0.77 0.77h-1.26l-0.77 -0.77zM105.7 164.4l0.77 -0.77h1.26l0.77 0.77v1.26l-0.77 0.77h-1.26l-0.77 -0.77zM105.9 164.5l0.77 -0.77h1.26l0.77 0.77v1.26l-0.77 0.77h-1.26l-0.77 -0.77zM106.1 164.6l0.77 -0.77h1.26l0.77 0.77v1.26l-0.77 0.77h-1.26l-0.77 -0.77zM106.4 164.0l0.77 -0.77h1.26l0.77 0.77v1.26l-0.77 0.77h-1.26l-0.77 -0.77zM106.6 163.6l0.77 -0.77h1.26l0.77 0.77v1.26l-0.77 0.77h-1.26l-0.77 -0.77zM106.8 164.4l0.77 -0.77h1.26l0.77 0.77v1.26l-0.77 0.77h-1.26l-0.77 -0.77zM107.0 164.9l0.77 -0.77h1.26l0.77 0.77v1.26l-0.77 0.77h-1.26l-0.77 -0.77zM107.2 164.3l0.77 -0.77h1.26l0.77 0.77v1.26l-0.77 0.77h-1.26l-0.77 -0.77zM107.4 164.6l0.77 -0.77h1.26l0.77 0.77v1.26l-0.77 0.77h-1.26l-0.77 -0.77zM107.6 164.9l0.77 -0.77h1.26l0.77 0.77v1.26l-0.77 0.77h-1.26l-0.77 -0.77zM107.8 163.7l0.77 -0.77h1.26l0.77 0.77v1.26l-0.77 0.77h-1.26l-0.77 -0.77zM108.1 163.8l0.77 -0.77h1.26l0.77 0.77v1.26l-0.77 0.77h-1.26l-0.77 -0.77zM108.3 164.8l0.77 -0.77h1.26l0.77 0.77v1.26l-0.77 0.77h-1.26l-0.77 -0.77zM108.5 163.8l0.77 -0.77h1.26l0.77 0.77v1.26l-0.77 0.77h-1.26l-0.77 -0.77zM108.7 164.5l0.77 -0.77h1.26l0.77 0.77v1.26l-0.77 0.77h-1.26l-0.77 -0.77zM108.9 165.1l0.77 -0.77h1.26l0.77 0.77v1.26l-0.77 0.77h-1.26l-0.77 -0.77zM109.1 164.1l0.77 -0.77h1.26l0.77 0.77v1.26l-0.77 0.77h-1.26l-0.77 -0.77zM109.3 164.3l0.77 -0.77h1.26l0.77 0.77v1.26l-0.77 0.77h-1.26l-0.77 -0.77zM109.6 166.5l0.77 -0.77h1.26l0.77 0.77v1.26l-0.77 0.77h-1.26l-0.77 -0.77zM109.8 164.9l0.77 -0.77h1.26l0.77 0.77v1.26l-0.77 0.77h-1.26l-0.77 -0.77zM110.0 165.6l0.77 -0.77h1.26l0.77 0.77v1.26l-0.77 0.77h-1.26l-0.77 -0.77zM110.2 165.3l0.77 -0.77h1.26l0.77 0.77v1.26l-0.77 0.77h-1.26l-0.77 -0.77zM110.4 166.8l0.77 -0.77h1.26l0.77 0.77v1.26l-0.77 0.77h-1.26l-0.77 -0.77zM110.6 165.0l0.77 -0.77h1.26l0.77 0.77v1.26l-0.77 0.77h-1.26l-0.77 -0.77zM110.8 163.9l0.77 -0.77h1.26l0.77 0.77v1.26l-0.77 0.77h-1.26l-0.77 -0.77zM111.0 165.1l0.77 -0.77h1.26l0.77 0.77v1.26l-0.77 0.77h-1.26l-0.77 -0.77zM111.3 163.8l0.77 -0.77h1.26l0.77 0.77v1.26l-0.77 0.77h-1.26l-0.77 -0.77zM111.5 164.3l0.77 -0.77h1.26l0.77 0.77v1.26l-0.77 0.77h-1.26l-0.77 -0.77zM111.7 164.4l0.77 -0.77h1.26l0.77 0.77v1.26l-0.77 0.77h-1.26l-0.77 -0.77zM111.9 164.4l0.77 -0.77h1.26l0.77 0.77v1.26l-0.77 0.77h-1.26l-0.77 -0.77zM112.1 163.1l0.77 -0.77h1.26l0.77 0.77v1.26l-0.77 0.77h-1.26l-0.77 -0.77zM112.3 164.2l0.77 -0.77h1.26l0.77 0.77v1.26l-0.77 0.77h-1.26l-0.77 -0.77zM112.5 163.9l0.77 -0.77h1.26l0.77 0.77v1.26l-0.77 0.77h-1.26l-0.77 -0.77zM112.7 164.1l0.77 -0.77h1.26l0.77 0.77v1.26l-0.77 0.77h-1.26l-0.77 -0.77zM113.0 164.5l0.77 -0.77h1.26l0.77 0.77v1.26l-0.77 0.77h-1.26l-0.77 -0.77zM113.2 165.1l0.77 -0.77h1.26l0.77 0.77v1.26l-0.77 0.77h-1.26l-0.77 -0.77zM113.4 165.3l0.77 -0.77h1.26l0.77 0.77v1.26l-0.77 0.77h-1.26l-0.77 -0.77zM113.6 162.8l0.77 -0.77h1.26l0.77 0.77v1.26l-0.77 0.77h-1.26l-0.77 -0.77zM113.8 164.4l0.77 -0.77h1.26l0.77 0.77v1.26l-0.77 0.77h-1.26l-0.77 -0.77zM114.0 166.9l0.77 -0.77h1.26l0.77 0.77v1.26l-0.77 0.77h-1.26l-0.77 -0.77zM114.2 166.0l0.77 -0.77h1.26l0.77 0.77v1.26l-0.77 0.77h-1.26l-0.77 -0.77zM114.5 164.4l0.77 -0.77h1.26l0.77 0.77v1.26l-0.77 0.77h-1.26l-0.77 -0.77zM114.7 165.3l0.77 -0.77h1.26l0.77 0.77v1.26l-0.77 0.77h-1.26l-0.77 -0.77zM114.9 165.6l0.77 -0.77h1.26l0.77 0.77v1.26l-0.77 0.77h-1.26l-0.77 -0.77zM115.1 164.6l0.77 -0.77h1.26l0.77 0.77v1.26l-0.77 0.77h-1.26l-0.77 -0.77zM115.3 165.2l0.77 -0.77h1.26l0.77 0.77v1.26l-0.77 0.77h-1.26l-0.77 -0.77zM115.5 165.2l0.77 -0.77h1.26l0.77 0.77v1.26l-0.77 0.77h-1.26l-0.77 -0.77zM115.7 164.6l0.77 -0.77h1.26l0.77 0.77v1.26l-0.77 0.77h-1.26l-0.77 -0.77zM115.9 162.3l0.77 -0.77h1.26l0.77 0.77v1.26l-0.77 0.77h-1.26l-0.77 -0.77zM116.2 165.4l0.77 -0.77h1.26l0.77 0.77v1.26l-0.77 0.77h-1.26l-0.77 -0.77zM116.4 164.5l0.77 -0.77h1.26l0.77 0.77v1.26l-0.77 0.77h-1.26l-0.77 -0.77zM116.6 163.3l0.77 -0.77h1.26l0.77 0.77v1.26l-0.77 0.77h-1.26l-0.77 -0.77zM116.8 164.9l0.77 -0.77h1.26l0.77 0.77v1.26l-0.77 0.77h-1.26l-0.77 -0.77zM117.0 164.1l0.77 -0.77h1.26l0.77 0.77v1.26l-0.77 0.77h-1.26l-0.77 -0.77zM117.2 165.0l0.77 -0.77h1.26l0.77 0.77v1.26l-0.77 0.77h-1.26l-0.77 -0.77zM117.4 165.7l0.77 -0.77h1.26l0.77 0.77v1.26l-0.77 0.77h-1.26l-0.77 -0.77zM117.6 164.0l0.77 -0.77h1.26l0.77 0.77v1.26l-0.77 0.77h-1.26l-0.77 -0.77zM117.9 164.2l0.77 -0.77h1.26l0.77 0.77v1.26l-0.77 0.77h-1.26l-0.77 -0.77zM118.1 164.6l0.77 -0.77h1.26l0.77 0.77v1.26l-0.77 0.77h-1.26l-0.77 -0.77zM118.3 164.2l0.77 -0.77h1.26l0.77 0.77v1.26l-0.77 0.77h-1.26l-0.77 -0.77zM118.5 164.8l0.77 -0.77h1.26l0.77 0.77v1.26l-0.77 0.77h-1.26l-0.77 -0.77zM118.7 163.7l0.77 -0.77h1.26l0.77 0.77v1.26l-0.77 0.77h-1.26l-0.77 -0.77zM118.9 163.8l0.77 -0.77h1.26l0.77 0.77v1.26l-0.77 0.77h-1.26l-0.77 -0.77zM119.1 164.8l0.77 -0.77h1.26l0.77 0.77v1.26l-0.77 0.77h-1.26l-0.77 -0.77zM119.3 164.3l0.77 -0.77h1.26l0.77 0.77v1.26l-0.77 0.77h-1.26l-0.77 -0.77zM119.6 164.7l0.77 -0.77h1.26l0.77 0.77v1.26l-0.77 0.77h-1.26l-0.77 -0.77zM119.8 165.3l0.77 -0.77h1.26l0.77 0.77v1.26l-0.77 0.77h-1.26l-0.77 -0.77zM120.0 164.3l0.77 -0.77h1.26l0.77 0.77v1.26l-0.77 0.77h-1.26l-0.77 -0.77zM120.2 164.9l0.77 -0.77h1.26l0.77 0.77v1.26l-0.77 0.77h-1.26l-0.77 -0.77zM120.4 165.1l0.77 -0.77h1.26l0.77 0.77v1.26l-0.77 0.77h-1.26l-0.77 -0.77zM120.6 164.5l0.77 -0.77h1.26l0.77 0.77v1.26l-0.77 0.77h-1.26l-0.77 -0.77zM120.8 164.5l0.77 -0.77h1.26l0.77 0.77v1.26l-0.77 0.77h-1.26l-0.77 -0.77zM121.1 164.2l0.77 -0.77h1.26l0.77 0.77v1.26l-0.77 0.77h-1.26l-0.77 -0.77zM121.3 163.8l0.77 -0.77h1.26l0.77 0.77v1.26l-0.77 0.77h-1.26l-0.77 -0.77zM121.5 164.2l0.77 -0.77h1.26l0.77 0.77v1.26l-0.77 0.77h-1.26l-0.77 -0.77zM121.7 164.7l0.77 -0.77h1.26l0.77 0.77v1.26l-0.77 0.77h-1.26l-0.77 -0.77zM121.9 163.7l0.77 -0.77h1.26l0.77 0.77v1.26l-0.77 0.77h-1.26l-0.77 -0.77zM122.1 165.6l0.77 -0.77h1.26l0.77 0.77v1.26l-0.77 0.77h-1.26l-0.77 -0.77zM122.3 165.8l0.77 -0.77h1.26l0.77 0.77v1.26l-0.77 0.77h-1.26l-0.77 -0.77zM122.5 164.0l0.77 -0.77h1.26l0.77 0.77v1.26l-0.77 0.77h-1.26l-0.77 -0.77zM122.8 169.1l0.77 -0.77h1.26l0.77 0.77v1.26l-0.77 0.77h-1.26l-0.77 -0.77zM123.0 164.1l0.77 -0.77h1.26l0.77 0.77v1.26l-0.77 0.77h-1.26l-0.77 -0.77zM123.2 164.6l0.77 -0.77h1.26l0.77 0.77v1.26l-0.77 0.77h-1.26l-0.77 -0.77zM123.4 163.5l0.77 -0.77h1.26l0.77 0.77v1.26l-0.77 0.77h-1.26l-0.77 -0.77zM123.6 164.9l0.77 -0.77h1.26l0.77 0.77v1.26l-0.77 0.77h-1.26l-0.77 -0.77zM123.8 163.6l0.77 -0.77h1.26l0.77 0.77v1.26l-0.77 0.77h-1.26l-0.77 -0.77zM124.0 163.5l0.77 -0.77h1.26l0.77 0.77v1.26l-0.77 0.77h-1.26l-0.77 -0.77zM124.2 162.0l0.77 -0.77h1.26l0.77 0.77v1.26l-0.77 0.77h-1.26l-0.77 -0.77zM124.5 164.8l0.77 -0.77h1.26l0.77 0.77v1.26l-0.77 0.77h-1.26l-0.77 -0.77zM124.7 165.1l0.77 -0.77h1.26l0.77 0.77v1.26l-0.77 0.77h-1.26l-0.77 -0.77zM124.9 165.2l0.77 -0.77h1.26l0.77 0.77v1.26l-0.77 0.77h-1.26l-0.77 -0.77zM125.1 163.6l0.77 -0.77h1.26l0.77 0.77v1.26l-0.77 0.77h-1.26l-0.77 -0.77zM125.3 164.4l0.77 -0.77h1.26l0.77 0.77v1.26l-0.77 0.77h-1.26l-0.77 -0.77zM125.5 164.6l0.77 -0.77h1.26l0.77 0.77v1.26l-0.77 0.77h-1.26l-0.77 -0.77zM125.7 166.1l0.77 -0.77h1.26l0.77 0.77v1.26l-0.77 0.77h-1.26l-0.77 -0.77zM126.0 163.9l0.77 -0.77h1.26l0.77 0.77v1.26l-0.77 0.77h-1.26l-0.77 -0.77zM126.2 163.6l0.77 -0.77h1.26l0.77 0.77v1.26l-0.77 0.77h-1.26l-0.77 -0.77zM126.4 165.0l0.77 -0.77h1.26l0.77 0.77v1.26l-0.77 0.77h-1.26l-0.77 -0.77zM126.6 163.7l0.77 -0.77h1.26l0.77 0.77v1.26l-0.77 0.77h-1.26l-0.77 -0.77zM126.8 165.6l0.77 -0.77h1.26l0.77 0.77v1.26l-0.77 0.77h-1.26l-0.77 -0.77zM127.0 163.0l0.77 -0.77h1.26l0.77 0.77v1.26l-0.77 0.77h-1.26l-0.77 -0.77zM127.2 164.0l0.77 -0.77h1.26l0.77 0.77v1.26l-0.77 0.77h-1.26l-0.77 -0.77zM127.4 164.3l0.77 -0.77h1.26l0.77 0.77v1.26l-0.77 0.77h-1.26l-0.77 -0.77zM127.7 164.8l0.77 -0.77h1.26l0.77 0.77v1.26l-0.77 0.77h-1.26l-0.77 -0.77zM127.9 164.2l0.77 -0.77h1.26l0.77 0.77v1.26l-0.77 0.77h-1.26l-0.77 -0.77zM128.1 164.8l0.77 -0.77h1.26l0.77 0.77v1.26l-0.77 0.77h-1.26l-0.77 -0.77zM128.3 164.7l0.77 -0.77h1.26l0.77 0.77v1.26l-0.77 0.77h-1.26l-0.77 -0.77zM128.5 164.5l0.77 -0.77h1.26l0.77 0.77v1.26l-0.77 0.77h-1.26l-0.77 -0.77zM128.7 164.7l0.77 -0.77h1.26l0.77 0.77v1.26l-0.77 0.77h-1.26l-0.77 -0.77zM128.9 164.3l0.77 -0.77h1.26l0.77 0.77v1.26l-0.77 0.77h-1.26l-0.77 -0.77zM129.1 167.2l0.77 -0.77h1.26l0.77 0.77v1.26l-0.77 0.77h-1.26l-0.77 -0.77zM129.4 166.0l0.77 -0.77h1.26l0.77 0.77v1.26l-0.77 0.77h-1.26l-0.77 -0.77zM129.6 163.9l0.77 -0.77h1.26l0.77 0.77v1.26l-0.77 0.77h-1.26l-0.77 -0.77zM129.8 160.6l0.77 -0.77h1.26l0.77 0.77v1.26l-0.77 0.77h-1.26l-0.77 -0.77zM130.0 164.4l0.77 -0.77h1.26l0.77 0.77v1.26l-0.77 0.77h-1.26l-0.77 -0.77zM130.2 164.6l0.77 -0.77h1.26l0.77 0.77v1.26l-0.77 0.77h-1.26l-0.77 -0.77zM130.4 163.7l0.77 -0.77h1.26l0.77 0.77v1.26l-0.77 0.77h-1.26l-0.77 -0.77zM130.6 165.6l0.77 -0.77h1.26l0.77 0.77v1.26l-0.77 0.77h-1.26l-0.77 -0.77zM130.8 165.0l0.77 -0.77h1.26l0.77 0.77v1.26l-0.77 0.77h-1.26l-0.77 -0.77zM131.1 162.6l0.77 -0.77h1.26l0.77 0.77v1.26l-0.77 0.77h-1.26l-0.77 -0.77zM131.3 161.8l0.77 -0.77h1.26l0.77 0.77v1.26l-0.77 0.77h-1.26l-0.77 -0.77zM131.5 165.3l0.77 -0.77h1.26l0.77 0.77v1.26l-0.77 0.77h-1.26l-0.77 -0.77zM131.7 164.6l0.77 -0.77h1.26l0.77 0.77v1.26l-0.77 0.77h-1.26l-0.77 -0.77zM131.9 165.1l0.77 -0.77h1.26l0.77 0.77v1.26l-0.77 0.77h-1.26l-0.77 -0.77zM132.1 164.8l0.77 -0.77h1.26l0.77 0.77v1.26l-0.77 0.77h-1.26l-0.77 -0.77zM132.3 165.7l0.77 -0.77h1.26l0.77 0.77v1.26l-0.77 0.77h-1.26l-0.77 -0.77zM132.6 164.8l0.77 -0.77h1.26l0.77 0.77v1.26l-0.77 0.77h-1.26l-0.77 -0.77zM132.8 163.3l0.77 -0.77h1.26l0.77 0.77v1.26l-0.77 0.77h-1.26l-0.77 -0.77zM133.0 164.7l0.77 -0.77h1.26l0.77 0.77v1.26l-0.77 0.77h-1.26l-0.77 -0.77zM133.2 163.7l0.77 -0.77h1.26l0.77 0.77v1.26l-0.77 0.77h-1.26l-0.77 -0.77zM133.4 164.8l0.77 -0.77h1.26l0.77 0.77v1.26l-0.77 0.77h-1.26l-0.77 -0.77zM133.6 166.0l0.77 -0.77h1.26l0.77 0.77v1.26l-0.77 0.77h-1.26l-0.77 -0.77zM133.8 163.4l0.77 -0.77h1.26l0.77 0.77v1.26l-0.77 0.77h-1.26l-0.77 -0.77zM134.0 169.8l0.77 -0.77h1.26l0.77 0.77v1.26l-0.77 0.77h-1.26l-0.77 -0.77zM134.3 162.9l0.77 -0.77h1.26l0.77 0.77v1.26l-0.77 0.77h-1.26l-0.77 -0.77zM134.5 164.6l0.77 -0.77h1.26l0.77 0.77v1.26l-0.77 0.77h-1.26l-0.77 -0.77zM134.7 163.5l0.77 -0.77h1.26l0.77 0.77v1.26l-0.77 0.77h-1.26l-0.77 -0.77zM134.9 162.5l0.77 -0.77h1.26l0.77 0.77v1.26l-0.77 0.77h-1.26l-0.77 -0.77zM135.1 165.8l0.77 -0.77h1.26l0.77 0.77v1.26l-0.77 0.77h-1.26l-0.77 -0.77zM135.3 164.4l0.77 -0.77h1.26l0.77 0.77v1.26l-0.77 0.77h-1.26l-0.77 -0.77zM135.5 163.9l0.77 -0.77h1.26l0.77 0.77v1.26l-0.77 0.77h-1.26l-0.77 -0.77zM135.7 162.6l0.77 -0.77h1.26l0.77 0.77v1.26l-0.77 0.77h-1.26l-0.77 -0.77zM136.0 164.3l0.77 -0.77h1.26l0.77 0.77v1.26l-0.77 0.77h-1.26l-0.77 -0.77zM136.2 164.0l0.77 -0.77h1.26l0.77 0.77v1.26l-0.77 0.77h-1.26l-0.77 -0.77zM136.4 163.4l0.77 -0.77h1.26l0.77 0.77v1.26l-0.77 0.77h-1.26l-0.77 -0.77zM136.6 164.7l0.77 -0.77h1.26l0.77 0.77v1.26l-0.77 0.77h-1.26l-0.77 -0.77zM136.8 163.2l0.77 -0.77h1.26l0.77 0.77v1.26l-0.77 0.77h-1.26l-0.77 -0.77zM137.0 165.5l0.77 -0.77h1.26l0.77 0.77v1.26l-0.77 0.77h-1.26l-0.77 -0.77zM137.2 164.6l0.77 -0.77h1.26l0.77 0.77v1.26l-0.77 0.77h-1.26l-0.77 -0.77zM137.5 164.6l0.77 -0.77h1.26l0.77 0.77v1.26l-0.77 0.77h-1.26l-0.77 -0.77zM137.7 163.7l0.77 -0.77h1.26l0.77 0.77v1.26l-0.77 0.77h-1.26l-0.77 -0.77zM137.9 164.9l0.77 -0.77h1.26l0.77 0.77v1.26l-0.77 0.77h-1.26l-0.77 -0.77zM138.1 164.6l0.77 -0.77h1.26l0.77 0.77v1.26l-0.77 0.77h-1.26l-0.77 -0.77zM138.3 164.1l0.77 -0.77h1.26l0.77 0.77v1.26l-0.77 0.77h-1.26l-0.77 -0.77zM138.5 164.8l0.77 -0.77h1.26l0.77 0.77v1.26l-0.77 0.77h-1.26l-0.77 -0.77zM138.7 164.6l0.77 -0.77h1.26l0.77 0.77v1.26l-0.77 0.77h-1.26l-0.77 -0.77zM138.9 164.2l0.77 -0.77h1.26l0.77 0.77v1.26l-0.77 0.77h-1.26l-0.77 -0.77zM139.2 164.2l0.77 -0.77h1.26l0.77 0.77v1.26l-0.77 0.77h-1.26l-0.77 -0.77zM139.4 163.2l0.77 -0.77h1.26l0.77 0.77v1.26l-0.77 0.77h-1.26l-0.77 -0.77zM139.6 164.5l0.77 -0.77h1.26l0.77 0.77v1.26l-0.77 0.77h-1.26l-0.77 -0.77zM139.8 165.4l0.77 -0.77h1.26l0.77 0.77v1.26l-0.77 0.77h-1.26l-0.77 -0.77zM140.0 164.1l0.77 -0.77h1.26l0.77 0.77v1.26l-0.77 0.77h-1.26l-0.77 -0.77zM140.2 164.8l0.77 -0.77h1.26l0.77 0.77v1.26l-0.77 0.77h-1.26l-0.77 -0.77zM140.4 163.3l0.77 -0.77h1.26l0.77 0.77v1.26l-0.77 0.77h-1.26l-0.77 -0.77zM140.6 164.8l0.77 -0.77h1.26l0.77 0.77v1.26l-0.77 0.77h-1.26l-0.77 -0.77zM140.9 164.4l0.77 -0.77h1.26l0.77 0.77v1.26l-0.77 0.77h-1.26l-0.77 -0.77zM141.1 165.5l0.77 -0.77h1.26l0.77 0.77v1.26l-0.77 0.77h-1.26l-0.77 -0.77zM141.3 166.2l0.77 -0.77h1.26l0.77 0.77v1.26l-0.77 0.77h-1.26l-0.77 -0.77zM141.5 164.2l0.77 -0.77h1.26l0.77 0.77v1.26l-0.77 0.77h-1.26l-0.77 -0.77zM141.7 163.9l0.77 -0.77h1.26l0.77 0.77v1.26l-0.77 0.77h-1.26l-0.77 -0.77zM141.9 164.1l0.77 -0.77h1.26l0.77 0.77v1.26l-0.77 0.77h-1.26l-0.77 -0.77zM142.1 164.0l0.77 -0.77h1.26l0.77 0.77v1.26l-0.77 0.77h-1.26l-0.77 -0.77zM142.3 173.1l0.77 -0.77h1.26l0.77 0.77v1.26l-0.77 0.77h-1.26l-0.77 -0.77zM142.6 165.8l0.77 -0.77h1.26l0.77 0.77v1.26l-0.77 0.77h-1.26l-0.77 -0.77zM142.8 165.0l0.77 -0.77h1.26l0.77 0.77v1.26l-0.77 0.77h-1.26l-0.77 -0.77zM143.0 164.9l0.77 -0.77h1.26l0.77 0.77v1.26l-0.77 0.77h-1.26l-0.77 -0.77zM143.2 163.5l0.77 -0.77h1.26l0.77 0.77v1.26l-0.77 0.77h-1.26l-0.77 -0.77zM143.4 163.7l0.77 -0.77h1.26l0.77 0.77v1.26l-0.77 0.77h-1.26l-0.77 -0.77zM143.6 164.5l0.77 -0.77h1.26l0.77 0.77v1.26l-0.77 0.77h-1.26l-0.77 -0.77zM143.8 164.5l0.77 -0.77h1.26l0.77 0.77v1.26l-0.77 0.77h-1.26l-0.77 -0.77zM144.1 164.1l0.77 -0.77h1.26l0.77 0.77v1.26l-0.77 0.77h-1.26l-0.77 -0.77zM144.3 167.3l0.77 -0.77h1.26l0.77 0.77v1.26l-0.77 0.77h-1.26l-0.77 -0.77zM144.5 164.4l0.77 -0.77h1.26l0.77 0.77v1.26l-0.77 0.77h-1.26l-0.77 -0.77zM144.7 163.5l0.77 -0.77h1.26l0.77 0.77v1.26l-0.77 0.77h-1.26l-0.77 -0.77zM144.9 163.5l0.77 -0.77h1.26l0.77 0.77v1.26l-0.77 0.77h-1.26l-0.77 -0.77zM145.1 164.7l0.77 -0.77h1.26l0.77 0.77v1.26l-0.77 0.77h-1.26l-0.77 -0.77zM145.3 164.8l0.77 -0.77h1.26l0.77 0.77v1.26l-0.77 0.77h-1.26l-0.77 -0.77zM145.5 165.3l0.77 -0.77h1.26l0.77 0.77v1.26l-0.77 0.77h-1.26l-0.77 -0.77zM145.8 162.8l0.77 -0.77h1.26l0.77 0.77v1.26l-0.77 0.77h-1.26l-0.77 -0.77zM146.0 164.1l0.77 -0.77h1.26l0.77 0.77v1.26l-0.77 0.77h-1.26l-0.77 -0.77zM146.2 164.0l0.77 -0.77h1.26l0.77 0.77v1.26l-0.77 0.77h-1.26l-0.77 -0.77zM146.4 165.5l0.77 -0.77h1.26l0.77 0.77v1.26l-0.77 0.77h-1.26l-0.77 -0.77zM146.6 164.3l0.77 -0.77h1.26l0.77 0.77v1.26l-0.77 0.77h-1.26l-0.77 -0.77zM146.8 163.8l0.77 -0.77h1.26l0.77 0.77v1.26l-0.77 0.77h-1.26l-0.77 -0.77zM147.0 163.4l0.77 -0.77h1.26l0.77 0.77v1.26l-0.77 0.77h-1.26l-0.77 -0.77zM147.2 164.1l0.77 -0.77h1.26l0.77 0.77v1.26l-0.77 0.77h-1.26l-0.77 -0.77zM147.5 163.5l0.77 -0.77h1.26l0.77 0.77v1.26l-0.77 0.77h-1.26l-0.77 -0.77zM147.7 164.2l0.77 -0.77h1.26l0.77 0.77v1.26l-0.77 0.77h-1.26l-0.77 -0.77zM147.9 162.5l0.77 -0.77h1.26l0.77 0.77v1.26l-0.77 0.77h-1.26l-0.77 -0.77zM148.1 162.1l0.77 -0.77h1.26l0.77 0.77v1.26l-0.77 0.77h-1.26l-0.77 -0.77zM148.3 164.2l0.77 -0.77h1.26l0.77 0.77v1.26l-0.77 0.77h-1.26l-0.77 -0.77zM148.5 165.7l0.77 -0.77h1.26l0.77 0.77v1.26l-0.77 0.77h-1.26l-0.77 -0.77zM148.7 165.0l0.77 -0.77h1.26l0.77 0.77v1.26l-0.77 0.77h-1.26l-0.77 -0.77zM149.0 161.5l0.77 -0.77h1.26l0.77 0.77v1.26l-0.77 0.77h-1.26l-0.77 -0.77zM149.2 165.3l0.77 -0.77h1.26l0.77 0.77v1.26l-0.77 0.77h-1.26l-0.77 -0.77zM149.4 163.7l0.77 -0.77h1.26l0.77 0.77v1.26l-0.77 0.77h-1.26l-0.77 -0.77zM149.6 163.3l0.77 -0.77h1.26l0.77 0.77v1.26l-0.77 0.77h-1.26l-0.77 -0.77zM149.8 163.7l0.77 -0.77h1.26l0.77 0.77v1.26l-0.77 0.77h-1.26l-0.77 -0.77zM150.0 170.0l0.77 -0.77h1.26l0.77 0.77v1.26l-0.77 0.77h-1.26l-0.77 -0.77zM150.2 164.3l0.77 -0.77h1.26l0.77 0.77v1.26l-0.77 0.77h-1.26l-0.77 -0.77zM150.4 167.5l0.77 -0.77h1.26l0.77 0.77v1.26l-0.77 0.77h-1.26l-0.77 -0.77zM150.7 165.3l0.77 -0.77h1.26l0.77 0.77v1.26l-0.77 0.77h-1.26l-0.77 -0.77zM150.9 165.3l0.77 -0.77h1.26l0.77 0.77v1.26l-0.77 0.77h-1.26l-0.77 -0.77zM151.1 162.9l0.77 -0.77h1.26l0.77 0.77v1.26l-0.77 0.77h-1.26l-0.77 -0.77zM151.3 162.2l0.77 -0.77h1.26l0.77 0.77v1.26l-0.77 0.77h-1.26l-0.77 -0.77zM151.5 164.2l0.77 -0.77h1.26l0.77 0.77v1.26l-0.77 0.77h-1.26l-0.77 -0.77zM151.7 163.8l0.77 -0.77h1.26l0.77 0.77v1.26l-0.77 0.77h-1.26l-0.77 -0.77zM151.9 164.0l0.77 -0.77h1.26l0.77 0.77v1.26l-0.77 0.77h-1.26l-0.77 -0.77zM152.1 163.9l0.77 -0.77h1.26l0.77 0.77v1.26l-0.77 0.77h-1.26l-0.77 -0.77zM152.4 163.7l0.77 -0.77h1.26l0.77 0.77v1.26l-0.77 0.77h-1.26l-0.77 -0.77zM152.6 164.2l0.77 -0.77h1.26l0.77 0.77v1.26l-0.77 0.77h-1.26l-0.77 -0.77zM38.7 156.1l0.77 -0.77h1.26l0.77 0.77v1.26l-0.77 0.77h-1.26l-0.77 -0.77zM39.3 170.4l0.77 -0.77h1.26l0.77 0.77v1.26l-0.77 0.77h-1.26l-0.77 -0.77zM118.6 157.8l0.77 -0.77h1.26l0.77 0.77v1.26l-0.77 0.77h-1.26l-0.77 -0.77zM131.4 158.3l0.77 -0.77h1.26l0.77 0.77v1.26l-0.77 0.77h-1.26l-0.77 -0.77zM109.0 169.9l0.77 -0.77h1.26l0.77 0.77v1.26l-0.77 0.77h-1.26l-0.77 -0.77zM130.3 169.9l0.77 -0.77h1.26l0.77 0.77v1.26l-0.77 0.77h-1.26l-0.77 -0.77zM202.2 164.4l0.77 -0.77h1.26l0.77 0.77v1.26l-0.77 0.77h-1.26l-0.77 -0.77zM202.7 164.4l0.77 -0.77h1.26l0.77 0.77v1.26l-0.77 0.77h-1.26l-0.77 -0.77zM343.3 164.4l0.77 -0.77h1.26l0.77 0.77v1.26l-0.77 0.77h-1.26l-0.77 -0.77z" fill="#4C72B0"/><path d="M0.5 0V275.5H345" fill="none" stroke="rgb(90,91,92)" stroke-width="1"/><path d="M2.5 275v-5 M56.5 275v-5 M109.5 275v-5 M162.5 275v-5 M215.5 275v-5 M269.5 275v-5 M322.5 275v-5 M0 275.5h5 M0 247.5h5 M0 220.5h5 M0 192.5h5 M0 165.5h5 M0 137.5h5 M0 110.5h5 M0 82.5h5 M0 55.5h5 M0 27.5h5 M0 0.5h5" stroke="rgb(90,91,92)" stroke-width="1"/></svg>
<div class="t" style="left:1159.875px;width:600px;text-align:center;top:799px;">15</div>
<div class="t" style="left:1213.1157407407406px;width:600px;text-align:center;top:799px;">20</div>
<div class="t" style="left:1266.3564814814815px;width:600px;text-align:center;top:799px;">25</div>
<div class="t" style="left:1319.5972222222222px;width:600px;text-align:center;top:799px;">30</div>
<div class="t" style="left:1372.8379629629628px;width:600px;text-align:center;top:799px;">35</div>
<div class="t" style="left:1426.0787037037037px;width:600px;text-align:center;top:799px;">40</div>
<div class="t" style="left:1479.3194444444443px;width:600px;text-align:center;top:799px;">45</div>
<div class="t" style="left:1150px;width:300px;text-align:right;top:786px;">0</div>
<div class="t" style="left:1150px;width:300px;text-align:right;top:758px;">5</div>
<div class="t" style="left:1150px;width:300px;text-align:right;top:731px;">10</div>
<div class="t" style="left:1150px;width:300px;text-align:right;top:704px;">15</div>
<div class="t" style="left:1150px;width:300px;text-align:right;top:676px;">20</div>
<div class="t" style="left:1150px;width:300px;text-align:right;top:648px;">25</div>
<div class="t" style="left:1150px;width:300px;text-align:right;top:621px;">30</div>
<div class="t" style="left:1150px;width:300px;text-align:right;top:594px;">35</div>
<div class="t" style="left:1150px;width:300px;text-align:right;top:566px;">40</div>
<div class="t" style="left:1150px;width:300px;text-align:right;top:538px;">45</div>
<div class="t" style="left:1150px;width:300px;text-align:right;top:511px;">50</div>
<div class="t" style="left:1120px;top:646.5px;width:600px;text-align:center;transform:rotate(-90deg);">Timestep duration (ms)</div>
<div class="r" style="left:1644px;top:527px;width:147px;height:46px;background:rgba(28,28,36,0.92);border:1px solid rgb(77,77,81);"></div>
<div class="r" style="left:1651px;top:534px;width:15px;height:15px;background:#4C72B0;"></div>
<div class="t" style="left:1668px;top:535px;">Filtered Data</div>
<div class="r" style="left:1651px;top:553px;width:15px;height:15px;background:#DD8452;"></div>
<div class="t" style="left:1668px;top:554px;">Fit</div>
<div class="r" style="left:978px;top:853px;width:95px;height:25px;background:rgb(53,56,57);"></div>
<div class="t" style="left:982px;top:859px;">0.81463</div>
<div class="t" style="left:1077px;top:859px;">Acceleration R&#178;</div>
<div class="t" style="left:1232px;top:859px;color:rgb(153,153,153);">(?)</div>
<div class="r" style="left:1268px;top:853px;width:95px;height:25px;background:rgb(53,56,57);"></div>
<div class="t" style="left:1272px;top:859px;">3.7498</div>
<div class="t" style="left:1367px;top:859px;">Acceleration RMSE</div>
<div class="t" style="left:1540px;top:859px;color:rgb(153,153,153);">(?)</div>
<div class="r" style="left:978px;top:882px;width:95px;height:25px;background:rgb(53,56,57);"></div>
<div class="t" style="left:982px;top:888px;">0.96806</div>
<div class="t" style="left:1077px;top:888px;">Sim velocity R&#178;</div>
<div class="t" style="left:1232px;top:888px;color:rgb(153,153,153);">(?)</div>
<div class="r" style="left:1268px;top:882px;width:95px;height:25px;background:rgb(53,56,57);"></div>
<div class="t" style="left:1272px;top:888px;">0.21896</div>
<div class="t" style="left:1367px;top:888px;">Sim velocity RMSE</div>
<div class="t" style="left:1540px;top:888px;color:rgb(153,153,153);">(?)</div>
</div></body></html>
